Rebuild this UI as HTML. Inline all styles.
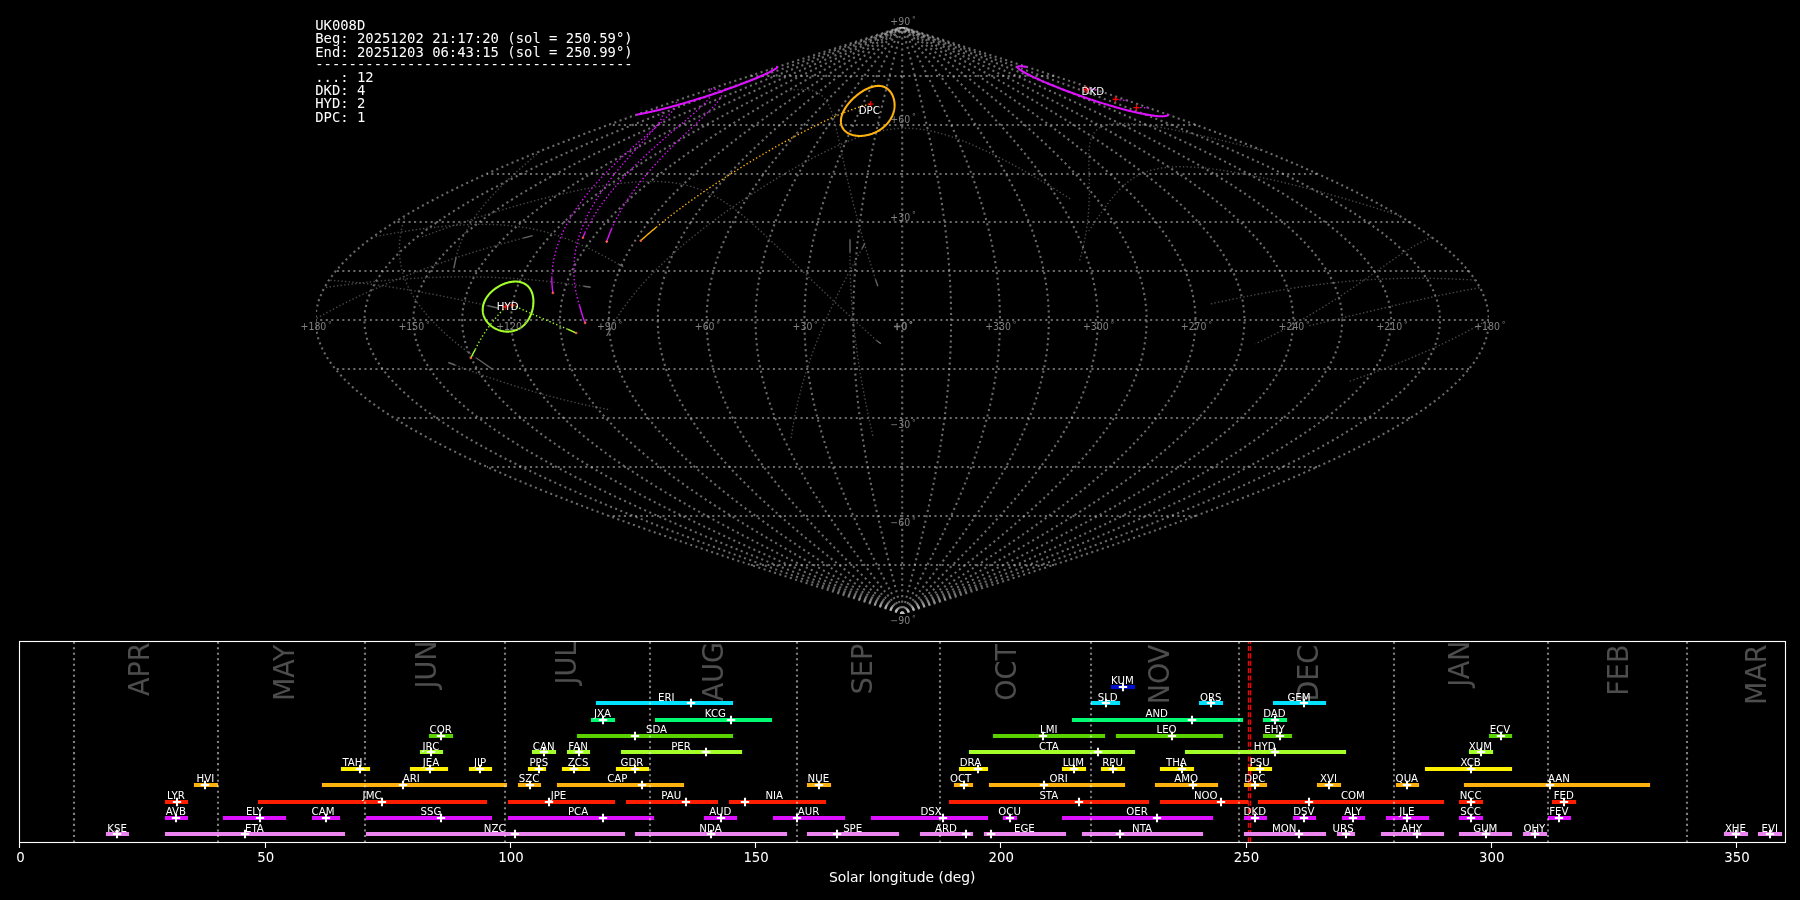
<!DOCTYPE html>
<html><head><meta charset="utf-8"><title>UK008D shower association</title>
<style>html,body{margin:0;padding:0;background:#000;}body{width:1800px;height:900px;overflow:hidden}svg{display:block}</style>
</head><body>
<svg width="1800" height="900" viewBox="0 0 1800 900" style="will-change:transform">
<rect width="1800" height="900" fill="#000"/>
<svg x="316" y="27" width="1173" height="587" viewBox="316 27 1173 587" overflow="hidden">
<g fill="none" stroke="#c0c0c0" stroke-opacity="0.55" stroke-width="2.083" stroke-dasharray="2.083 3.438">
<path d="M902.2 613.7 L902.2 603.92 L902.2 594.14 L902.2 584.36 L902.2 574.58 L902.2 564.8 L902.2 555.02 L902.2 545.24 L902.2 535.46 L902.2 525.68 L902.2 515.9 L902.2 506.12 L902.2 496.34 L902.2 486.56 L902.2 476.78 L902.2 467 L902.2 457.22 L902.2 447.44 L902.2 437.66 L902.2 427.88 L902.2 418.1 L902.2 408.32 L902.2 398.54 L902.2 388.76 L902.2 378.98 L902.2 369.2 L902.2 359.42 L902.2 349.64 L902.2 339.86 L902.2 330.08 L902.2 320.3 L902.2 310.52 L902.2 300.74 L902.2 290.96 L902.2 281.18 L902.2 271.4 L902.2 261.62 L902.2 251.84 L902.2 242.06 L902.2 232.28 L902.2 222.5 L902.2 212.72 L902.2 202.94 L902.2 193.16 L902.2 183.38 L902.2 173.6 L902.2 163.82 L902.2 154.04 L902.2 144.26 L902.2 134.48 L902.2 124.7 L902.2 114.92 L902.2 105.14 L902.2 95.36 L902.2 85.58 L902.2 75.8 L902.2 66.02 L902.2 56.24 L902.2 46.46 L902.2 36.68 L902.2 26.9"/>
<path d="M902.2 613.7 L899.64 603.92 L897.09 594.14 L894.55 584.36 L892.03 574.58 L889.54 564.8 L887.09 555.02 L884.68 545.24 L882.31 535.46 L880 525.68 L877.75 515.9 L875.57 506.12 L873.46 496.34 L871.43 486.56 L869.48 476.78 L867.62 467 L865.86 457.22 L864.2 447.44 L862.64 437.66 L861.19 427.88 L859.85 418.1 L858.63 408.32 L857.53 398.54 L856.55 388.76 L855.69 378.98 L854.97 369.2 L854.37 359.42 L853.9 349.64 L853.57 339.86 L853.37 330.08 L853.3 320.3 L853.37 310.52 L853.57 300.74 L853.9 290.96 L854.37 281.18 L854.97 271.4 L855.69 261.62 L856.55 251.84 L857.53 242.06 L858.63 232.28 L859.85 222.5 L861.19 212.72 L862.64 202.94 L864.2 193.16 L865.86 183.38 L867.62 173.6 L869.48 163.82 L871.43 154.04 L873.46 144.26 L875.57 134.48 L877.75 124.7 L880 114.92 L882.31 105.14 L884.68 95.36 L887.09 85.58 L889.54 75.8 L892.03 66.02 L894.55 56.24 L897.09 46.46 L899.64 36.68 L902.2 26.9"/>
<path d="M902.2 613.7 L897.08 603.92 L891.98 594.14 L886.9 584.36 L881.87 574.58 L876.89 564.8 L871.98 555.02 L867.15 545.24 L862.42 535.46 L857.8 525.68 L853.3 515.9 L848.93 506.12 L844.71 496.34 L840.65 486.56 L836.76 476.78 L833.04 467 L829.52 457.22 L826.2 447.44 L823.08 437.66 L820.18 427.88 L817.5 418.1 L815.06 408.32 L812.86 398.54 L810.9 388.76 L809.19 378.98 L807.73 369.2 L806.54 359.42 L805.6 349.64 L804.94 339.86 L804.53 330.08 L804.4 320.3 L804.53 310.52 L804.94 300.74 L805.6 290.96 L806.54 281.18 L807.73 271.4 L809.19 261.62 L810.9 251.84 L812.86 242.06 L815.06 232.28 L817.5 222.5 L820.18 212.72 L823.08 202.94 L826.2 193.16 L829.52 183.38 L833.04 173.6 L836.76 163.82 L840.65 154.04 L844.71 144.26 L848.93 134.48 L853.3 124.7 L857.8 114.92 L862.42 105.14 L867.15 95.36 L871.98 85.58 L876.89 75.8 L881.87 66.02 L886.9 56.24 L891.98 46.46 L897.08 36.68 L902.2 26.9"/>
<path d="M902.2 613.7 L894.52 603.92 L886.87 594.14 L879.25 584.36 L871.7 574.58 L864.23 564.8 L856.87 555.02 L849.63 545.24 L842.53 535.46 L835.6 525.68 L828.85 515.9 L822.3 506.12 L815.97 496.34 L809.88 486.56 L804.04 476.78 L798.47 467 L793.18 457.22 L788.19 447.44 L783.52 437.66 L779.17 427.88 L775.15 418.1 L771.49 408.32 L768.18 398.54 L765.24 388.76 L762.68 378.98 L760.5 369.2 L758.71 359.42 L757.31 349.64 L756.3 339.86 L755.7 330.08 L755.5 320.3 L755.7 310.52 L756.3 300.74 L757.31 290.96 L758.71 281.18 L760.5 271.4 L762.68 261.62 L765.24 251.84 L768.18 242.06 L771.49 232.28 L775.15 222.5 L779.17 212.72 L783.52 202.94 L788.19 193.16 L793.18 183.38 L798.47 173.6 L804.04 163.82 L809.88 154.04 L815.97 144.26 L822.3 134.48 L828.85 124.7 L835.6 114.92 L842.53 105.14 L849.63 95.36 L856.87 85.58 L864.23 75.8 L871.7 66.02 L879.25 56.24 L886.87 46.46 L894.52 36.68 L902.2 26.9"/>
<path d="M902.2 613.7 L891.96 603.92 L881.75 594.14 L871.6 584.36 L861.53 574.58 L851.57 564.8 L841.76 555.02 L832.1 545.24 L822.64 535.46 L813.4 525.68 L804.4 515.9 L795.67 506.12 L787.23 496.34 L779.1 486.56 L771.32 476.78 L763.89 467 L756.84 457.22 L750.19 447.44 L743.96 437.66 L738.16 427.88 L732.81 418.1 L727.92 408.32 L723.51 398.54 L719.59 388.76 L716.17 378.98 L713.26 369.2 L710.87 359.42 L709.01 349.64 L707.67 339.86 L706.87 330.08 L706.6 320.3 L706.87 310.52 L707.67 300.74 L709.01 290.96 L710.87 281.18 L713.26 271.4 L716.17 261.62 L719.59 251.84 L723.51 242.06 L727.92 232.28 L732.81 222.5 L738.16 212.72 L743.96 202.94 L750.19 193.16 L756.84 183.38 L763.89 173.6 L771.32 163.82 L779.1 154.04 L787.23 144.26 L795.67 134.48 L804.4 124.7 L813.4 114.92 L822.64 105.14 L832.1 95.36 L841.76 85.58 L851.57 75.8 L861.53 66.02 L871.6 56.24 L881.75 46.46 L891.96 36.68 L902.2 26.9"/>
<path d="M902.2 613.7 L889.4 603.92 L876.64 594.14 L863.95 584.36 L851.37 574.58 L838.92 564.8 L826.65 555.02 L814.58 545.24 L802.75 535.46 L791.2 525.68 L779.95 515.9 L769.04 506.12 L758.49 496.34 L748.33 486.56 L738.6 476.78 L729.31 467 L720.5 457.22 L712.19 447.44 L704.4 437.66 L697.15 427.88 L690.46 418.1 L684.35 408.32 L678.84 398.54 L673.94 388.76 L669.67 378.98 L666.03 369.2 L663.04 359.42 L660.71 349.64 L659.04 339.86 L658.04 330.08 L657.7 320.3 L658.04 310.52 L659.04 300.74 L660.71 290.96 L663.04 281.18 L666.03 271.4 L669.67 261.62 L673.94 251.84 L678.84 242.06 L684.35 232.28 L690.46 222.5 L697.15 212.72 L704.4 202.94 L712.19 193.16 L720.5 183.38 L729.31 173.6 L738.6 163.82 L748.33 154.04 L758.49 144.26 L769.04 134.48 L779.95 124.7 L791.2 114.92 L802.75 105.14 L814.58 95.36 L826.65 85.58 L838.92 75.8 L851.37 66.02 L863.95 56.24 L876.64 46.46 L889.4 36.68 L902.2 26.9"/>
<path d="M902.2 613.7 L886.84 603.92 L871.53 594.14 L856.3 584.36 L841.2 574.58 L826.26 564.8 L811.53 555.02 L797.05 545.24 L782.86 535.46 L769 525.68 L755.5 515.9 L742.4 506.12 L729.74 496.34 L717.56 486.56 L705.88 476.78 L694.73 467 L684.16 457.22 L674.19 447.44 L664.83 437.66 L656.13 427.88 L648.11 418.1 L640.78 408.32 L634.17 398.54 L628.29 388.76 L623.16 378.98 L618.8 369.2 L615.21 359.42 L612.41 349.64 L610.41 339.86 L609.2 330.08 L608.8 320.3 L609.2 310.52 L610.41 300.74 L612.41 290.96 L615.21 281.18 L618.8 271.4 L623.16 261.62 L628.29 251.84 L634.17 242.06 L640.78 232.28 L648.11 222.5 L656.13 212.72 L664.83 202.94 L674.19 193.16 L684.16 183.38 L694.73 173.6 L705.88 163.82 L717.56 154.04 L729.74 144.26 L742.4 134.48 L755.5 124.7 L769 114.92 L782.86 105.14 L797.05 95.36 L811.53 85.58 L826.26 75.8 L841.2 66.02 L856.3 56.24 L871.53 46.46 L886.84 36.68 L902.2 26.9"/>
<path d="M902.2 613.7 L884.29 603.92 L866.42 594.14 L848.65 584.36 L831.03 574.58 L813.61 564.8 L796.42 555.02 L779.53 545.24 L762.97 535.46 L746.8 525.68 L731.05 515.9 L715.77 506.12 L701 496.34 L686.78 486.56 L673.16 476.78 L660.16 467 L647.82 457.22 L636.18 447.44 L625.27 437.66 L615.12 427.88 L605.76 418.1 L597.21 408.32 L589.49 398.54 L582.64 388.76 L576.65 378.98 L571.56 369.2 L567.38 359.42 L564.11 349.64 L561.78 339.86 L560.37 330.08 L559.9 320.3 L560.37 310.52 L561.78 300.74 L564.11 290.96 L567.38 281.18 L571.56 271.4 L576.65 261.62 L582.64 251.84 L589.49 242.06 L597.21 232.28 L605.76 222.5 L615.12 212.72 L625.27 202.94 L636.18 193.16 L647.82 183.38 L660.16 173.6 L673.16 163.82 L686.78 154.04 L701 144.26 L715.77 134.48 L731.05 124.7 L746.8 114.92 L762.97 105.14 L779.53 95.36 L796.42 85.58 L813.61 75.8 L831.03 66.02 L848.65 56.24 L866.42 46.46 L884.29 36.68 L902.2 26.9"/>
<path d="M902.2 613.7 L881.73 603.92 L861.31 594.14 L841 584.36 L820.86 574.58 L800.95 564.8 L781.31 555.02 L762.01 545.24 L743.08 535.46 L724.6 525.68 L706.6 515.9 L689.14 506.12 L672.26 496.34 L656.01 486.56 L640.44 476.78 L625.58 467 L611.48 457.22 L598.18 447.44 L585.71 437.66 L574.11 427.88 L563.41 418.1 L553.64 408.32 L544.82 398.54 L536.98 388.76 L530.15 378.98 L524.33 369.2 L519.55 359.42 L515.82 349.64 L513.14 339.86 L511.54 330.08 L511 320.3 L511.54 310.52 L513.14 300.74 L515.82 290.96 L519.55 281.18 L524.33 271.4 L530.15 261.62 L536.98 251.84 L544.82 242.06 L553.64 232.28 L563.41 222.5 L574.11 212.72 L585.71 202.94 L598.18 193.16 L611.48 183.38 L625.58 173.6 L640.44 163.82 L656.01 154.04 L672.26 144.26 L689.14 134.48 L706.6 124.7 L724.6 114.92 L743.08 105.14 L762.01 95.36 L781.31 85.58 L800.95 75.8 L820.86 66.02 L841 56.24 L861.31 46.46 L881.73 36.68 L902.2 26.9"/>
<path d="M902.2 613.7 L879.17 603.92 L856.2 594.14 L833.35 584.36 L810.7 574.58 L788.29 564.8 L766.2 555.02 L744.48 545.24 L723.2 535.46 L702.4 525.68 L682.15 515.9 L662.5 506.12 L643.52 496.34 L625.24 486.56 L607.72 476.78 L591 467 L575.14 457.22 L560.18 447.44 L546.15 437.66 L533.1 427.88 L521.06 418.1 L510.07 408.32 L500.15 398.54 L491.33 388.76 L483.64 378.98 L477.1 369.2 L471.72 359.42 L467.52 349.64 L464.51 339.86 L462.7 330.08 L462.1 320.3 L462.7 310.52 L464.51 300.74 L467.52 290.96 L471.72 281.18 L477.1 271.4 L483.64 261.62 L491.33 251.84 L500.15 242.06 L510.07 232.28 L521.06 222.5 L533.1 212.72 L546.15 202.94 L560.18 193.16 L575.14 183.38 L591 173.6 L607.72 163.82 L625.24 154.04 L643.52 144.26 L662.5 134.48 L682.15 124.7 L702.4 114.92 L723.2 105.14 L744.48 95.36 L766.2 85.58 L788.29 75.8 L810.7 66.02 L833.35 56.24 L856.2 46.46 L879.17 36.68 L902.2 26.9"/>
<path d="M902.2 613.7 L876.61 603.92 L851.09 594.14 L825.7 584.36 L800.53 574.58 L775.64 564.8 L751.09 555.02 L726.96 545.24 L703.31 535.46 L680.2 525.68 L657.7 515.9 L635.87 506.12 L614.77 496.34 L594.46 486.56 L575 476.78 L556.42 467 L538.8 457.22 L522.18 447.44 L506.59 437.66 L492.09 427.88 L478.71 418.1 L466.5 408.32 L455.48 398.54 L445.68 388.76 L437.13 378.98 L429.86 369.2 L423.89 359.42 L419.22 349.64 L415.88 339.86 L413.87 330.08 L413.2 320.3 L413.87 310.52 L415.88 300.74 L419.22 290.96 L423.89 281.18 L429.86 271.4 L437.13 261.62 L445.68 251.84 L455.48 242.06 L466.5 232.28 L478.71 222.5 L492.09 212.72 L506.59 202.94 L522.18 193.16 L538.8 183.38 L556.42 173.6 L575 163.82 L594.46 154.04 L614.77 144.26 L635.87 134.48 L657.7 124.7 L680.2 114.92 L703.31 105.14 L726.96 95.36 L751.09 85.58 L775.64 75.8 L800.53 66.02 L825.7 56.24 L851.09 46.46 L876.61 36.68 L902.2 26.9"/>
<path d="M902.2 613.7 L874.05 603.92 L845.97 594.14 L818.05 584.36 L790.36 574.58 L762.98 564.8 L735.98 555.02 L709.43 545.24 L683.42 535.46 L658 525.68 L633.25 515.9 L609.24 506.12 L586.03 496.34 L563.69 486.56 L542.27 476.78 L521.85 467 L502.46 457.22 L484.17 447.44 L467.03 437.66 L451.08 427.88 L436.36 418.1 L422.93 408.32 L410.8 398.54 L400.03 388.76 L390.63 378.98 L382.63 369.2 L376.05 359.42 L370.92 349.64 L367.25 339.86 L365.04 330.08 L364.3 320.3 L365.04 310.52 L367.25 300.74 L370.92 290.96 L376.05 281.18 L382.63 271.4 L390.63 261.62 L400.03 251.84 L410.8 242.06 L422.93 232.28 L436.36 222.5 L451.08 212.72 L467.03 202.94 L484.17 193.16 L502.46 183.38 L521.85 173.6 L542.27 163.82 L563.69 154.04 L586.03 144.26 L609.24 134.48 L633.25 124.7 L658 114.92 L683.42 105.14 L709.43 95.36 L735.98 85.58 L762.98 75.8 L790.36 66.02 L818.05 56.24 L845.97 46.46 L874.05 36.68 L902.2 26.9"/>
<path d="M902.2 613.7 L871.49 603.92 L840.86 594.14 L810.4 584.36 L780.2 574.58 L750.32 564.8 L720.87 555.02 L691.91 545.24 L663.53 535.46 L635.8 525.68 L608.8 515.9 L582.61 506.12 L557.29 496.34 L532.91 486.56 L509.55 476.78 L487.27 467 L466.12 457.22 L446.17 447.44 L427.47 437.66 L410.07 427.88 L394.02 418.1 L379.36 408.32 L366.13 398.54 L354.38 388.76 L344.12 378.98 L335.39 369.2 L328.22 359.42 L322.62 349.64 L318.61 339.86 L316.2 330.08 L315.4 320.3 L316.2 310.52 L318.61 300.74 L322.62 290.96 L328.22 281.18 L335.39 271.4 L344.12 261.62 L354.38 251.84 L366.13 242.06 L379.36 232.28 L394.02 222.5 L410.07 212.72 L427.47 202.94 L446.17 193.16 L466.12 183.38 L487.27 173.6 L509.55 163.82 L532.91 154.04 L557.29 144.26 L582.61 134.48 L608.8 124.7 L635.8 114.92 L663.53 105.14 L691.91 95.36 L720.87 85.58 L750.32 75.8 L780.2 66.02 L810.4 56.24 L840.86 46.46 L871.49 36.68 L902.2 26.9"/>
<path d="M902.2 613.7 L932.91 603.92 L963.54 594.14 L994 584.36 L1024.2 574.58 L1054.07 564.8 L1083.53 555.02 L1112.49 545.24 L1140.87 535.46 L1168.6 525.68 L1195.6 515.9 L1221.79 506.12 L1247.11 496.34 L1271.49 486.56 L1294.85 476.78 L1317.13 467 L1338.28 457.22 L1358.23 447.44 L1376.93 437.66 L1394.33 427.88 L1410.38 418.1 L1425.04 408.32 L1438.27 398.54 L1450.02 388.76 L1460.28 378.98 L1469 369.2 L1476.18 359.42 L1481.78 349.64 L1485.79 339.86 L1488.2 330.08 L1489 320.3 L1488.2 310.52 L1485.79 300.74 L1481.78 290.96 L1476.18 281.18 L1469 271.4 L1460.28 261.62 L1450.02 251.84 L1438.27 242.06 L1425.04 232.28 L1410.38 222.5 L1394.33 212.72 L1376.93 202.94 L1358.23 193.16 L1338.28 183.38 L1317.13 173.6 L1294.85 163.82 L1271.49 154.04 L1247.11 144.26 L1221.79 134.48 L1195.6 124.7 L1168.6 114.92 L1140.87 105.14 L1112.49 95.36 L1083.53 85.58 L1054.07 75.8 L1024.2 66.02 L994 56.24 L963.54 46.46 L932.91 36.68 L902.2 26.9"/>
<path d="M902.2 613.7 L930.35 603.92 L958.43 594.14 L986.35 584.36 L1014.04 574.58 L1041.42 564.8 L1068.42 555.02 L1094.97 545.24 L1120.98 535.46 L1146.4 525.68 L1171.15 515.9 L1195.16 506.12 L1218.37 496.34 L1240.71 486.56 L1262.13 476.78 L1282.55 467 L1301.94 457.22 L1320.23 447.44 L1337.37 437.66 L1353.32 427.88 L1368.04 418.1 L1381.47 408.32 L1393.6 398.54 L1404.37 388.76 L1413.77 378.98 L1421.77 369.2 L1428.35 359.42 L1433.48 349.64 L1437.15 339.86 L1439.36 330.08 L1440.1 320.3 L1439.36 310.52 L1437.15 300.74 L1433.48 290.96 L1428.35 281.18 L1421.77 271.4 L1413.77 261.62 L1404.37 251.84 L1393.6 242.06 L1381.47 232.28 L1368.04 222.5 L1353.32 212.72 L1337.37 202.94 L1320.23 193.16 L1301.94 183.38 L1282.55 173.6 L1262.13 163.82 L1240.71 154.04 L1218.37 144.26 L1195.16 134.48 L1171.15 124.7 L1146.4 114.92 L1120.98 105.14 L1094.97 95.36 L1068.42 85.58 L1041.42 75.8 L1014.04 66.02 L986.35 56.24 L958.43 46.46 L930.35 36.68 L902.2 26.9"/>
<path d="M902.2 613.7 L927.79 603.92 L953.31 594.14 L978.7 584.36 L1003.87 574.58 L1028.76 564.8 L1053.31 555.02 L1077.44 545.24 L1101.09 535.46 L1124.2 525.68 L1146.7 515.9 L1168.53 506.12 L1189.63 496.34 L1209.94 486.56 L1229.4 476.78 L1247.98 467 L1265.6 457.22 L1282.22 447.44 L1297.81 437.66 L1312.31 427.88 L1325.69 418.1 L1337.9 408.32 L1348.92 398.54 L1358.72 388.76 L1367.27 378.98 L1374.54 369.2 L1380.51 359.42 L1385.18 349.64 L1388.52 339.86 L1390.53 330.08 L1391.2 320.3 L1390.53 310.52 L1388.52 300.74 L1385.18 290.96 L1380.51 281.18 L1374.54 271.4 L1367.27 261.62 L1358.72 251.84 L1348.92 242.06 L1337.9 232.28 L1325.69 222.5 L1312.31 212.72 L1297.81 202.94 L1282.22 193.16 L1265.6 183.38 L1247.98 173.6 L1229.4 163.82 L1209.94 154.04 L1189.63 144.26 L1168.53 134.48 L1146.7 124.7 L1124.2 114.92 L1101.09 105.14 L1077.44 95.36 L1053.31 85.58 L1028.76 75.8 L1003.87 66.02 L978.7 56.24 L953.31 46.46 L927.79 36.68 L902.2 26.9"/>
<path d="M902.2 613.7 L925.23 603.92 L948.2 594.14 L971.05 584.36 L993.7 574.58 L1016.11 564.8 L1038.2 555.02 L1059.92 545.24 L1081.2 535.46 L1102 525.68 L1122.25 515.9 L1141.9 506.12 L1160.88 496.34 L1179.16 486.56 L1196.68 476.78 L1213.4 467 L1229.26 457.22 L1244.22 447.44 L1258.25 437.66 L1271.3 427.88 L1283.34 418.1 L1294.33 408.32 L1304.25 398.54 L1313.07 388.76 L1320.76 378.98 L1327.3 369.2 L1332.68 359.42 L1336.88 349.64 L1339.89 339.86 L1341.7 330.08 L1342.3 320.3 L1341.7 310.52 L1339.89 300.74 L1336.88 290.96 L1332.68 281.18 L1327.3 271.4 L1320.76 261.62 L1313.07 251.84 L1304.25 242.06 L1294.33 232.28 L1283.34 222.5 L1271.3 212.72 L1258.25 202.94 L1244.22 193.16 L1229.26 183.38 L1213.4 173.6 L1196.68 163.82 L1179.16 154.04 L1160.88 144.26 L1141.9 134.48 L1122.25 124.7 L1102 114.92 L1081.2 105.14 L1059.92 95.36 L1038.2 85.58 L1016.11 75.8 L993.7 66.02 L971.05 56.24 L948.2 46.46 L925.23 36.68 L902.2 26.9"/>
<path d="M902.2 613.7 L922.67 603.92 L943.09 594.14 L963.4 584.36 L983.54 574.58 L1003.45 564.8 L1023.09 555.02 L1042.39 545.24 L1061.32 535.46 L1079.8 525.68 L1097.8 515.9 L1115.26 506.12 L1132.14 496.34 L1148.39 486.56 L1163.96 476.78 L1178.82 467 L1192.92 457.22 L1206.22 447.44 L1218.69 437.66 L1230.29 427.88 L1240.99 418.1 L1250.76 408.32 L1259.58 398.54 L1267.42 388.76 L1274.25 378.98 L1280.07 369.2 L1284.85 359.42 L1288.58 349.64 L1291.26 339.86 L1292.86 330.08 L1293.4 320.3 L1292.86 310.52 L1291.26 300.74 L1288.58 290.96 L1284.85 281.18 L1280.07 271.4 L1274.25 261.62 L1267.42 251.84 L1259.58 242.06 L1250.76 232.28 L1240.99 222.5 L1230.29 212.72 L1218.69 202.94 L1206.22 193.16 L1192.92 183.38 L1178.82 173.6 L1163.96 163.82 L1148.39 154.04 L1132.14 144.26 L1115.26 134.48 L1097.8 124.7 L1079.8 114.92 L1061.32 105.14 L1042.39 95.36 L1023.09 85.58 L1003.45 75.8 L983.54 66.02 L963.4 56.24 L943.09 46.46 L922.67 36.68 L902.2 26.9"/>
<path d="M902.2 613.7 L920.11 603.92 L937.98 594.14 L955.75 584.36 L973.37 574.58 L990.79 564.8 L1007.98 555.02 L1024.87 545.24 L1041.43 535.46 L1057.6 525.68 L1073.35 515.9 L1088.63 506.12 L1103.4 496.34 L1117.62 486.56 L1131.24 476.78 L1144.24 467 L1156.58 457.22 L1168.22 447.44 L1179.13 437.66 L1189.28 427.88 L1198.64 418.1 L1207.19 408.32 L1214.91 398.54 L1221.76 388.76 L1227.75 378.98 L1232.84 369.2 L1237.02 359.42 L1240.29 349.64 L1242.62 339.86 L1244.03 330.08 L1244.5 320.3 L1244.03 310.52 L1242.62 300.74 L1240.29 290.96 L1237.02 281.18 L1232.84 271.4 L1227.75 261.62 L1221.76 251.84 L1214.91 242.06 L1207.19 232.28 L1198.64 222.5 L1189.28 212.72 L1179.13 202.94 L1168.22 193.16 L1156.58 183.38 L1144.24 173.6 L1131.24 163.82 L1117.62 154.04 L1103.4 144.26 L1088.63 134.48 L1073.35 124.7 L1057.6 114.92 L1041.43 105.14 L1024.87 95.36 L1007.98 85.58 L990.79 75.8 L973.37 66.02 L955.75 56.24 L937.98 46.46 L920.11 36.68 L902.2 26.9"/>
<path d="M902.2 613.7 L917.56 603.92 L932.87 594.14 L948.1 584.36 L963.2 574.58 L978.14 564.8 L992.87 555.02 L1007.35 545.24 L1021.54 535.46 L1035.4 525.68 L1048.9 515.9 L1062 506.12 L1074.66 496.34 L1086.84 486.56 L1098.52 476.78 L1109.67 467 L1120.24 457.22 L1130.21 447.44 L1139.57 437.66 L1148.27 427.88 L1156.29 418.1 L1163.62 408.32 L1170.23 398.54 L1176.11 388.76 L1181.24 378.98 L1185.6 369.2 L1189.19 359.42 L1191.99 349.64 L1193.99 339.86 L1195.2 330.08 L1195.6 320.3 L1195.2 310.52 L1193.99 300.74 L1191.99 290.96 L1189.19 281.18 L1185.6 271.4 L1181.24 261.62 L1176.11 251.84 L1170.23 242.06 L1163.62 232.28 L1156.29 222.5 L1148.27 212.72 L1139.57 202.94 L1130.21 193.16 L1120.24 183.38 L1109.67 173.6 L1098.52 163.82 L1086.84 154.04 L1074.66 144.26 L1062 134.48 L1048.9 124.7 L1035.4 114.92 L1021.54 105.14 L1007.35 95.36 L992.87 85.58 L978.14 75.8 L963.2 66.02 L948.1 56.24 L932.87 46.46 L917.56 36.68 L902.2 26.9"/>
<path d="M902.2 613.7 L915 603.92 L927.76 594.14 L940.45 584.36 L953.03 574.58 L965.48 564.8 L977.75 555.02 L989.82 545.24 L1001.65 535.46 L1013.2 525.68 L1024.45 515.9 L1035.36 506.12 L1045.91 496.34 L1056.07 486.56 L1065.8 476.78 L1075.09 467 L1083.9 457.22 L1092.21 447.44 L1100 437.66 L1107.25 427.88 L1113.94 418.1 L1120.05 408.32 L1125.56 398.54 L1130.46 388.76 L1134.73 378.98 L1138.37 369.2 L1141.36 359.42 L1143.69 349.64 L1145.36 339.86 L1146.36 330.08 L1146.7 320.3 L1146.36 310.52 L1145.36 300.74 L1143.69 290.96 L1141.36 281.18 L1138.37 271.4 L1134.73 261.62 L1130.46 251.84 L1125.56 242.06 L1120.05 232.28 L1113.94 222.5 L1107.25 212.72 L1100 202.94 L1092.21 193.16 L1083.9 183.38 L1075.09 173.6 L1065.8 163.82 L1056.07 154.04 L1045.91 144.26 L1035.36 134.48 L1024.45 124.7 L1013.2 114.92 L1001.65 105.14 L989.82 95.36 L977.75 85.58 L965.48 75.8 L953.03 66.02 L940.45 56.24 L927.76 46.46 L915 36.68 L902.2 26.9"/>
<path d="M902.2 613.7 L912.44 603.92 L922.65 594.14 L932.8 584.36 L942.87 574.58 L952.83 564.8 L962.64 555.02 L972.3 545.24 L981.76 535.46 L991 525.68 L1000 515.9 L1008.73 506.12 L1017.17 496.34 L1025.3 486.56 L1033.08 476.78 L1040.51 467 L1047.56 457.22 L1054.21 447.44 L1060.44 437.66 L1066.24 427.88 L1071.59 418.1 L1076.48 408.32 L1080.89 398.54 L1084.81 388.76 L1088.23 378.98 L1091.14 369.2 L1093.53 359.42 L1095.39 349.64 L1096.73 339.86 L1097.53 330.08 L1097.8 320.3 L1097.53 310.52 L1096.73 300.74 L1095.39 290.96 L1093.53 281.18 L1091.14 271.4 L1088.23 261.62 L1084.81 251.84 L1080.89 242.06 L1076.48 232.28 L1071.59 222.5 L1066.24 212.72 L1060.44 202.94 L1054.21 193.16 L1047.56 183.38 L1040.51 173.6 L1033.08 163.82 L1025.3 154.04 L1017.17 144.26 L1008.73 134.48 L1000 124.7 L991 114.92 L981.76 105.14 L972.3 95.36 L962.64 85.58 L952.83 75.8 L942.87 66.02 L932.8 56.24 L922.65 46.46 L912.44 36.68 L902.2 26.9"/>
<path d="M902.2 613.7 L909.88 603.92 L917.53 594.14 L925.15 584.36 L932.7 574.58 L940.17 564.8 L947.53 555.02 L954.77 545.24 L961.87 535.46 L968.8 525.68 L975.55 515.9 L982.1 506.12 L988.43 496.34 L994.52 486.56 L1000.36 476.78 L1005.93 467 L1011.22 457.22 L1016.21 447.44 L1020.88 437.66 L1025.23 427.88 L1029.25 418.1 L1032.91 408.32 L1036.22 398.54 L1039.16 388.76 L1041.72 378.98 L1043.9 369.2 L1045.69 359.42 L1047.09 349.64 L1048.1 339.86 L1048.7 330.08 L1048.9 320.3 L1048.7 310.52 L1048.1 300.74 L1047.09 290.96 L1045.69 281.18 L1043.9 271.4 L1041.72 261.62 L1039.16 251.84 L1036.22 242.06 L1032.91 232.28 L1029.25 222.5 L1025.23 212.72 L1020.88 202.94 L1016.21 193.16 L1011.22 183.38 L1005.93 173.6 L1000.36 163.82 L994.52 154.04 L988.43 144.26 L982.1 134.48 L975.55 124.7 L968.8 114.92 L961.87 105.14 L954.77 95.36 L947.53 85.58 L940.17 75.8 L932.7 66.02 L925.15 56.24 L917.53 46.46 L909.88 36.68 L902.2 26.9"/>
<path d="M902.2 613.7 L907.32 603.92 L912.42 594.14 L917.5 584.36 L922.53 574.58 L927.51 564.8 L932.42 555.02 L937.25 545.24 L941.98 535.46 L946.6 525.68 L951.1 515.9 L955.47 506.12 L959.69 496.34 L963.75 486.56 L967.64 476.78 L971.36 467 L974.88 457.22 L978.2 447.44 L981.32 437.66 L984.22 427.88 L986.9 418.1 L989.34 408.32 L991.54 398.54 L993.5 388.76 L995.21 378.98 L996.67 369.2 L997.86 359.42 L998.8 349.64 L999.46 339.86 L999.87 330.08 L1000 320.3 L999.87 310.52 L999.46 300.74 L998.8 290.96 L997.86 281.18 L996.67 271.4 L995.21 261.62 L993.5 251.84 L991.54 242.06 L989.34 232.28 L986.9 222.5 L984.22 212.72 L981.32 202.94 L978.2 193.16 L974.88 183.38 L971.36 173.6 L967.64 163.82 L963.75 154.04 L959.69 144.26 L955.47 134.48 L951.1 124.7 L946.6 114.92 L941.98 105.14 L937.25 95.36 L932.42 85.58 L927.51 75.8 L922.53 66.02 L917.5 56.24 L912.42 46.46 L907.32 36.68 L902.2 26.9"/>
<path d="M902.2 613.7 L904.76 603.92 L907.31 594.14 L909.85 584.36 L912.37 574.58 L914.86 564.8 L917.31 555.02 L919.72 545.24 L922.09 535.46 L924.4 525.68 L926.65 515.9 L928.83 506.12 L930.94 496.34 L932.97 486.56 L934.92 476.78 L936.78 467 L938.54 457.22 L940.2 447.44 L941.76 437.66 L943.21 427.88 L944.55 418.1 L945.77 408.32 L946.87 398.54 L947.85 388.76 L948.71 378.98 L949.43 369.2 L950.03 359.42 L950.5 349.64 L950.83 339.86 L951.03 330.08 L951.1 320.3 L951.03 310.52 L950.83 300.74 L950.5 290.96 L950.03 281.18 L949.43 271.4 L948.71 261.62 L947.85 251.84 L946.87 242.06 L945.77 232.28 L944.55 222.5 L943.21 212.72 L941.76 202.94 L940.2 193.16 L938.54 183.38 L936.78 173.6 L934.92 163.82 L932.97 154.04 L930.94 144.26 L928.83 134.48 L926.65 124.7 L924.4 114.92 L922.09 105.14 L919.72 95.36 L917.31 85.58 L914.86 75.8 L912.37 66.02 L909.85 56.24 L907.31 46.46 L904.76 36.68 L902.2 26.9"/>
<path d="M902 614 L902 614 L902 614 L902 614 L902 614 L902 614 L902 614 L902 614 L902 614 L902 614 L902 614 L902 614 L902 614"/>
<path d="M902 614 L902 614 L902 614 L902 614 L902 614 L902 614 L902 614 L902 614 L902 614 L902 614 L902 614 L902 614 L902 614"/>
<path d="M902 565 L890 565 L877 565 L864 565 L852 565 L839 565 L826 565 L814 565 L801 565 L788 565 L776 565 L763 565 L750 565"/>
<path d="M1054 565 L1041 565 L1029 565 L1016 565 L1003 565 L991 565 L978 565 L965 565 L953 565 L940 565 L928 565 L915 565 L902 565"/>
<path d="M902 516 L878 516 L853 516 L829 516 L804 516 L780 516 L756 516 L731 516 L707 516 L682 516 L658 516 L633 516 L609 516"/>
<path d="M1196 516 L1171 516 L1147 516 L1122 516 L1098 516 L1073 516 L1049 516 L1024 516 L1000 516 L976 516 L951 516 L927 516 L902 516"/>
<path d="M902 467 L868 467 L833 467 L798 467 L764 467 L729 467 L695 467 L660 467 L626 467 L591 467 L556 467 L522 467 L487 467"/>
<path d="M1317 467 L1283 467 L1248 467 L1213 467 L1179 467 L1144 467 L1110 467 L1075 467 L1041 467 L1006 467 L971 467 L937 467 L902 467"/>
<path d="M902 418 L860 418 L818 418 L775 418 L733 418 L690 418 L648 418 L606 418 L563 418 L521 418 L479 418 L436 418 L394 418"/>
<path d="M1410 418 L1368 418 L1326 418 L1283 418 L1241 418 L1199 418 L1156 418 L1114 418 L1072 418 L1029 418 L987 418 L945 418 L902 418"/>
<path d="M902 369 L855 369 L808 369 L760 369 L713 369 L666 369 L619 369 L572 369 L524 369 L477 369 L430 369 L383 369 L335 369"/>
<path d="M1469 369 L1422 369 L1375 369 L1327 369 L1280 369 L1233 369 L1186 369 L1138 369 L1091 369 L1044 369 L997 369 L949 369 L902 369"/>
<path d="M902 320 L853 320 L804 320 L756 320 L707 320 L658 320 L609 320 L560 320 L511 320 L462 320 L413 320 L364 320 L315 320"/>
<path d="M1489 320 L1440 320 L1391 320 L1342 320 L1293 320 L1244 320 L1196 320 L1147 320 L1098 320 L1049 320 L1000 320 L951 320 L902 320"/>
<path d="M902 271 L855 271 L808 271 L760 271 L713 271 L666 271 L619 271 L572 271 L524 271 L477 271 L430 271 L383 271 L335 271"/>
<path d="M1469 271 L1422 271 L1375 271 L1327 271 L1280 271 L1233 271 L1186 271 L1138 271 L1091 271 L1044 271 L997 271 L949 271 L902 271"/>
<path d="M902 222 L860 222 L818 222 L775 222 L733 222 L690 222 L648 222 L606 222 L563 222 L521 222 L479 222 L436 222 L394 222"/>
<path d="M1410 222 L1368 222 L1326 222 L1283 222 L1241 222 L1199 222 L1156 222 L1114 222 L1072 222 L1029 222 L987 222 L945 222 L902 222"/>
<path d="M902 174 L868 174 L833 174 L798 174 L764 174 L729 174 L695 174 L660 174 L626 174 L591 174 L556 174 L522 174 L487 174"/>
<path d="M1317 174 L1283 174 L1248 174 L1213 174 L1179 174 L1144 174 L1110 174 L1075 174 L1041 174 L1006 174 L971 174 L937 174 L902 174"/>
<path d="M902 125 L878 125 L853 125 L829 125 L804 125 L780 125 L756 125 L731 125 L707 125 L682 125 L658 125 L633 125 L609 125"/>
<path d="M1196 125 L1171 125 L1147 125 L1122 125 L1098 125 L1073 125 L1049 125 L1024 125 L1000 125 L976 125 L951 125 L927 125 L902 125"/>
<path d="M902 76 L890 76 L877 76 L864 76 L852 76 L839 76 L826 76 L814 76 L801 76 L788 76 L776 76 L763 76 L750 76"/>
<path d="M1054 76 L1041 76 L1029 76 L1016 76 L1003 76 L991 76 L978 76 L965 76 L953 76 L940 76 L928 76 L915 76 L902 76"/>
<path d="M902 27 L902 27 L902 27 L902 27 L902 27 L902 27 L902 27 L902 27 L902 27 L902 27 L902 27 L902 27 L902 27"/>
<path d="M902 27 L902 27 L902 27 L902 27 L902 27 L902 27 L902 27 L902 27 L902 27 L902 27 L902 27 L902 27 L902 27"/>
</g>
<g fill="none" stroke="#666" stroke-opacity="0.7" stroke-width="1.389" stroke-dasharray="1.389 2.292">
<path d="M523.3 238.2 L522.33 238.44 L521.36 238.69 L520.39 238.94 L519.42 239.18 L518.45 239.43 L517.47 239.69 L516.5 239.94 L515.53 240.19 L514.55 240.45 L513.58 240.7 L512.6 240.96 L511.63 241.22 L510.65 241.48 L509.67 241.74 L508.7 242 L507.72 242.27 L506.74 242.53 L505.76 242.8 L504.78 243.07 L503.8 243.33 L502.83 243.6 L501.85 243.88 L500.87 244.15 L499.89 244.42 L498.91 244.7 L497.92 244.97 L496.94 245.25 L495.96 245.53 L494.98 245.81 L494 246.09 L493.02 246.37 L492.04 246.66 L491.05 246.94 L490.07 247.23 L489.09 247.51 L488.11 247.8 L487.13 248.09 L486.14 248.38 L485.16 248.67 L484.18 248.96 L483.2 249.26 L482.22 249.55 L481.23 249.85 L480.25 250.15 L479.27 250.44 L478.29 250.74 L477.31 251.04 L476.32 251.34 L475.34 251.65 L474.36 251.95 L473.38 252.25 L472.4 252.56 L471.42 252.87 L470.44 253.17 L469.46 253.48 L468.48 253.79 L467.5 254.1 L466.52 254.41 L465.55 254.73 L464.57 255.04 L463.59 255.35 L462.61 255.67 L461.64 255.99 L460.66 256.3 L459.68 256.62 L458.71 256.94 L457.73 257.26 L456.76 257.58 L455.78 257.9 L454.81 258.23 L453.84 258.55 L452.87 258.88 L451.89 259.2 L450.92 259.53 L449.95 259.86 L448.98 260.18 L448.02 260.51 L447.05 260.84 L446.08 261.18 L445.11 261.51 L444.15 261.84 L443.18 262.17 L442.22 262.51 L441.25 262.84 L440.29 263.18 L439.33 263.52 L438.37 263.85 L437.41 264.19 L436.45 264.53 L435.49 264.87 L434.53 265.21 L433.58 265.56 L432.62 265.9 L431.67 266.24 L430.72 266.59 L429.76 266.93 L428.81 267.28 L427.86 267.62 L426.91 267.97 L425.97 268.32 L425.02 268.67 L424.07 269.02 L423.13 269.37 L422.18 269.72 L421.24 270.07 L420.3 270.42 L419.36 270.77 L418.42 271.13 L417.49 271.48 L416.55 271.84 L415.62 272.19 L414.68 272.55 L413.75 272.91 L412.82 273.26 L411.89 273.62 L410.96 273.98 L410.04 274.34 L409.11 274.7 L408.19 275.06 L407.26 275.42 L406.34 275.79 L405.42 276.15 L404.51 276.51 L403.59 276.88 L402.67 277.24 L401.76 277.61 L400.85 277.97 L399.94 278.34 L399.03 278.7 L398.12 279.07 L397.22 279.44 L396.31 279.81 L395.41 280.18 L394.51 280.55 L393.61 280.92 L392.72 281.29 L391.82 281.66 L390.93 282.03 L390.04 282.4 L389.14 282.78 L388.26 283.15 L387.37 283.52 L386.48 283.9 L385.6 284.27 L384.72 284.65 L383.84 285.02 L382.96 285.4 L382.09 285.78 L381.21 286.15 L380.34 286.53 L379.47 286.91 L378.6 287.29 L377.74 287.67 L376.87 288.05 L376.01 288.43 L375.15 288.81 L374.29 289.19 L373.44 289.57 L372.58 289.95 L371.73 290.33 L370.88 290.71 L370.03 291.1 L369.19 291.48 L368.34 291.86 L367.5 292.25 L366.66 292.63 L365.82 293.02 L364.99 293.4 L364.15 293.79 L363.32 294.17 L362.49 294.56 L361.67 294.94 L360.84 295.33 L360.02 295.72 L359.2 296.1 L358.38 296.49 L357.56 296.88 L356.75 297.27 L355.94 297.66 L355.13 298.05 L354.32 298.43 L353.52 298.82 L352.71 299.21 L351.91 299.6 L351.12 299.99 L350.32 300.38 L349.53 300.77 L348.74 301.17 L347.95 301.56 L347.16 301.95 L346.38 302.34 L345.6 302.73 L344.82 303.12 L344.04 303.52 L343.27 303.91 L342.5 304.3 L341.73 304.69 L340.96 305.09 L340.2 305.48 L339.43 305.87 L338.67 306.27 L337.92 306.66 L337.16 307.06 L336.41 307.45 L335.66 307.85 L334.91 308.24 L334.17 308.63 L333.43 309.03 L332.69 309.42 L331.95 309.82 L331.22 310.22 L330.48 310.61 L329.76 311.01 L329.03 311.4 L328.3 311.8 L327.58 312.19 L326.86 312.59 L326.15 312.99 L325.43 313.38 L324.72 313.78 L324.01 314.17 L323.31 314.57 L322.6 314.97 L321.9 315.36 L321.2 315.76 L320.51 316.16 L319.81 316.55 L319.12 316.95 L318.43 317.35 L317.75 317.75 L317.07 318.14 L316.39 318.54 L315.71 318.94"/>
<path d="M1488.62 319.33 L1487.96 319.73 L1487.29 320.13 L1486.63 320.52 L1485.96 320.92 L1485.28 321.32 L1484.61 321.72 L1483.93 322.11 L1483.25 322.51 L1482.57 322.91 L1481.88 323.3 L1481.19 323.7 L1480.5 324.1 L1479.81 324.49 L1479.11 324.89 L1478.41 325.29 L1477.71 325.68 L1477.01 326.08 L1476.3 326.48 L1475.59 326.87 L1474.88 327.27 L1474.17 327.67 L1473.45 328.06 L1472.73 328.46 L1472.01 328.85 L1471.29 329.25 L1470.56 329.64 L1469.83 330.04 L1469.1 330.44 L1468.37 330.83 L1467.63 331.23 L1466.89 331.62 L1466.15 332.02 L1465.4 332.41 L1464.66 332.81 L1463.91 333.2 L1463.15 333.59 L1462.4 333.99 L1461.64 334.38 L1460.88 334.78 L1460.12 335.17 L1459.36 335.56 L1458.59 335.96 L1457.82 336.35 L1457.05 336.74 L1456.28 337.13 L1455.5 337.53 L1454.72 337.92 L1453.94 338.31 L1453.16 338.7 L1452.37 339.09 L1451.59 339.48 L1450.8 339.88 L1450 340.27 L1449.21 340.66 L1448.41 341.05 L1447.61 341.44 L1446.81 341.83 L1446.01 342.22 L1445.2 342.6 L1444.39 342.99 L1443.58 343.38 L1442.77 343.77 L1441.95 344.16 L1441.14 344.55 L1440.32 344.93 L1439.49 345.32 L1438.67 345.71 L1437.84 346.09 L1437.02 346.48 L1436.18 346.86 L1435.35 347.25 L1434.52 347.63 L1433.68 348.02 L1432.84 348.4 L1432 348.79 L1431.16 349.17 L1430.31 349.55 L1429.47 349.94 L1428.62 350.32 L1427.77 350.7 L1426.91 351.08 L1426.06 351.46 L1425.2 351.84 L1424.34 352.22 L1423.48 352.6 L1422.62 352.98 L1421.75 353.36 L1420.88 353.74 L1420.02 354.12 L1419.14 354.49 L1418.27 354.87 L1417.4 355.25 L1416.52 355.62 L1415.64 356 L1414.76 356.38 L1413.88 356.75 L1413 357.12 L1412.11 357.5 L1411.23 357.87 L1410.34 358.24 L1409.45 358.62 L1408.55 358.99 L1407.66 359.36 L1406.76 359.73 L1405.87 360.1 L1404.97 360.47 L1404.07 360.84 L1403.16 361.21 L1402.26 361.58 L1401.36 361.94 L1400.45 362.31 L1399.54 362.68 L1398.63 363.04 L1397.72 363.41 L1396.8 363.77 L1395.89 364.14 L1394.97 364.5 L1394.06 364.86 L1393.14 365.22 L1392.22 365.58 L1391.29 365.95 L1390.37 366.31 L1389.45 366.67 L1388.52 367.02 L1387.59 367.38 L1386.66 367.74 L1385.73 368.1 L1384.8 368.45 L1383.87 368.81 L1382.93 369.16 L1382 369.52 L1381.06 369.87 L1380.12 370.22 L1379.18 370.58 L1378.24 370.93 L1377.3 371.28 L1376.36 371.63 L1375.42 371.98 L1374.47 372.33 L1373.53 372.67 L1372.58 373.02 L1371.63 373.37 L1370.68 373.71 L1369.73 374.06 L1368.78 374.4 L1367.83 374.75 L1366.87 375.09 L1365.92 375.43 L1364.96 375.77 L1364.01 376.11 L1363.05 376.45 L1362.09 376.79 L1361.13 377.13 L1360.17 377.46 L1359.21 377.8 L1358.25 378.14 L1357.29 378.47 L1356.33 378.8 L1355.36 379.14 L1354.4 379.47 L1353.43 379.8 L1352.47 380.13 L1351.5 380.46 L1350.53 380.79 L1349.57 381.11"/>
<path d="M456 257.8 L456.21 256.85 L456.44 255.89 L456.67 254.94 L456.92 253.99 L457.17 253.04 L457.44 252.09 L457.72 251.14 L458.01 250.19 L458.31 249.24 L458.62 248.29 L458.94 247.35 L459.28 246.4 L459.62 245.45 L459.97 244.51 L460.34 243.57 L460.71 242.62 L461.09 241.68 L461.49 240.74 L461.89 239.8 L462.31 238.86 L462.73 237.92 L463.17 236.99 L463.62 236.05 L464.07 235.11 L464.54 234.18 L465.01 233.25 L465.49 232.31 L465.99 231.38 L466.49 230.45 L467 229.52 L467.53 228.6 L468.06 227.67 L468.6 226.74 L469.15 225.82 L469.71 224.9 L470.28 223.97 L470.85 223.05 L471.44 222.13 L472.04 221.21 L472.64 220.3 L473.25 219.38 L473.87 218.47 L474.5 217.55 L475.14 216.64 L475.78 215.73 L476.43 214.82 L477.1 213.92 L477.76 213.01 L478.44 212.1 L479.13 211.2 L479.82 210.3 L480.52 209.4 L481.22 208.5 L481.94 207.61 L482.66 206.71 L483.39 205.82 L484.12 204.93 L484.86 204.04 L485.61 203.15 L486.37 202.26 L487.13 201.38 L487.89 200.5 L488.67 199.61 L489.45 198.74 L490.23 197.86 L491.02 196.98 L491.82 196.11 L492.62 195.24 L493.43 194.37 L494.24 193.51 L495.06 192.64 L495.88 191.78 L496.7 190.92 L497.53 190.06 L498.37 189.21 L499.21 188.36 L500.05 187.51 L500.9 186.66 L501.75 185.81 L502.6 184.97 L503.46 184.13 L504.32 183.29 L505.18 182.46 L506.05 181.63 L506.91 180.8 L507.78 179.97 L508.66 179.15 L509.53 178.32 L510.41 177.51 L511.28 176.69 L512.16 175.88 L513.04 175.07 L513.92 174.27 L514.8 173.46 L515.68 172.66 L516.56 171.87 L517.44 171.08 L518.32 170.29 L519.2 169.5 L520.08 168.72 L520.96 167.94 L521.84 167.17 L522.71 166.4 L523.58 165.63 L524.45 164.87 L525.32 164.11 L526.19 163.35 L527.05 162.6 L527.91 161.86 L528.76 161.11 L529.61 160.38 L530.46 159.64 L531.3 158.91 L532.14 158.19 L532.97 157.47 L533.79 156.75 L534.61 156.04 L535.43 155.34 L536.23 154.64 L537.03 153.94 L537.83 153.25 L538.61 152.56 L539.39 151.88 L540.16 151.21"/>
<path d="M1262.27 150.54 L1259.73 149.88 L1257.19 149.22 L1254.67 148.57 L1252.15 147.92 L1249.65 147.28 L1247.16 146.64 L1244.68 146.02 L1242.21 145.39 L1239.75 144.78 L1237.3 144.17 L1234.87 143.57 L1232.45 142.97 L1230.04 142.38 L1227.65 141.8 L1225.27 141.22 L1222.91 140.65 L1220.56 140.09 L1218.22 139.54 L1215.9 138.99 L1213.6 138.45 L1211.31 137.92 L1209.04 137.39 L1206.78 136.88 L1204.55 136.37 L1202.33 135.87 L1200.12 135.38 L1197.94 134.89 L1195.77 134.42 L1193.63 133.95 L1191.5 133.49 L1189.39 133.04 L1187.3 132.6 L1185.23 132.17 L1183.18 131.75 L1181.16 131.34 L1179.15 130.93 L1177.16 130.54 L1175.2 130.15 L1173.25 129.78 L1171.33 129.41 L1169.43 129.05 L1167.56 128.71 L1165.7 128.37 L1163.87 128.05 L1162.06 127.73 L1160.28 127.42 L1158.52 127.13 L1156.78 126.84 L1155.06 126.57 L1153.37 126.31 L1151.71 126.05 L1150.07 125.81 L1148.45 125.58 L1146.86 125.36 L1145.29 125.15 L1143.75 124.96 L1142.23 124.77 L1140.73 124.6 L1139.27 124.43 L1137.82 124.28 L1136.4 124.14 L1135.01 124.01 L1133.64 123.89 L1132.3 123.79 L1130.98 123.69 L1129.69 123.61 L1128.42 123.54 L1127.18 123.48 L1125.96 123.44 L1124.77 123.4 L1123.6 123.38 L1122.46 123.37 L1121.34 123.37 L1120.24 123.38 L1119.17 123.4 L1118.12 123.44 L1117.1 123.48 L1116.1 123.54 L1115.13 123.61 L1114.18 123.7 L1113.25 123.79 L1112.34 123.9 L1111.46 124.01 L1110.6 124.14 L1109.76 124.28 L1108.95 124.44 L1108.15 124.6 L1107.38 124.77 L1106.63 124.96 L1105.9 125.16 L1105.19 125.37 L1104.5 125.59 L1103.83 125.82 L1103.18 126.06 L1102.55 126.31 L1101.95 126.57 L1101.35 126.85 L1100.78 127.13 L1100.23 127.43 L1099.69 127.73 L1099.17 128.05 L1098.67 128.37 L1098.19 128.71 L1097.72 129.06 L1097.27 129.41 L1096.84 129.78 L1096.42 130.16 L1096.01 130.54 L1095.63 130.94 L1095.25 131.34 L1094.89 131.75 L1094.55 132.18 L1094.22 132.61 L1093.9 133.05 L1093.59 133.5 L1093.3 133.96 L1093.02 134.42 L1092.75 134.9 L1092.5 135.38 L1092.25 135.88 L1092.02 136.38 L1091.8 136.88 L1091.59 137.4 L1091.39 137.92 L1091.2 138.46 L1091.01 139 L1090.84 139.54 L1090.68 140.1 L1090.53 140.66 L1090.38 141.23 L1090.25 141.8 L1090.12 142.39 L1090 142.98 L1089.88 143.57 L1089.78 144.17 L1089.68 144.78 L1089.59 145.4 L1089.5 146.02 L1089.42 146.65 L1089.35 147.29 L1089.28 147.93 L1089.22 148.57 L1089.17 149.23 L1089.12 149.88 L1089.07 150.55 L1089.03 151.22 L1088.99 151.89 L1088.96 152.57 L1088.93 153.26 L1088.91 153.95 L1088.89 154.64 L1088.87 155.34 L1088.86 156.05 L1088.85 156.76 L1088.84 157.48 L1088.84 158.2 L1088.83 158.92 L1088.83 159.65 L1088.84 160.38 L1088.84 161.12 L1088.85 161.86 L1088.86 162.61 L1088.87 163.36 L1088.88 164.12 L1088.9 164.88 L1088.91 165.64 L1088.93 166.41 L1088.94 167.18 L1088.96 167.95 L1088.98 168.73 L1089 169.51 L1089.02 170.3 L1089.04 171.08 L1089.06 171.88 L1089.08 172.67 L1089.1 173.47 L1089.12 174.27 L1089.14 175.08 L1089.16 175.89 L1089.18 176.7 L1089.19 177.52 L1089.21 178.33 L1089.23 179.15 L1089.24 179.98 L1089.26 180.8 L1089.27 181.63 L1089.29 182.47 L1089.3 183.3 L1089.31 184.14 L1089.32 184.98 L1089.32 185.82 L1089.33 186.67 L1089.33 187.51 L1089.34 188.36 L1089.34 189.22 L1089.33 190.07 L1089.33 190.93 L1089.33 191.79 L1089.32 192.65 L1089.31 193.52 L1089.3 194.38 L1089.28 195.25 L1089.26 196.12 L1089.25 196.99 L1089.22 197.87 L1089.2 198.75 L1089.17 199.62 L1089.14 200.5 L1089.11 201.39 L1089.08 202.27 L1089.04 203.16 L1089 204.05 L1088.95 204.94 L1088.91 205.83 L1088.86 206.72 L1088.8 207.62 L1088.75 208.51 L1088.69 209.41 L1088.62 210.31 L1088.56 211.21 L1088.49 212.11 L1088.42 213.02 L1088.34 213.92 L1088.26 214.83 L1088.18 215.74 L1088.09 216.65 L1088 217.56 L1087.91 218.48 L1087.81 219.39 L1087.71 220.31 L1087.6 221.22 L1087.5 222.14 L1087.38 223.06 L1087.27 223.98 L1087.15 224.91 L1087.03 225.83 L1086.9 226.75 L1086.77 227.68 L1086.63 228.61 L1086.49 229.53 L1086.35 230.46 L1086.2 231.39 L1086.05 232.32 L1085.9 233.26 L1085.74 234.19 L1085.57 235.12 L1085.4 236.06 L1085.23 237 L1085.06 237.93 L1084.88 238.87 L1084.69 239.81 L1084.5 240.75 L1084.31 241.69 L1084.12 242.63 L1083.91 243.58 L1083.71 244.52 L1083.5 245.46 L1083.29 246.41 L1083.07 247.36 L1082.84 248.3 L1082.62 249.25 L1082.39 250.2 L1082.15 251.15 L1081.91 252.1 L1081.67 253.05 L1081.42 254 L1081.16 254.95 L1080.91 255.9 L1080.64 256.86 L1080.38 257.81 L1080.11 258.76 L1079.83 259.72 L1079.55 260.68 L1079.27 261.63"/>
<path d="M618.9 264.4 L617.97 263.87 L617.05 263.34 L616.12 262.82 L615.2 262.29 L614.27 261.77 L613.35 261.26 L612.43 260.74 L611.51 260.23 L610.59 259.72 L609.67 259.21 L608.75 258.7 L607.84 258.2 L606.92 257.7 L606.01 257.2 L605.09 256.71 L604.18 256.22 L603.26 255.73 L602.35 255.24 L601.44 254.76 L600.52 254.27 L599.61 253.8 L598.7 253.32 L597.79 252.85 L596.87 252.38 L595.96 251.91 L595.05 251.45 L594.14 250.99 L593.23 250.53 L592.32 250.07 L591.4 249.62 L590.49 249.17 L589.58 248.73 L588.67 248.29 L587.75 247.85 L586.84 247.41 L585.92 246.98 L585.01 246.55 L584.09 246.13 L583.18 245.7 L582.26 245.28 L581.34 244.87 L580.42 244.46 L579.5 244.05 L578.58 243.64 L577.66 243.24 L576.73 242.84 L575.81 242.45 L574.88 242.06 L573.95 241.67 L573.02 241.28 L572.09 240.9 L571.16 240.53 L570.23 240.15 L569.29 239.78 L568.35 239.42 L567.42 239.06 L566.47 238.7 L565.53 238.35 L564.59 238 L563.64 237.65 L562.69 237.31 L561.74 236.97 L560.78 236.63 L559.83 236.3 L558.87 235.98 L557.9 235.66 L556.94 235.34 L555.97 235.02 L555 234.71 L554.03 234.41 L553.05 234.11 L552.07 233.81 L551.09 233.52 L550.11 233.23 L549.12 232.94 L548.13 232.66 L547.13 232.39 L546.13 232.11 L545.13 231.85 L544.13 231.58 L543.12 231.33 L542.1 231.07 L541.09 230.82 L540.07 230.58 L539.04 230.34 L538.02 230.1 L536.98 229.87 L535.95 229.64 L534.91 229.42 L533.86 229.2 L532.81 228.99 L531.76 228.78 L530.7 228.57 L529.64 228.37 L528.57 228.18 L527.5 227.99 L526.42 227.8 L525.34 227.62 L524.25 227.45 L523.16 227.28 L522.07 227.11 L520.97 226.95 L519.86 226.79 L518.75 226.64 L517.63 226.49 L516.51 226.35 L515.38 226.21 L514.25 226.08 L513.11 225.95 L511.97 225.83 L510.82 225.71 L509.67 225.6 L508.51 225.49 L507.34 225.39 L506.17 225.29 L504.99 225.19 L503.81 225.11 L502.62 225.02 L501.43 224.94 L500.23 224.87 L499.02 224.8 L497.81 224.74 L496.59 224.68 L495.37 224.63 L494.14 224.58 L492.9 224.53 L491.66 224.49 L490.41 224.46 L489.15 224.43 L487.89 224.41 L486.62 224.39 L485.35 224.38 L484.07 224.37 L482.78 224.37 L481.49 224.37 L480.19 224.37 L478.88 224.39 L477.57 224.4 L476.25 224.43 L474.93 224.45 L473.6 224.48 L472.26 224.52 L470.91 224.56 L469.56 224.61 L468.2 224.66 L466.84 224.72 L465.47 224.78 L464.09 224.85 L462.71 224.92 L461.32 225 L459.92 225.08 L458.52 225.17 L457.11 225.26 L455.69 225.35 L454.27 225.46 L452.84 225.56 L451.41 225.67 L449.96 225.79 L448.52 225.91 L447.06 226.04 L445.6 226.17 L444.13 226.31 L442.66 226.45 L441.18 226.59 L439.69 226.74 L438.2 226.9 L436.7 227.06 L435.2 227.22 L433.69 227.39 L432.17 227.57 L430.65 227.75 L429.12 227.93 L427.58 228.12 L426.04 228.31 L424.5 228.51 L422.94 228.71 L421.39 228.92 L419.82 229.13 L418.25 229.35 L416.68 229.57 L415.1 229.8 L413.51 230.03 L411.92 230.26 L410.32 230.5 L408.72 230.74 L407.11 230.99 L405.5 231.25 L403.88 231.5 L402.26 231.76 L400.63 232.03 L398.99 232.3 L397.36 232.57 L395.71 232.85 L394.07 233.14 L392.41 233.42 L390.76 233.72 L389.09 234.01 L387.43 234.31 L385.76 234.62 L384.08 234.93 L382.4 235.24 L380.72 235.56 L379.03 235.88 L377.34 236.2 L375.65 236.53 L373.95 236.86"/>
<path d="M1431.6 237.2 L1430.82 237.54 L1430.04 237.89 L1429.26 238.24 L1428.48 238.59 L1427.71 238.94 L1426.94 239.3 L1426.17 239.67 L1425.41 240.04 L1424.65 240.41 L1423.89 240.78 L1423.14 241.16 L1422.38 241.55 L1421.63 241.93 L1420.88 242.32 L1420.14 242.72 L1419.39 243.11 L1418.65 243.51 L1417.91 243.92 L1417.17 244.33 L1416.43 244.74 L1415.7 245.15 L1414.96 245.57 L1414.23 245.99 L1413.5 246.42 L1412.77 246.84 L1412.04 247.28 L1411.31 247.71 L1410.58 248.15 L1409.86 248.59 L1409.13 249.03 L1408.41 249.48 L1407.68 249.93 L1406.96 250.39 L1406.23 250.84 L1405.51 251.3 L1404.78 251.77 L1404.06 252.23 L1403.33 252.7 L1402.61 253.17 L1401.88 253.65 L1401.16 254.12 L1400.43 254.6 L1399.7 255.09 L1398.98 255.57 L1398.25 256.06 L1397.52 256.55 L1396.79 257.05 L1396.06 257.54 L1395.33 258.04 L1394.6 258.54 L1393.86 259.05 L1393.13 259.56 L1392.39 260.07 L1391.65 260.58 L1390.91 261.09 L1390.17 261.61 L1389.43 262.13 L1388.68 262.65 L1387.94 263.18 L1387.19 263.7 L1386.44 264.23 L1385.69 264.76 L1384.93 265.3 L1384.17 265.83 L1383.42 266.37 L1382.65 266.91 L1381.89 267.45 L1381.12 268 L1380.36 268.55 L1379.58 269.09 L1378.81 269.65 L1378.03 270.2 L1377.25 270.75 L1376.47 271.31 L1375.69 271.87 L1374.9 272.43 L1374.11 272.99 L1373.31 273.56 L1372.51 274.12 L1371.71 274.69 L1370.91 275.26 L1370.1 275.83 L1369.29 276.41 L1368.48 276.98 L1367.66 277.56 L1366.84 278.14 L1366.01 278.72 L1365.19 279.3 L1364.35 279.88 L1363.52 280.47 L1362.68 281.05 L1361.84 281.64 L1360.99 282.23 L1360.14 282.82 L1359.29 283.41 L1358.43 284.01 L1357.57 284.6 L1356.7 285.2 L1355.83 285.8 L1354.95 286.4 L1354.08 287 L1353.19 287.6 L1352.31 288.2 L1351.42 288.81 L1350.52 289.41 L1349.62 290.02 L1348.72 290.62 L1347.81 291.23 L1346.9 291.84 L1345.98 292.45 L1345.06 293.07 L1344.13 293.68 L1343.2 294.29 L1342.27 294.91 L1341.33 295.52 L1340.39 296.14 L1339.44 296.76 L1338.49 297.38 L1337.53 298 L1336.57 298.62 L1335.6 299.24 L1334.63 299.86 L1333.66 300.48 L1332.68 301.1 L1331.69 301.73 L1330.7 302.35 L1329.71 302.98 L1328.71 303.6 L1327.71 304.23 L1326.7 304.86 L1325.69 305.48 L1324.67 306.11 L1323.65 306.74 L1322.62 307.37 L1321.59 308 L1320.56 308.63 L1319.52 309.26 L1318.47 309.89 L1317.42 310.52 L1316.37 311.16 L1315.31 311.79 L1314.24 312.42 L1313.17 313.05 L1312.1 313.69 L1311.02 314.32 L1309.94 314.95 L1308.85 315.59 L1307.76 316.22 L1306.66 316.85 L1305.56 317.49 L1304.46 318.12 L1303.34 318.75 L1302.23 319.39 L1301.11 320.02 L1299.98 320.66 L1298.85 321.29 L1297.72 321.93 L1296.58 322.56 L1295.44 323.19 L1294.29 323.83 L1293.14 324.46 L1291.98 325.1 L1290.82 325.73 L1289.66 326.36 L1288.49 327 L1287.31 327.63 L1286.13 328.26 L1284.95 328.89 L1283.76 329.53 L1282.57 330.16 L1281.38 330.79 L1280.18 331.42 L1278.97 332.05 L1277.76 332.68 L1276.55 333.31 L1275.33 333.94 L1274.11 334.57 L1272.89 335.2 L1271.66 335.82 L1270.42 336.45 L1269.19 337.08 L1267.94 337.7 L1266.7 338.33 L1265.45 338.95 L1264.19 339.58 L1262.94 340.2 L1261.68 340.82 L1260.41 341.44 L1259.14 342.06 L1257.87 342.68 L1256.59 343.3 L1255.31 343.92"/>
<path d="M584 286.2 L582.95 286.04 L581.9 285.88 L580.85 285.72 L579.8 285.57 L578.75 285.41 L577.7 285.26 L576.65 285.1 L575.6 284.95 L574.55 284.8 L573.5 284.65 L572.45 284.51 L571.4 284.36 L570.35 284.21 L569.3 284.07 L568.25 283.93 L567.19 283.79 L566.14 283.65 L565.09 283.51 L564.04 283.37 L562.98 283.23 L561.93 283.1 L560.88 282.96 L559.82 282.83 L558.77 282.7 L557.71 282.57 L556.66 282.44 L555.6 282.32 L554.55 282.19 L553.49 282.07 L552.43 281.94 L551.38 281.82 L550.32 281.7 L549.26 281.58 L548.2 281.46 L547.14 281.35 L546.09 281.23 L545.03 281.12 L543.97 281.01 L542.91 280.9 L541.85 280.79 L540.78 280.68 L539.72 280.57 L538.66 280.47 L537.6 280.37 L536.53 280.26 L535.47 280.16 L534.41 280.06 L533.34 279.97 L532.28 279.87 L531.21 279.77 L530.15 279.68 L529.08 279.59 L528.01 279.5 L526.94 279.41 L525.88 279.32 L524.81 279.24 L523.74 279.15 L522.67 279.07 L521.6 278.99 L520.52 278.91 L519.45 278.83 L518.38 278.75 L517.31 278.67 L516.23 278.6 L515.16 278.53 L514.08 278.45 L513.01 278.39 L511.93 278.32 L510.85 278.25 L509.78 278.18 L508.7 278.12 L507.62 278.06 L506.54 278 L505.46 277.94 L504.38 277.88 L503.29 277.82 L502.21 277.77 L501.13 277.72 L500.04 277.66 L498.96 277.61 L497.87 277.57 L496.79 277.52 L495.7 277.47 L494.61 277.43 L493.52 277.39 L492.43 277.35 L491.34 277.31 L490.25 277.27 L489.16 277.23 L488.07 277.2 L486.97 277.17 L485.88 277.13 L484.78 277.1 L483.69 277.08 L482.59 277.05 L481.49 277.02 L480.4 277 L479.3 276.98 L478.2 276.96 L477.1 276.94 L476 276.92 L474.89 276.9 L473.79 276.89 L472.69 276.88 L471.58 276.86 L470.47 276.86 L469.37 276.85 L468.26 276.84 L467.15 276.84 L466.04 276.83 L464.93 276.83 L463.82 276.83 L462.71 276.83 L461.6 276.83 L460.48 276.84 L459.37 276.84 L458.25 276.85 L457.14 276.86 L456.02 276.87 L454.9 276.88 L453.78 276.9 L452.66 276.91 L451.54 276.93 L450.42 276.95 L449.3 276.97 L448.18 276.99 L447.05 277.01 L445.93 277.04 L444.8 277.06 L443.67 277.09 L442.55 277.12 L441.42 277.15 L440.29 277.18 L439.16 277.22 L438.03 277.25 L436.89 277.29 L435.76 277.33 L434.63 277.37 L433.49 277.41 L432.36 277.45 L431.22 277.5 L430.08 277.55 L428.94 277.59 L427.8 277.64 L426.66 277.69 L425.52 277.75 L424.38 277.8 L423.24 277.86 L422.09 277.91 L420.95 277.97 L419.8 278.03 L418.66 278.09 L417.51 278.16 L416.36 278.22 L415.22 278.29 L414.07 278.36 L412.92 278.43 L411.76 278.5 L410.61 278.57 L409.46 278.64 L408.31 278.72 L407.15 278.79 L406 278.87 L404.84 278.95 L403.68 279.03 L402.53 279.12 L401.37 279.2 L400.21 279.28 L399.05 279.37 L397.89 279.46 L396.73 279.55 L395.56 279.64 L394.4 279.73 L393.24 279.83 L392.07 279.92 L390.91 280.02 L389.74 280.12 L388.57 280.22 L387.41 280.32 L386.24 280.42 L385.07 280.53 L383.9 280.63 L382.73 280.74 L381.56 280.85 L380.39 280.96 L379.22 281.07 L378.04 281.18 L376.87 281.3 L375.7 281.41 L374.52 281.53 L373.35 281.65 L372.17 281.77 L370.99 281.89 L369.82 282.01 L368.64 282.14 L367.46 282.26 L366.28 282.39 L365.1 282.52 L363.92 282.65 L362.74 282.78 L361.56 282.91 L360.38 283.04 L359.2 283.17 L358.02 283.31 L356.83 283.45 L355.65 283.59 L354.47 283.73 L353.28 283.87 L352.1 284.01 L350.91 284.15 L349.73 284.3 L348.54 284.44 L347.36 284.59 L346.17 284.74 L344.98 284.89 L343.8 285.04 L342.61 285.19 L341.42 285.35 L340.23 285.5 L339.04 285.66 L337.86 285.81 L336.67 285.97 L335.48 286.13 L334.29 286.29 L333.1 286.45 L331.91 286.62 L330.72 286.78 L329.53 286.95 L328.34 287.11 L327.14 287.28 L325.95 287.45 L324.76 287.62"/>
<path d="M1479.44 287.79 L1478.44 287.97 L1477.43 288.14 L1476.43 288.31 L1475.43 288.49 L1474.42 288.67 L1473.42 288.84 L1472.41 289.02 L1471.41 289.2 L1470.41 289.38 L1469.4 289.57 L1468.4 289.75 L1467.4 289.94 L1466.39 290.12 L1465.39 290.31 L1464.38 290.49 L1463.38 290.68 L1462.38 290.87 L1461.37 291.06 L1460.37 291.26 L1459.36 291.45 L1458.36 291.64 L1457.35 291.84 L1456.35 292.03 L1455.34 292.23 L1454.34 292.43 L1453.33 292.63 L1452.33 292.82 L1451.32 293.03 L1450.31 293.23 L1449.31 293.43 L1448.3 293.63 L1447.3 293.84 L1446.29 294.04 L1445.28 294.25 L1444.27 294.45 L1443.26 294.66 L1442.26 294.87 L1441.25 295.08 L1440.24 295.29 L1439.23 295.5 L1438.22 295.71 L1437.21 295.93 L1436.2 296.14 L1435.19 296.36 L1434.18 296.57 L1433.17 296.79 L1432.15 297.01 L1431.14 297.22 L1430.13 297.44 L1429.11 297.66 L1428.1 297.88 L1427.09 298.1 L1426.07 298.32 L1425.06 298.55 L1424.04 298.77 L1423.02 298.99 L1422.01 299.22 L1420.99 299.44 L1419.97 299.67 L1418.95 299.9 L1417.93 300.12 L1416.91 300.35 L1415.89 300.58 L1414.87 300.81 L1413.85 301.04 L1412.83 301.27 L1411.81 301.5 L1410.78 301.74 L1409.76 301.97 L1408.74 302.2 L1407.71 302.44 L1406.69 302.67 L1405.66 302.91 L1404.63 303.14 L1403.6 303.38 L1402.58 303.62 L1401.55 303.85 L1400.52 304.09 L1399.49 304.33 L1398.46 304.57 L1397.42 304.81 L1396.39 305.05 L1395.36 305.29 L1394.33 305.53 L1393.29 305.77 L1392.26 306.02 L1391.22 306.26 L1390.18 306.5 L1389.15 306.75 L1388.11 306.99 L1387.07 307.23 L1386.03 307.48 L1384.99 307.72 L1383.95 307.97 L1382.9 308.22 L1381.86 308.46 L1380.82 308.71 L1379.77 308.96 L1378.73 309.21 L1377.68 309.45 L1376.64 309.7 L1375.59 309.95 L1374.54 310.2 L1373.49 310.45 L1372.44 310.7 L1371.39 310.95 L1370.34 311.2 L1369.29 311.45 L1368.23 311.7 L1367.18 311.96 L1366.13 312.21 L1365.07 312.46 L1364.01 312.71 L1362.96 312.96 L1361.9 313.22 L1360.84 313.47 L1359.78 313.72 L1358.72 313.98 L1357.66 314.23 L1356.6 314.48 L1355.53 314.74 L1354.47 314.99 L1353.41 315.25 L1352.34 315.5 L1351.27 315.76 L1350.21 316.01 L1349.14 316.27 L1348.07 316.52 L1347 316.78 L1345.93 317.03 L1344.86 317.29 L1343.79 317.55 L1342.71 317.8 L1341.64 318.06 L1340.57 318.31 L1339.49 318.57 L1338.41 318.82 L1337.34 319.08 L1336.26 319.34 L1335.18 319.59 L1334.1 319.85 L1333.02 320.11 L1331.94 320.36 L1330.86 320.62 L1329.78 320.87 L1328.69 321.13 L1327.61 321.39 L1326.52 321.64 L1325.44 321.9 L1324.35 322.16 L1323.26 322.41 L1322.18 322.67 L1321.09 322.92 L1320 323.18 L1318.91 323.44 L1317.82 323.69 L1316.72 323.95 L1315.63 324.2 L1314.54 324.46 L1313.44 324.71 L1312.35 324.97 L1311.25 325.22 L1310.15 325.48 L1309.06 325.73 L1307.96 325.98 L1306.86 326.24"/>
<path d="M487.8 305.8 L486.75 305.57 L485.69 305.33 L484.64 305.1 L483.59 304.86 L482.54 304.63 L481.49 304.4 L480.44 304.17 L479.39 303.93 L478.34 303.7 L477.29 303.47 L476.24 303.24 L475.19 303.02 L474.15 302.79 L473.1 302.56 L472.06 302.33 L471.01 302.11 L469.96 301.88 L468.92 301.65 L467.88 301.43 L466.83 301.21 L465.79 300.98 L464.75 300.76 L463.7 300.54 L462.66 300.32 L461.62 300.1 L460.58 299.88 L459.54 299.66 L458.5 299.44 L457.46 299.22 L456.42 299 L455.38 298.79 L454.34 298.57 L453.31 298.36 L452.27 298.14 L451.23 297.93 L450.19 297.72 L449.16 297.51 L448.12 297.3 L447.09 297.09 L446.05 296.88 L445.02 296.67 L443.98 296.46 L442.95 296.25 L441.91 296.05 L440.88 295.84 L439.84 295.64 L438.81 295.43 L437.78 295.23 L436.74 295.03 L435.71 294.83 L434.68 294.63 L433.65 294.43 L432.61 294.23 L431.58 294.04 L430.55 293.84 L429.52 293.64 L428.49 293.45 L427.46 293.26 L426.43 293.06 L425.39 292.87 L424.36 292.68 L423.33 292.49 L422.3 292.3 L421.27 292.12 L420.24 291.93 L419.21 291.74 L418.18 291.56 L417.15 291.38 L416.12 291.19 L415.09 291.01 L414.06 290.83 L413.03 290.65 L412 290.47 L410.97 290.3 L409.94 290.12 L408.91 289.94 L407.88 289.77 L406.85 289.6 L405.82 289.42 L404.79 289.25 L403.76 289.08 L402.73 288.92 L401.7 288.75 L400.67 288.58 L399.64 288.42 L398.61 288.25 L397.58 288.09 L396.55 287.93 L395.52 287.77 L394.48 287.61 L393.45 287.45 L392.42 287.29 L391.39 287.13 L390.36 286.98 L389.32 286.83 L388.29 286.67 L387.26 286.52 L386.23 286.37 L385.19 286.22 L384.16 286.07 L383.12 285.93 L382.09 285.78 L381.05 285.64 L380.02 285.5 L378.98 285.35 L377.95 285.21 L376.91 285.07 L375.87 284.94 L374.84 284.8 L373.8 284.66 L372.76 284.53 L371.72 284.4 L370.69 284.27 L369.65 284.14 L368.61 284.01 L367.57 283.88 L366.53 283.75 L365.48 283.63 L364.44 283.51 L363.4 283.38 L362.36 283.26 L361.31 283.14 L360.27 283.02 L359.23 282.91 L358.18 282.79 L357.14 282.68 L356.09 282.56 L355.04 282.45 L354 282.34 L352.95 282.23 L351.9 282.13 L350.85 282.02 L349.8 281.92 L348.75 281.81 L347.7 281.71 L346.65 281.61 L345.59 281.51 L344.54 281.41 L343.48 281.32 L342.43 281.22 L341.37 281.13 L340.32 281.04 L339.26 280.95 L338.2 280.86 L337.14 280.77 L336.08 280.68 L335.02 280.6 L333.96 280.51 L332.9 280.43 L331.84 280.35 L330.77 280.27 L329.71 280.19"/>
<path d="M1475.19 280.12 L1474.02 280.04 L1472.86 279.97 L1471.69 279.9 L1470.53 279.83 L1469.36 279.76 L1468.2 279.69 L1467.04 279.63 L1465.88 279.56 L1464.72 279.5 L1463.56 279.44 L1462.4 279.38 L1461.25 279.32 L1460.09 279.26 L1458.93 279.21 L1457.78 279.15 L1456.63 279.1 L1455.48 279.05 L1454.32 279 L1453.17 278.95 L1452.02 278.9 L1450.88 278.86 L1449.73 278.82 L1448.58 278.77 L1447.44 278.73 L1446.29 278.69 L1445.15 278.66 L1444.01 278.62 L1442.87 278.59 L1441.73 278.55 L1440.59 278.52 L1439.45 278.49 L1438.31 278.46 L1437.17 278.44 L1436.04 278.41 L1434.9 278.39 L1433.77 278.37 L1432.64 278.35 L1431.51 278.33 L1430.37 278.31 L1429.25 278.29 L1428.12 278.28 L1426.99 278.26 L1425.86 278.25 L1424.74 278.24 L1423.61 278.23 L1422.49 278.23 L1421.37 278.22 L1420.24 278.22 L1419.12 278.22 L1418 278.22 L1416.88 278.22 L1415.77 278.22 L1414.65 278.22 L1413.53 278.23 L1412.42 278.24 L1411.3 278.24 L1410.19 278.25 L1409.08 278.27 L1407.97 278.28 L1406.86 278.29 L1405.75 278.31 L1404.64 278.33 L1403.53 278.35 L1402.43 278.37 L1401.32 278.39 L1400.22 278.41 L1399.11 278.44 L1398.01 278.47 L1396.91 278.49 L1395.81 278.52 L1394.71 278.56 L1393.61 278.59 L1392.51 278.62 L1391.41 278.66 L1390.32 278.7 L1389.22 278.74 L1388.13 278.78 L1387.03 278.82 L1385.94 278.86 L1384.85 278.91 L1383.76 278.95 L1382.67 279 L1381.58 279.05 L1380.49 279.1 L1379.4 279.16 L1378.31 279.21 L1377.23 279.27 L1376.14 279.32 L1375.06 279.38 L1373.97 279.44 L1372.89 279.5 L1371.81 279.57 L1370.72 279.63 L1369.64 279.7 L1368.56 279.76 L1367.48 279.83 L1366.41 279.9 L1365.33 279.98 L1364.25 280.05 L1363.17 280.12 L1362.1 280.2 L1361.02 280.28 L1359.95 280.36 L1358.88 280.44 L1357.8 280.52 L1356.73 280.6 L1355.66 280.69 L1354.59 280.78 L1353.52 280.86 L1352.45 280.95 L1351.38 281.04 L1350.31 281.14 L1349.24 281.23 L1348.18 281.32 L1347.11 281.42 L1346.04 281.52 L1344.98 281.62 L1343.91 281.72 L1342.85 281.82 L1341.79 281.92 L1340.72 282.03 L1339.66 282.13 L1338.6 282.24 L1337.54 282.35 L1336.48 282.46 L1335.41 282.57 L1334.35 282.69 L1333.29 282.8 L1332.24 282.92 L1331.18 283.03 L1330.12 283.15 L1329.06 283.27 L1328 283.39 L1326.95 283.52 L1325.89 283.64 L1324.83 283.76 L1323.78 283.89 L1322.72 284.02 L1321.67 284.15 L1320.61 284.28 L1319.56 284.41 L1318.51 284.54 L1317.45 284.68 L1316.4 284.81 L1315.35 284.95 L1314.29 285.09 L1313.24 285.22 L1312.19 285.37 L1311.14 285.51 L1310.09 285.65 L1309.03 285.79 L1307.98 285.94 L1306.93 286.09 L1305.88 286.23 L1304.83 286.38 L1303.78 286.53 L1302.73 286.68 L1301.68 286.84 L1300.63 286.99 L1299.59 287.15 L1298.54 287.3 L1297.49 287.46 L1296.44 287.62 L1295.39 287.78 L1294.34 287.94 L1293.29 288.1 L1292.25 288.26 L1291.2 288.43 L1290.15 288.59 L1289.1 288.76 L1288.05 288.93 L1287.01 289.1 L1285.96 289.27 L1284.91 289.44 L1283.86 289.61 L1282.82 289.78 L1281.77 289.96 L1280.72 290.13 L1279.67 290.31 L1278.63 290.49 L1277.58 290.67 L1276.53 290.85 L1275.48 291.03 L1274.44 291.21 L1273.39 291.39 L1272.34 291.57 L1271.29 291.76 L1270.25 291.94 L1269.2 292.13 L1268.15 292.32 L1267.1 292.51 L1266.06 292.7 L1265.01 292.89 L1263.96 293.08 L1262.91 293.27 L1261.86 293.47 L1260.82 293.66 L1259.77 293.86 L1258.72 294.05 L1257.67 294.25 L1256.62 294.45 L1255.57 294.65 L1254.52 294.85 L1253.47 295.05 L1252.42 295.25 L1251.37 295.45 L1250.32 295.65 L1249.27 295.86 L1248.22 296.06 L1247.17 296.27 L1246.12 296.48 L1245.07 296.68 L1244.02 296.89 L1242.97 297.1 L1241.91 297.31 L1240.86 297.52 L1239.81 297.74 L1238.76 297.95 L1237.7 298.16 L1236.65 298.37 L1235.6 298.59 L1234.54 298.81 L1233.49 299.02 L1232.43 299.24 L1231.38 299.46 L1230.32 299.67 L1229.27 299.89 L1228.21 300.11 L1227.16 300.33 L1226.1 300.56 L1225.05 300.78 L1223.99 301 L1222.93 301.22 L1221.87 301.45 L1220.82 301.67 L1219.76 301.9 L1218.7 302.12 L1217.64 302.35 L1216.58 302.58 L1215.52 302.81 L1214.46 303.03 L1213.4 303.26 L1212.34 303.49 L1211.28 303.72 L1210.22 303.95 L1209.15 304.18"/>
<path d="M611.1 327.8 L611.63 326.83 L612.16 325.87 L612.7 324.9 L613.25 323.94 L613.81 322.97 L614.37 322.01 L614.95 321.04 L615.53 320.08 L616.11 319.11 L616.71 318.15 L617.31 317.18 L617.92 316.21 L618.54 315.25 L619.17 314.28 L619.8 313.32 L620.44 312.35 L621.09 311.39 L621.75 310.42 L622.41 309.46 L623.08 308.49 L623.76 307.53 L624.45 306.56 L625.14 305.6 L625.84 304.63 L626.55 303.67 L627.26 302.71 L627.98 301.74 L628.71 300.78 L629.45 299.82 L630.2 298.85 L630.95 297.89 L631.71 296.93 L632.47 295.96 L633.25 295 L634.03 294.04 L634.81 293.08 L635.61 292.12 L636.41 291.15 L637.22 290.19 L638.03 289.23 L638.85 288.27 L639.68 287.31 L640.52 286.35 L641.36 285.39 L642.21 284.43 L643.06 283.47 L643.93 282.52 L644.8 281.56 L645.67 280.6 L646.56 279.64 L647.44 278.69 L648.34 277.73 L649.24 276.78 L650.15 275.82 L651.07 274.86 L651.99 273.91 L652.92 272.96 L653.85 272 L654.79 271.05 L655.74 270.1 L656.69 269.15 L657.65 268.19 L658.62 267.24 L659.59 266.29 L660.57 265.34 L661.55 264.4 L662.54 263.45 L663.53 262.5 L664.54 261.55 L665.54 260.61 L666.56 259.66 L667.57 258.71 L668.6 257.77 L669.63 256.83 L670.66 255.88 L671.71 254.94 L672.75 254 L673.8 253.06 L674.86 252.12 L675.92 251.18 L676.99 250.24 L678.07 249.3 L679.15 248.37 L680.23 247.43 L681.32 246.5 L682.41 245.56 L683.51 244.63 L684.62 243.7 L685.73 242.77 L686.84 241.84 L687.96 240.91 L689.08 239.98 L690.21 239.05 L691.34 238.12 L692.48 237.2 L693.63 236.27 L694.77 235.35 L695.92 234.43 L697.08 233.51 L698.24 232.59 L699.4 231.67 L700.57 230.75 L701.75 229.84 L702.92 228.92 L704.1 228.01 L705.29 227.1 L706.48 226.18 L707.67 225.27 L708.87 224.37 L710.07 223.46 L711.27 222.55 L712.48 221.65 L713.69 220.74 L714.91 219.84 L716.12 218.94 L717.35 218.04 L718.57 217.15 L719.8 216.25 L721.03 215.36 L722.27 214.46 L723.51 213.57 L724.75 212.68 L725.99 211.8 L727.24 210.91 L728.49 210.03 L729.74 209.15 L731 208.26 L732.25 207.39 L733.52 206.51 L734.78 205.63 L736.04 204.76 L737.31 203.89 L738.58 203.02 L739.85 202.15 L741.13 201.29 L742.41 200.43 L743.69 199.56 L744.97 198.71 L746.25 197.85 L747.53 197 L748.82 196.14 L750.11 195.29 L751.4 194.45 L752.69 193.6 L753.98 192.76 L755.28 191.92 L756.57 191.08 L757.87 190.25 L759.17 189.41 L760.47 188.58 L761.77 187.76 L763.07 186.93 L764.37 186.11 L765.67 185.29 L766.98 184.47 L768.28 183.66 L769.59 182.85 L770.89 182.04 L772.2 181.24 L773.51 180.44 L774.81 179.64 L776.12 178.84 L777.43 178.05 L778.74 177.26 L780.04 176.48 L781.35 175.7 L782.66 174.92 L783.97 174.15 L785.27 173.37 L786.58 172.61 L787.89 171.84 L789.19 171.08 L790.5 170.33 L791.8 169.58 L793.11 168.83 L794.41 168.08 L795.72 167.34 L797.02 166.61 L798.32 165.88 L799.62 165.15 L800.92 164.43 L802.21 163.71 L803.51 162.99 L804.81 162.28 L806.1 161.58 L807.39 160.88 L808.68 160.18 L809.97 159.49 L811.26 158.81 L812.55 158.13 L813.83 157.45 L815.11 156.78 L816.39 156.12 L817.67 155.46 L818.95 154.81 L820.23 154.16 L821.5 153.51 L822.77 152.88 L824.04 152.25 L825.3 151.62 L826.57 151 L827.83 150.39 L829.09 149.78 L830.35 149.18 L831.6 148.59 L832.85 148 L834.1 147.42 L835.35 146.84 L836.59 146.28 L837.83 145.72 L839.07 145.16 L840.31 144.62 L841.54 144.08 L842.77 143.54 L844 143.02 L845.23 142.5 L846.45 141.99 L847.67 141.49 L848.88 140.99 L850.1 140.51 L851.31 140.03 L852.52 139.56 L853.72 139.1 L854.92 138.64 L856.12 138.2 L857.32 137.76 L858.51 137.33 L859.71 136.91 L860.89 136.5 L862.08 136.1 L863.26 135.7 L864.44 135.32 L865.62 134.95 L866.79 134.58 L867.97 134.22 L869.14 133.88 L870.3 133.54 L871.47 133.21 L872.63 132.89 L873.79 132.59 L874.95 132.29 L876.1 132 L877.26 131.72 L878.41 131.46 L879.56 131.2 L880.7 130.95 L881.85 130.72 L882.99 130.49 L884.13 130.27 L885.27 130.07 L886.41 129.88 L887.55 129.69 L888.68 129.52 L889.82 129.36 L890.95 129.21 L892.08 129.07 L893.21 128.94 L894.34 128.82 L895.47 128.72 L896.6 128.62 L897.73 128.54 L898.86 128.46 L899.98 128.4 L901.11 128.35 L902.24 128.31 L903.37 128.28 L904.49 128.27 L905.62 128.26 L906.75 128.27 L907.88 128.28 L909 128.31 L910.13 128.35 L911.26 128.4 L912.39 128.46 L913.53 128.54 L914.66 128.62 L915.79 128.72 L916.93 128.82 L918.07 128.94 L919.21 129.07 L920.35 129.21 L921.49 129.36 L922.63 129.52 L923.78 129.7 L924.93 129.88 L926.08 130.08 L927.23 130.28 L928.38 130.5 L929.54 130.72 L930.7 130.96 L931.86 131.21 L933.03 131.46 L934.19 131.73 L935.36 132.01 L936.54 132.3 L937.71 132.6 L938.89 132.9 L940.07 133.22 L941.25 133.55 L942.44 133.89 L943.63 134.23 L944.82 134.59 L946.02 134.96 L947.22 135.33 L948.42 135.72 L949.63 136.11 L950.84 136.51 L952.05 136.92 L953.27 137.34 L954.49 137.77 L955.71 138.21 L956.93 138.65 L958.16 139.11 L959.4 139.57 L960.63 140.04 L961.87 140.52 L963.11 141.01 L964.36 141.5 L965.61 142.01 L966.86 142.52 L968.11 143.03 L969.37 143.56 L970.63 144.09 L971.9 144.63 L973.16 145.18 L974.43 145.73 L975.71 146.29 L976.98 146.86 L978.26 147.44 L979.54 148.02 L980.83 148.6 L982.12 149.2 L983.41 149.8 L984.7 150.41 L986 151.02 L987.3 151.64 L988.6 152.26 L989.9 152.9 L991.21 153.53 L992.51 154.18 L993.82 154.82 L995.14 155.48 L996.45 156.14 L997.77 156.8 L999.09 157.47 L1000.41 158.15 L1001.73 158.83 L1003.06 159.51 L1004.38 160.2 L1005.71 160.9 L1007.04 161.6 L1008.37 162.3 L1009.7 163.01 L1011.04 163.73 L1012.37 164.45 L1013.71 165.17 L1015.05 165.9 L1016.39 166.63 L1017.73 167.36 L1019.07 168.1 L1020.41 168.85 L1021.75 169.6 L1023.09 170.35 L1024.44 171.11 L1025.78 171.87 L1027.13 172.63 L1028.47 173.4 L1029.82 174.17 L1031.17 174.94 L1032.51 175.72 L1033.86 176.5 L1035.2 177.29 L1036.55 178.08 L1037.9 178.87 L1039.24 179.66 L1040.59 180.46 L1041.93 181.26 L1043.28 182.07 L1044.62 182.87 L1045.96 183.68 L1047.31 184.5 L1048.65 185.31 L1049.99 186.13 L1051.33 186.95 L1052.67 187.78 L1054.01 188.61 L1055.35 189.44 L1056.68 190.27 L1058.02 191.1 L1059.35 191.94 L1060.68 192.78 L1062.01 193.62 L1063.34 194.47 L1064.67 195.32 L1065.99 196.17 L1067.32 197.02 L1068.64 197.87 L1069.96 198.73 L1071.27 199.59"/>
<path d="M455 365 L455.38 365.15 L455.76 365.29 L456.13 365.44 L456.51 365.59 L456.89 365.73 L457.27 365.88 L457.65 366.02 L458.03 366.17 L458.41 366.31 L458.79 366.46 L459.17 366.6 L459.55 366.75 L459.93 366.89 L460.31 367.04 L460.69 367.18 L461.07 367.33 L461.45 367.47 L461.83 367.62 L462.21 367.76 L462.6 367.91 L462.98 368.05 L463.36 368.2 L463.74 368.34 L464.12 368.48 L464.51 368.63 L464.89 368.77 L465.27 368.91 L465.65 369.06 L466.04 369.2 L466.42 369.34 L466.8 369.49 L467.19 369.63 L467.57 369.77 L467.96 369.91 L468.34 370.06 L468.73 370.2 L469.11 370.34 L469.5 370.48 L469.88 370.62 L470.27 370.77 L470.65 370.91 L471.04 371.05 L471.42 371.19 L471.81 371.33 L472.19 371.47 L472.58 371.61 L472.97 371.75 L473.35 371.9 L473.74 372.04 L474.13 372.18 L474.51 372.32 L474.9 372.46 L475.29 372.6 L475.67 372.74 L476.06 372.88 L476.45 373.02 L476.84 373.16 L477.23 373.3 L477.61 373.43 L478 373.57 L478.39 373.71 L478.78 373.85 L479.17 373.99 L479.56 374.13 L479.95 374.27 L480.33 374.41 L480.72 374.54 L481.11 374.68 L481.5 374.82 L481.89 374.96 L482.28 375.09 L482.67 375.23 L483.06 375.37 L483.45 375.51 L483.84 375.64 L484.23 375.78 L484.62 375.92 L485.01 376.05 L485.41 376.19 L485.8 376.33 L486.19 376.46 L486.58 376.6 L486.97 376.73 L487.36 376.87 L487.75 377.01 L488.14 377.14 L488.54 377.28 L488.93 377.41 L489.32 377.55 L489.71 377.68 L490.1 377.82 L490.5 377.95 L490.89 378.08 L491.28 378.22 L491.67 378.35 L492.07 378.49 L492.46 378.62 L492.85 378.75 L493.25 378.89 L493.64 379.02 L494.03 379.15 L494.43 379.29 L494.82 379.42 L495.21 379.55 L495.61 379.68 L496 379.82 L496.39 379.95 L496.79 380.08 L497.18 380.21 L497.58 380.35 L497.97 380.48 L498.36 380.61 L498.76 380.74 L499.15 380.87 L499.55 381 L499.94 381.13 L500.34 381.26 L500.73 381.39 L501.13 381.52 L501.52 381.65 L501.92 381.78 L502.31 381.91 L502.71 382.04 L503.1 382.17 L503.5 382.3 L503.89 382.43 L504.29 382.56 L504.68 382.69 L505.08 382.82 L505.47 382.94 L505.87 383.07 L506.26 383.2 L506.66 383.33 L507.06 383.46 L507.45 383.58 L507.85 383.71 L508.24 383.84 L508.64 383.97 L509.04 384.09 L509.43 384.22 L509.83 384.35 L510.22 384.47 L510.62 384.6 L511.02 384.73 L511.41 384.85 L511.81 384.98 L512.21 385.1 L512.6 385.23 L513 385.35 L513.4 385.48 L513.79 385.6 L514.19 385.73 L514.59 385.85 L514.98 385.98 L515.38 386.1 L515.78 386.22 L516.17 386.35 L516.57 386.47 L516.97 386.59 L517.36 386.72 L517.76 386.84 L518.16 386.96 L518.55 387.09 L518.95 387.21 L519.35 387.33 L519.74 387.45 L520.14 387.57 L520.54 387.7 L520.94 387.82 L521.33 387.94 L521.73 388.06 L522.13 388.18 L522.52 388.3 L522.92 388.42 L523.32 388.54 L523.72 388.66 L524.11 388.78 L524.51 388.9 L524.91 389.02 L525.31 389.14 L525.7 389.26 L526.1 389.38 L526.5 389.5 L526.89 389.62 L527.29 389.74 L527.69 389.85 L528.09 389.97 L528.48 390.09 L528.88 390.21 L529.28 390.33 L529.68 390.44 L530.07 390.56 L530.47 390.68 L530.87 390.79 L531.26 390.91 L531.66 391.03 L532.06 391.14 L532.46 391.26 L532.85 391.37 L533.25 391.49 L533.65 391.61 L534.04 391.72 L534.44 391.84 L534.84 391.95 L535.24 392.06 L535.63 392.18 L536.03 392.29 L536.43 392.41 L536.82 392.52 L537.22 392.63 L537.62 392.75 L538.01 392.86 L538.41 392.97 L538.81 393.09 L539.2 393.2 L539.6 393.31 L540 393.42 L540.39 393.53 L540.79 393.65 L541.19 393.76 L541.58 393.87 L541.98 393.98 L542.38 394.09 L542.77 394.2 L543.17 394.31 L543.57 394.42 L543.96 394.53 L544.36 394.64 L544.75 394.75 L545.15 394.86 L545.55 394.97 L545.94 395.08 L546.34 395.19 L546.73 395.3 L547.13 395.4 L547.53 395.51 L547.92 395.62 L548.32 395.73 L548.71 395.83 L549.11 395.94 L549.5 396.05 L549.9 396.15 L550.29 396.26 L550.69 396.37 L551.09 396.47 L551.48 396.58 L551.88 396.69 L552.27 396.79 L552.67 396.9 L553.06 397 L553.46 397.11 L553.85 397.21 L554.24 397.31 L554.64 397.42 L555.03 397.52 L555.43 397.63 L555.82 397.73 L556.22 397.83 L556.61 397.93 L557.01 398.04 L557.4 398.14 L557.79 398.24 L558.19 398.34 L558.58 398.45 L558.97 398.55 L559.37 398.65 L559.76 398.75 L560.16 398.85 L560.55 398.95 L560.94 399.05 L561.34 399.15 L561.73 399.25 L562.12 399.35 L562.51 399.45 L562.91 399.55 L563.3 399.65 L563.69 399.75 L564.08 399.85 L564.48 399.94 L564.87 400.04 L565.26 400.14 L565.65 400.24 L566.05 400.34 L566.44 400.43 L566.83 400.53 L567.22 400.63 L567.61 400.72 L568 400.82 L568.4 400.91 L568.79 401.01 L569.18 401.11 L569.57 401.2 L569.96 401.3 L570.35 401.39 L570.74 401.48 L571.13 401.58 L571.52 401.67 L571.91 401.77 L572.3 401.86 L572.69 401.95 L573.08 402.05 L573.47 402.14 L573.86 402.23 L574.25 402.32 L574.64 402.42 L575.03 402.51 L575.42 402.6 L575.81 402.69 L576.2 402.78 L576.59 402.87 L576.98 402.96 L577.36 403.05 L577.75 403.14 L578.14 403.23 L578.53 403.32 L578.92 403.41 L579.31 403.5 L579.69 403.59 L580.08 403.68 L580.47 403.77 L580.86 403.85 L581.24 403.94 L581.63 404.03 L582.02 404.12 L582.4 404.2 L582.79 404.29 L583.18 404.38 L583.56 404.46 L583.95 404.55 L584.34 404.63 L584.72 404.72 L585.11 404.8 L585.49 404.89 L585.88 404.97 L586.26 405.06 L586.65 405.14 L587.03 405.23 L587.42 405.31 L587.8 405.39 L588.19 405.48 L588.57 405.56 L588.96 405.64 L589.34 405.72 L589.72 405.81 L590.11 405.89 L590.49 405.97 L590.88 406.05 L591.26 406.13 L591.64 406.21 L592.03 406.29 L592.41 406.37 L592.79 406.45 L593.17 406.53 L593.56 406.61 L593.94 406.69 L594.32 406.77 L594.7 406.85 L595.08 406.93 L595.46 407 L595.85 407.08 L596.23 407.16 L596.61 407.24 L596.99 407.31 L597.37 407.39 L597.75 407.47 L598.13 407.54 L598.51 407.62 L598.89 407.69 L599.27 407.77 L599.65 407.84 L600.03 407.92 L600.41 407.99 L600.79 408.07 L601.17 408.14 L601.55 408.22 L601.92 408.29 L602.3 408.36 L602.68 408.43 L603.06 408.51 L603.44 408.58 L603.81 408.65 L604.19 408.72 L604.57 408.79 L604.95 408.87 L605.32 408.94 L605.7 409.01 L606.08 409.08 L606.45 409.15 L606.83 409.22 L607.2 409.29 L607.58 409.36 L607.96 409.42 L608.33 409.49 L608.71 409.56 L609.08 409.63 L609.46 409.7 L609.83 409.76 L610.21 409.83 L610.58 409.9"/>
<path d="M476.7 358.3 L475.38 357.38 L474.07 356.45 L472.77 355.53 L471.48 354.6 L470.2 353.68 L468.93 352.75 L467.67 351.82 L466.43 350.89 L465.19 349.97 L463.96 349.04 L462.74 348.11 L461.54 347.17 L460.34 346.24 L459.16 345.31 L457.99 344.38 L456.82 343.44 L455.67 342.51 L454.53 341.58 L453.4 340.64 L452.28 339.71 L451.18 338.77 L450.08 337.84 L449 336.9 L447.92 335.96 L446.86 335.03 L445.81 334.09 L444.77 333.15 L443.74 332.21 L442.73 331.27 L441.72 330.34 L440.73 329.4 L439.75 328.46 L438.78 327.52 L437.82 326.58 L436.87 325.64 L435.94 324.7 L435.02 323.76 L434.11 322.82 L433.21 321.88 L432.32 320.94 L431.45 320 L430.58 319.06 L429.73 318.12 L428.89 317.18 L428.06 316.24 L427.25 315.3 L426.44 314.36 L425.65 313.42 L424.87 312.48 L424.11 311.55 L423.35 310.61 L422.61 309.67 L421.88 308.73 L421.16 307.79 L420.45 306.85 L419.76 305.92 L419.07 304.98 L418.4 304.04 L417.74 303.11 L417.1 302.17 L416.46 301.23 L415.84 300.3 L415.23 299.36 L414.63 298.43 L414.05 297.49 L413.47 296.56 L412.91 295.63 L412.36 294.7 L411.82 293.76 L411.3 292.83 L410.78 291.9 L410.28 290.97 L409.79 290.04 L409.31 289.11 L408.84 288.19 L408.39 287.26 L407.95 286.33 L407.51 285.41 L407.1 284.48 L406.69 283.56 L406.29 282.64 L405.91 281.71 L405.53 280.79 L405.17 279.87 L404.82 278.95 L404.48 278.03 L404.16 277.12 L403.84 276.2 L403.54 275.28 L403.24 274.37 L402.96 273.46 L402.69 272.54 L402.43 271.63 L402.18 270.72 L401.95 269.81 L401.72 268.91 L401.5 268 L401.3 267.1 L401.11 266.19 L400.92 265.29 L400.75 264.39 L400.59 263.49 L400.43 262.59 L400.29 261.69 L400.16 260.8 L400.04 259.9 L399.93 259.01 L399.83 258.12 L399.74 257.23 L399.66 256.34 L399.58 255.46 L399.52 254.57 L399.47 253.69 L399.43 252.81 L399.39 251.93 L399.37 251.05 L399.35 250.18 L399.35 249.3 L399.35 248.43 L399.36 247.56 L399.38 246.7 L399.41 245.83 L399.45 244.97 L399.5 244.1 L399.55 243.24 L399.61 242.39 L399.68 241.53 L399.76 240.68 L399.85 239.83 L399.94 238.98 L400.04 238.13 L400.15 237.29 L400.27 236.45 L400.39 235.61 L400.52 234.77 L400.65 233.94 L400.8 233.1 L400.94 232.27 L401.1 231.45 L401.26 230.62 L401.43 229.8 L401.6 228.98 L401.78 228.17 L401.97 227.36 L402.15 226.55 L402.35 225.74 L402.55 224.94 L402.75 224.13 L402.96 223.34 L403.17 222.54 L403.39 221.75 L403.61 220.96 L403.84 220.18 L404.07 219.39 L404.3 218.61 L404.53 217.84 L404.77 217.07 L405.01 216.3"/>
<path d="M1399.04 215.53 L1396.73 214.77 L1394.42 214.01 L1392.11 213.26 L1389.79 212.51 L1387.48 211.76 L1385.16 211.02 L1382.85 210.28 L1380.53 209.55 L1378.21 208.82 L1375.89 208.09 L1373.58 207.37 L1371.26 206.65 L1368.94 205.93 L1366.63 205.22 L1364.31 204.52 L1362 203.82 L1359.68 203.12 L1357.37 202.43 L1355.06 201.74 L1352.76 201.06 L1350.45 200.38 L1348.15 199.7 L1345.85 199.03 L1343.55 198.37 L1341.26 197.71 L1338.97 197.06 L1336.69 196.41 L1334.41 195.76 L1332.13 195.13 L1329.86 194.49 L1327.59 193.86 L1325.33 193.24 L1323.07 192.62 L1320.82 192.01 L1318.58 191.41 L1316.34 190.81 L1314.11 190.21 L1311.88 189.62 L1309.66 189.04 L1307.45 188.46 L1305.24 187.89 L1303.04 187.33 L1300.85 186.77 L1298.67 186.21 L1296.5 185.67 L1294.33 185.13 L1292.18 184.59 L1290.03 184.07 L1287.89 183.55 L1285.76 183.03 L1283.64 182.53 L1281.53 182.03 L1279.43 181.53 L1277.34 181.05 L1275.27 180.57 L1273.2 180.09 L1271.14 179.63 L1269.09 179.17 L1267.06 178.72 L1265.03 178.27 L1263.02 177.84 L1261.02 177.41 L1259.03 176.99 L1257.06 176.57 L1255.09 176.17 L1253.14 175.77 L1251.2 175.38 L1249.28 175 L1247.36 174.62 L1245.47 174.25 L1243.58 173.89 L1241.71 173.54 L1239.85 173.2 L1238 172.87 L1236.17 172.54 L1234.36 172.22 L1232.55 171.91 L1230.77 171.61 L1228.99 171.32 L1227.23 171.04 L1225.49 170.76 L1223.76 170.5 L1222.05 170.24 L1220.35 169.99 L1218.66 169.75 L1216.99 169.52 L1215.34 169.3 L1213.7 169.08 L1212.08 168.88 L1210.47 168.68 L1208.87 168.5 L1207.3 168.32 L1205.74 168.15 L1204.19 167.99 L1202.66 167.84 L1201.14 167.7 L1199.65 167.57 L1198.16 167.45 L1196.69 167.34 L1195.24 167.24 L1193.81 167.14 L1192.39 167.06 L1190.98 166.98 L1189.59 166.92 L1188.22 166.86 L1186.86 166.81 L1185.52 166.78 L1184.19 166.75 L1182.88 166.73 L1181.58 166.72 L1180.3 166.72 L1179.03 166.73 L1177.78 166.75 L1176.55 166.78 L1175.33 166.82 L1174.12 166.87 L1172.93 166.93 L1171.75 167 L1170.59 167.07 L1169.44 167.16 L1168.31 167.25 L1167.19 167.36 L1166.08 167.47 L1164.99 167.6 L1163.91 167.73 L1162.85 167.87 L1161.8 168.02 L1160.76 168.18 L1159.74 168.35 L1158.73 168.53 L1157.73 168.72 L1156.75 168.92 L1155.78 169.12 L1154.82 169.34 L1153.87 169.56 L1152.94 169.79 L1152.01 170.03 L1151.1 170.29 L1150.2 170.54 L1149.31 170.81 L1148.44 171.09 L1147.57 171.37 L1146.72 171.67 L1145.87 171.97 L1145.04 172.28 L1144.22 172.6 L1143.4 172.93 L1142.6 173.26 L1141.81 173.61 L1141.03 173.96 L1140.25 174.32 L1139.49 174.69 L1138.73 175.07 L1137.99 175.45 L1137.25 175.84 L1136.52 176.24 L1135.8 176.65 L1135.08 177.06 L1134.38 177.49 L1133.68 177.92 L1132.99 178.36 L1132.31 178.8 L1131.63 179.25 L1130.97 179.71 L1130.3 180.18 L1129.65 180.65 L1129 181.13 L1128.36 181.62 L1127.72 182.12 L1127.09 182.62 L1126.47 183.13 L1125.85 183.64 L1125.24 184.16 L1124.63 184.69 L1124.03 185.23 L1123.43 185.77 L1122.84 186.32 L1122.25 186.87 L1121.66 187.43 L1121.08 188 L1120.51 188.57 L1119.93 189.15 L1119.36 189.73 L1118.8 190.32 L1118.24 190.92 L1117.68 191.52 L1117.12 192.12 L1116.57 192.74 L1116.02 193.36 L1115.48 193.98 L1114.93 194.61 L1114.39 195.24 L1113.85 195.88 L1113.31 196.53 L1112.78 197.18 L1112.24 197.83 L1111.71 198.49 L1111.18 199.16 L1110.65 199.83 L1110.13 200.5 L1109.6 201.18 L1109.07 201.86 L1108.55 202.55 L1108.03 203.25 L1107.5 203.94 L1106.98 204.65 L1106.46 205.35 L1105.94 206.06 L1105.42 206.78 L1104.9 207.5 L1104.38 208.22 L1103.86 208.95 L1103.34 209.68 L1102.82 210.42 L1102.29 211.16 L1101.77 211.9 L1101.25 212.65 L1100.73 213.4 L1100.21 214.15 L1099.68 214.91 L1099.16 215.67 L1098.63 216.44 L1098.1 217.21 L1097.58 217.98 L1097.05 218.76 L1096.52 219.54 L1095.98 220.32 L1095.45 221.11 L1094.92 221.89 L1094.38 222.69 L1093.84 223.48 L1093.3 224.28 L1092.76 225.08 L1092.22 225.89 L1091.67 226.69 L1091.13 227.51 L1090.58 228.32 L1090.03 229.13 L1089.47 229.95 L1088.92 230.78"/>
<path d="M850 252.2 L850 252.66 L850 253.13 L850 253.59 L850 254.05 L850 254.52 L850 254.98 L850 255.44 L850 255.91 L850 256.37 L850 256.83 L850.01 257.3 L850.01 257.76 L850.01 258.22 L850.01 258.69 L850.02 259.15 L850.02 259.61 L850.03 260.08 L850.03 260.54 L850.04 261 L850.04 261.47 L850.05 261.93 L850.05 262.39 L850.06 262.86 L850.06 263.32 L850.07 263.78 L850.08 264.24 L850.09 264.71 L850.09 265.17 L850.1 265.63 L850.11 266.1 L850.12 266.56 L850.13 267.02 L850.14 267.49 L850.15 267.95 L850.16 268.41 L850.17 268.88 L850.18 269.34 L850.19 269.81 L850.2 270.27 L850.21 270.73 L850.22 271.2 L850.23 271.66 L850.25 272.12 L850.26 272.59 L850.27 273.05 L850.28 273.51 L850.3 273.98 L850.31 274.44 L850.33 274.9 L850.34 275.37 L850.36 275.83 L850.37 276.29 L850.39 276.76 L850.4 277.22 L850.42 277.68 L850.44 278.15 L850.45 278.61 L850.47 279.07 L850.49 279.54 L850.51 280 L850.52 280.46 L850.54 280.93 L850.56 281.39 L850.58 281.85 L850.6 282.32 L850.62 282.78 L850.64 283.24 L850.66 283.71 L850.68 284.17 L850.7 284.63 L850.72 285.1 L850.75 285.56 L850.77 286.02 L850.79 286.49 L850.81 286.95 L850.83 287.41 L850.86 287.88 L850.88 288.34 L850.91 288.81 L850.93 289.27 L850.95 289.73 L850.98 290.2 L851 290.66 L851.03 291.12 L851.06 291.59 L851.08 292.05 L851.11 292.51 L851.13 292.98 L851.16 293.44 L851.19 293.9 L851.22 294.37 L851.24 294.83 L851.27 295.29 L851.3 295.76 L851.33 296.22 L851.36 296.68 L851.39 297.15 L851.42 297.61 L851.45 298.07 L851.48 298.54 L851.51 299 L851.54 299.47 L851.57 299.93 L851.6 300.39 L851.64 300.86 L851.67 301.32 L851.7 301.78 L851.73 302.25 L851.77 302.71 L851.8 303.17 L851.84 303.64 L851.87 304.1 L851.9 304.56 L851.94 305.03 L851.97 305.49 L852.01 305.95 L852.05 306.42 L852.08 306.88 L852.12 307.35 L852.15 307.81 L852.19 308.27 L852.23 308.74 L852.27 309.2 L852.3 309.66 L852.34 310.13 L852.38 310.59 L852.42 311.05 L852.46 311.52 L852.5 311.98 L852.54 312.44 L852.58 312.91 L852.62 313.37 L852.66 313.83 L852.7 314.3 L852.74 314.76 L852.78 315.22 L852.83 315.69 L852.87 316.15 L852.91 316.62 L852.95 317.08 L853 317.54 L853.04 318.01 L853.08 318.47 L853.13 318.93 L853.17 319.4 L853.22 319.86 L853.26 320.32 L853.31 320.79 L853.35 321.25 L853.4 321.71 L853.44 322.18 L853.49 322.64 L853.54 323.1 L853.58 323.57 L853.63 324.03 L853.68 324.5 L853.73 324.96 L853.78 325.42 L853.82 325.89 L853.87 326.35 L853.92 326.81 L853.97 327.28 L854.02 327.74 L854.07 328.2 L854.12 328.67 L854.17 329.13 L854.22 329.59 L854.27 330.06 L854.33 330.52 L854.38 330.98 L854.43 331.45 L854.48 331.91 L854.53 332.38 L854.59 332.84 L854.64 333.3 L854.69 333.77 L854.75 334.23 L854.8 334.69 L854.86 335.16 L854.91 335.62 L854.97 336.08 L855.02 336.55 L855.08 337.01 L855.13 337.47 L855.19 337.94 L855.25 338.4 L855.3 338.86 L855.36 339.33 L855.42 339.79 L855.47 340.26 L855.53 340.72 L855.59 341.18 L855.65 341.65 L855.71 342.11 L855.77 342.57 L855.83 343.04 L855.89 343.5 L855.95 343.96 L856.01 344.43 L856.07 344.89 L856.13 345.35 L856.19 345.82 L856.25 346.28 L856.31 346.74 L856.37 347.21 L856.43 347.67 L856.5 348.13 L856.56 348.6 L856.62 349.06 L856.69 349.52 L856.75 349.99 L856.81 350.45 L856.88 350.92 L856.94 351.38 L857.01 351.84 L857.07 352.31 L857.14 352.77 L857.2 353.23 L857.27 353.7 L857.33 354.16 L857.4 354.62 L857.47 355.09 L857.53 355.55 L857.6 356.01 L857.67 356.48 L857.74 356.94 L857.8 357.4 L857.87 357.87 L857.94 358.33 L858.01 358.79 L858.08 359.26 L858.15 359.72 L858.22 360.18 L858.29 360.65 L858.36 361.11 L858.43 361.57 L858.5 362.04 L858.57 362.5 L858.64 362.96 L858.71 363.43 L858.79 363.89 L858.86 364.36 L858.93 364.82 L859 365.28 L859.07 365.75 L859.15 366.21 L859.22 366.67 L859.3 367.14 L859.37 367.6 L859.44 368.06 L859.52 368.53 L859.59 368.99 L859.67 369.45 L859.74 369.92 L859.82 370.38 L859.89 370.84 L859.97 371.31 L860.05 371.77 L860.12 372.23 L860.2 372.7 L860.28 373.16 L860.35 373.62 L860.43 374.09 L860.51 374.55 L860.59 375.01 L860.67 375.48 L860.74 375.94 L860.82 376.4 L860.9 376.87 L860.98 377.33 L861.06 377.79 L861.14 378.26 L861.22 378.72 L861.3 379.18 L861.38 379.65 L861.46 380.11 L861.54 380.57 L861.62 381.04 L861.71 381.5 L861.79 381.96 L861.87 382.43 L861.95 382.89 L862.04 383.35 L862.12 383.82 L862.2 384.28 L862.28 384.74 L862.37 385.2 L862.45 385.67 L862.54 386.13 L862.62 386.59 L862.71 387.06 L862.79 387.52 L862.87 387.98 L862.96 388.45 L863.05 388.91 L863.13 389.37 L863.22 389.84 L863.3 390.3 L863.39 390.76 L863.48 391.23 L863.56 391.69 L863.65 392.15 L863.74 392.62 L863.83 393.08 L863.91 393.54 L864 394.01 L864.09 394.47 L864.18 394.93 L864.27 395.4 L864.36 395.86 L864.45 396.32 L864.54 396.78 L864.63 397.25 L864.72 397.71 L864.81 398.17 L864.9 398.64 L864.99 399.1 L865.08 399.56 L865.17 400.03 L865.26 400.49 L865.35 400.95 L865.44 401.42 L865.54 401.88 L865.63 402.34 L865.72 402.8 L865.81 403.27 L865.91 403.73 L866 404.19 L866.09 404.66 L866.19 405.12 L866.28 405.58 L866.37 406.05 L866.47 406.51 L866.56 406.97 L866.66 407.43 L866.75 407.9 L866.85 408.36 L866.94 408.82 L867.04 409.29 L867.13 409.75 L867.23 410.21 L867.33 410.68 L867.42 411.14 L867.52 411.6 L867.62 412.06 L867.71 412.53 L867.81 412.99 L867.91 413.45 L868.01 413.92 L868.1 414.38 L868.2 414.84 L868.3 415.3 L868.4 415.77 L868.5 416.23 L868.6 416.69 L868.7 417.16 L868.8 417.62 L868.89 418.08 L868.99 418.54 L869.09 419.01 L869.19 419.47 L869.3 419.93 L869.4 420.39 L869.5 420.86 L869.6 421.32 L869.7 421.78 L869.8 422.25 L869.9 422.71 L870 423.17 L870.11 423.63 L870.21 424.1 L870.31 424.56 L870.41 425.02 L870.52 425.48 L870.62 425.95 L870.72 426.41 L870.82 426.87 L870.93 427.34 L871.03 427.8 L871.14 428.26 L871.24 428.72 L871.34 429.19 L871.45 429.65 L871.55 430.11 L871.66 430.57 L871.76 431.04 L871.87 431.5 L871.97 431.96 L872.08 432.42 L872.18 432.89 L872.29 433.35 L872.4 433.81 L872.5 434.27 L872.61 434.74 L872.72 435.2 L872.82 435.66 L872.93 436.12 L873.04 436.59 L873.14 437.05"/>
<path d="M862.2 248.4 L861.93 248.88 L861.66 249.36 L861.39 249.84 L861.11 250.31 L860.84 250.79 L860.57 251.27 L860.3 251.75 L860.03 252.23 L859.76 252.71 L859.49 253.19 L859.22 253.67 L858.96 254.15 L858.69 254.63 L858.42 255.11 L858.15 255.59 L857.88 256.07 L857.62 256.55 L857.35 257.03 L857.08 257.51 L856.81 257.99 L856.55 258.47 L856.28 258.95 L856.02 259.43 L855.75 259.91 L855.49 260.4 L855.22 260.88 L854.96 261.36 L854.69 261.84 L854.43 262.32 L854.17 262.8 L853.9 263.28 L853.64 263.77 L853.38 264.25 L853.11 264.73 L852.85 265.21 L852.59 265.69 L852.33 266.17 L852.07 266.66 L851.81 267.14 L851.55 267.62 L851.29 268.1 L851.03 268.59 L850.77 269.07 L850.51 269.55 L850.25 270.03 L849.99 270.52 L849.73 271 L849.48 271.48 L849.22 271.96 L848.96 272.45 L848.7 272.93 L848.45 273.41 L848.19 273.9 L847.94 274.38 L847.68 274.86 L847.43 275.35 L847.17 275.83 L846.92 276.31 L846.66 276.8 L846.41 277.28 L846.16 277.77 L845.91 278.25 L845.65 278.73 L845.4 279.22 L845.15 279.7 L844.9 280.18 L844.65 280.67 L844.4 281.15 L844.15 281.64 L843.9 282.12 L843.65 282.61 L843.4 283.09 L843.15 283.57 L842.9 284.06 L842.66 284.54 L842.41 285.03 L842.16 285.51 L841.92 286 L841.67 286.48 L841.42 286.97 L841.18 287.45 L840.93 287.94 L840.69 288.42 L840.45 288.91 L840.2 289.39 L839.96 289.88 L839.72 290.36 L839.47 290.85 L839.23 291.33 L838.99 291.82 L838.75 292.3 L838.51 292.79 L838.27 293.27 L838.03 293.76 L837.79 294.24 L837.55 294.73 L837.31 295.21 L837.07 295.7 L836.84 296.18 L836.6 296.67 L836.36 297.15 L836.13 297.64 L835.89 298.13 L835.65 298.61 L835.42 299.1 L835.19 299.58 L834.95 300.07 L834.72 300.55 L834.48 301.04 L834.25 301.53 L834.02 302.01 L833.79 302.5 L833.56 302.98 L833.33 303.47 L833.1 303.95 L832.87 304.44 L832.64 304.93 L832.41 305.41 L832.18 305.9 L831.95 306.38 L831.72 306.87 L831.5 307.36 L831.27 307.84 L831.04 308.33 L830.82 308.81 L830.59 309.3 L830.37 309.79 L830.14 310.27 L829.92 310.76 L829.7 311.24 L829.47 311.73 L829.25 312.22 L829.03 312.7 L828.81 313.19 L828.59 313.68 L828.37 314.16 L828.15 314.65 L827.93 315.13 L827.71 315.62 L827.49 316.11 L827.27 316.59 L827.06 317.08 L826.84 317.57 L826.62 318.05 L826.41 318.54 L826.19 319.02 L825.98 319.51 L825.77 320 L825.55 320.48 L825.34 320.97 L825.13 321.46 L824.91 321.94 L824.7 322.43 L824.49 322.91 L824.28 323.4 L824.07 323.89 L823.86 324.37 L823.65 324.86 L823.44 325.35 L823.24 325.83 L823.03 326.32 L822.82 326.8 L822.62 327.29 L822.41 327.78 L822.21 328.26 L822 328.75 L821.8 329.24 L821.59 329.72 L821.39 330.21 L821.19 330.69 L820.99 331.18 L820.78 331.67 L820.58 332.15 L820.38 332.64 L820.18 333.12 L819.99 333.61 L819.79 334.1 L819.59 334.58 L819.39 335.07 L819.19 335.55 L819 336.04 L818.8 336.53 L818.61 337.01 L818.41 337.5 L818.22 337.98 L818.03 338.47 L817.83 338.95 L817.64 339.44 L817.45 339.93 L817.26 340.41 L817.07 340.9 L816.88 341.38 L816.69 341.87 L816.5 342.35 L816.31 342.84 L816.12 343.33 L815.93 343.81 L815.75 344.3 L815.56 344.78 L815.38 345.27 L815.19 345.75 L815.01 346.24 L814.82 346.72 L814.64 347.21 L814.46 347.69 L814.28 348.18 L814.1 348.66 L813.91 349.15 L813.73 349.64 L813.56 350.12 L813.38 350.61 L813.2 351.09 L813.02 351.58 L812.84 352.06 L812.67 352.54 L812.49 353.03 L812.32 353.51 L812.14 354 L811.97 354.48 L811.79 354.97 L811.62 355.45 L811.45 355.94 L811.28 356.42 L811.1 356.91 L810.93 357.39 L810.76 357.88 L810.59 358.36 L810.43 358.84 L810.26 359.33 L810.09 359.81 L809.92 360.3 L809.76 360.78 L809.59 361.26 L809.43 361.75 L809.26 362.23 L809.1 362.72 L808.94 363.2 L808.77 363.68 L808.61 364.17 L808.45 364.65 L808.29 365.13 L808.13 365.62 L807.97 366.1 L807.81 366.58 L807.65 367.07 L807.5 367.55 L807.34 368.03 L807.18 368.52 L807.03 369 L806.87 369.48 L806.72 369.96 L806.56 370.45 L806.41 370.93 L806.26 371.41 L806.11 371.89 L805.95 372.38 L805.8 372.86 L805.65 373.34 L805.5 373.82 L805.36 374.31 L805.21 374.79 L805.06 375.27 L804.91 375.75 L804.77 376.23 L804.62 376.72 L804.48 377.2 L804.33 377.68 L804.19 378.16 L804.05 378.64 L803.9 379.12 L803.76 379.6 L803.62 380.09 L803.48 380.57 L803.34 381.05 L803.2 381.53 L803.06 382.01 L802.92 382.49 L802.79 382.97 L802.65 383.45 L802.51 383.93 L802.38 384.41 L802.24 384.89 L802.11 385.37 L801.98 385.85 L801.84 386.33 L801.71 386.81 L801.58 387.29 L801.45 387.77 L801.32 388.25 L801.19 388.73 L801.06 389.21 L800.93 389.69 L800.8 390.17 L800.68 390.65 L800.55 391.12 L800.43 391.6 L800.3 392.08 L800.18 392.56 L800.05 393.04 L799.93 393.52 L799.81 394 L799.68 394.47 L799.56 394.95 L799.44 395.43 L799.32 395.91 L799.2 396.38 L799.09 396.86 L798.97 397.34 L798.85 397.82 L798.73 398.29 L798.62 398.77 L798.5 399.25 L798.39 399.72 L798.27 400.2 L798.16 400.68 L798.05 401.15 L797.93 401.63 L797.82 402.1 L797.71 402.58 L797.6 403.06 L797.49 403.53 L797.38 404.01 L797.27 404.48 L797.17 404.96 L797.06 405.43 L796.95 405.91 L796.85 406.38 L796.74 406.86 L796.64 407.33 L796.53 407.8 L796.43 408.28 L796.33 408.75 L796.23 409.23 L796.12 409.7 L796.02 410.17 L795.92 410.65 L795.82 411.12 L795.72 411.59 L795.63 412.06 L795.53 412.54 L795.43 413.01 L795.34 413.48 L795.24 413.95 L795.15 414.43 L795.05 414.9 L794.96 415.37 L794.86 415.84 L794.77 416.31 L794.68 416.78 L794.59 417.25 L794.5 417.72 L794.41 418.19 L794.32 418.66 L794.23 419.13 L794.14 419.6 L794.05 420.07 L793.97 420.54 L793.88 421.01 L793.79 421.48 L793.71 421.95 L793.62 422.42 L793.54 422.89 L793.46 423.36 L793.37 423.82 L793.29 424.29 L793.21 424.76 L793.13 425.23 L793.05 425.69 L792.97 426.16 L792.89 426.63 L792.81 427.09 L792.73 427.56 L792.66 428.03 L792.58 428.49 L792.5 428.96 L792.43 429.42 L792.35 429.89 L792.28 430.35 L792.21 430.82 L792.13 431.28 L792.06 431.75 L791.99 432.21 L791.92 432.68 L791.85 433.14 L791.78 433.6 L791.71 434.06 L791.64 434.53 L791.57 434.99 L791.5 435.45 L791.43 435.91 L791.37 436.38 L791.3 436.84 L791.24 437.3 L791.17 437.76 L791.11 438.22 L791.04 438.68 L790.98 439.14 L790.92 439.6 L790.85 440.06"/>
<path d="M875.6 279.6 L875.4 278.98 L875.2 278.37 L875 277.75 L874.8 277.14 L874.6 276.52 L874.4 275.91 L874.2 275.29 L874 274.68 L873.8 274.06 L873.61 273.45 L873.41 272.83 L873.21 272.22 L873.01 271.6 L872.82 270.99 L872.62 270.38 L872.43 269.76 L872.23 269.15 L872.03 268.53 L871.84 267.92 L871.64 267.3 L871.45 266.69 L871.26 266.08 L871.06 265.46 L870.87 264.85 L870.68 264.23 L870.48 263.62 L870.29 263.01 L870.1 262.39 L869.91 261.78 L869.71 261.17 L869.52 260.55 L869.33 259.94 L869.14 259.33 L868.95 258.72 L868.76 258.1 L868.57 257.49 L868.38 256.88 L868.2 256.26 L868.01 255.65 L867.82 255.04 L867.63 254.43 L867.44 253.82 L867.26 253.2 L867.07 252.59 L866.88 251.98 L866.7 251.37 L866.51 250.76 L866.33 250.15 L866.14 249.53 L865.96 248.92 L865.78 248.31 L865.59 247.7 L865.41 247.09 L865.23 246.48 L865.04 245.87 L864.86 245.26 L864.68 244.65 L864.5 244.04 L864.32 243.43 L864.14 242.82 L863.96 242.21 L863.78 241.6 L863.6 240.99 L863.42 240.38 L863.24 239.77 L863.06 239.16 L862.89 238.55 L862.71 237.94 L862.53 237.33 L862.36 236.72 L862.18 236.12 L862.01 235.51 L861.83 234.9 L861.66 234.29 L861.48 233.68 L861.31 233.08 L861.13 232.47 L860.96 231.86 L860.79 231.25 L860.62 230.65 L860.44 230.04 L860.27 229.43 L860.1 228.83 L859.93 228.22 L859.76 227.61 L859.59 227.01 L859.42 226.4 L859.25 225.79 L859.08 225.19 L858.92 224.58 L858.75 223.98 L858.58 223.37 L858.42 222.77 L858.25 222.16 L858.08 221.56 L857.92 220.96 L857.75 220.35 L857.59 219.75 L857.42 219.14 L857.26 218.54 L857.1 217.94 L856.93 217.33 L856.77 216.73 L856.61 216.13 L856.45 215.53 L856.29 214.92 L856.13 214.32 L855.97 213.72 L855.81 213.12 L855.65 212.52 L855.49 211.92 L855.33 211.32 L855.17 210.71 L855.02 210.11 L854.86 209.51 L854.7 208.91 L854.55 208.31 L854.39 207.72 L854.24 207.12 L854.08 206.52 L853.93 205.92 L853.77 205.32 L853.62 204.72 L853.47 204.12 L853.31 203.53 L853.16 202.93 L853.01 202.33 L852.86 201.74 L852.71 201.14 L852.56 200.54 L852.41 199.95 L852.26 199.35 L852.11 198.76 L851.96 198.16 L851.81 197.57 L851.67 196.97 L851.52 196.38 L851.37 195.78 L851.23 195.19 L851.08 194.6 L850.93 194 L850.79 193.41 L850.65 192.82 L850.5 192.23 L850.36 191.64 L850.21 191.05 L850.07 190.45 L849.93 189.86 L849.79 189.27 L849.65 188.68 L849.51 188.09 L849.37 187.51 L849.23 186.92 L849.09 186.33 L848.95 185.74 L848.81 185.15 L848.67 184.57 L848.53 183.98 L848.39 183.39 L848.26 182.81 L848.12 182.22 L847.98 181.64 L847.85 181.05 L847.71 180.47 L847.58 179.88 L847.44 179.3 L847.31 178.72 L847.18 178.14 L847.04 177.55 L846.91 176.97 L846.78 176.39 L846.64 175.81 L846.51 175.23 L846.38 174.65 L846.25 174.07 L846.12 173.49 L845.99 172.91 L845.86 172.34 L845.73 171.76 L845.6 171.18 L845.47 170.61 L845.35 170.03 L845.22 169.45 L845.09 168.88 L844.96 168.31 L844.84 167.73 L844.71 167.16 L844.58 166.59 L844.46 166.01 L844.33 165.44 L844.21 164.87 L844.08 164.3 L843.96 163.73 L843.83 163.16 L843.71 162.6 L843.59 162.03 L843.46 161.46 L843.34 160.9 L843.22 160.33 L843.1 159.77 L842.97 159.2 L842.85 158.64 L842.73 158.07 L842.61 157.51 L842.49 156.95 L842.37 156.39 L842.25 155.83 L842.13 155.27 L842.01 154.71 L841.89 154.15 L841.77 153.6 L841.65 153.04 L841.53 152.49 L841.41 151.93 L841.3 151.38 L841.18 150.82 L841.06 150.27 L840.94 149.72 L840.82 149.17 L840.71 148.62 L840.59 148.07 L840.47 147.52 L840.35 146.98 L840.24 146.43 L840.12 145.89 L840 145.34 L839.89 144.8 L839.77 144.26 L839.65 143.72 L839.54 143.18 L839.42 142.64 L839.31 142.1 L839.19 141.56 L839.07 141.02 L838.96 140.49 L838.84 139.96 L838.72 139.42 L838.61 138.89 L838.49 138.36 L838.37 137.83 L838.26 137.3 L838.14 136.78 L838.02 136.25 L837.91 135.73 L837.79 135.2 L837.67 134.68 L837.56 134.16 L837.44 133.64 L837.32 133.12 L837.2 132.6 L837.08 132.09 L836.96 131.57 L836.85 131.06 L836.73 130.55 L836.61 130.04 L836.49 129.53 L836.37 129.03 L836.25 128.52 L836.13 128.02 L836 127.51 L835.88 127.01 L835.76 126.51 L835.64 126.02 L835.51 125.52 L835.39 125.03 L835.27 124.53 L835.14 124.04 L835.01 123.55 L834.89 123.07 L834.76 122.58 L834.63 122.1 L834.5 121.62 L834.38 121.14 L834.24 120.66 L834.11 120.18 L833.98 119.71 L833.85 119.23 L833.72 118.76 L833.58 118.3 L833.44 117.83 L833.31 117.37 L833.17 116.91 L833.03 116.45 L832.89 115.99 L832.75 115.53 L832.61 115.08 L832.46 114.63 L832.32 114.18 L832.17 113.74 L832.02 113.3 L831.87 112.86 L831.72 112.42 L831.57 111.98 L831.41 111.55 L831.26 111.12 L831.1 110.69 L830.94 110.27 L830.78 109.84 L830.61 109.43 L830.45 109.01 L830.28 108.6 L830.11 108.19 L829.94 107.78 L829.77 107.37 L829.59 106.97 L829.41 106.57 L829.23 106.18 L829.05 105.79 L828.86 105.4 L828.67 105.01 L828.48 104.63 L828.29 104.25 L828.09 103.88 L827.89 103.51 L827.69 103.14 L827.48 102.78 L827.28 102.42 L827.06 102.06 L826.85 101.71 L826.63 101.36 L826.41 101.01 L826.18 100.67 L825.95 100.33 L825.72 100 L825.48 99.67 L825.24 99.35 L825 99.03 L824.75 98.71 L824.49 98.4 L824.24 98.09 L823.97 97.79 L823.71 97.49 L823.44 97.2 L823.16 96.91 L822.88 96.62 L822.59 96.34 L822.3 96.07 L822 95.8 L821.7 95.53 L821.4 95.27 L821.08 95.02 L820.77 94.77 L820.44 94.52 L820.11 94.28 L819.78 94.05 L819.43 93.82 L819.09 93.59 L818.73 93.38 L818.37 93.16 L818 92.95 L817.63 92.75 L817.25 92.56 L816.86 92.37 L816.46 92.18 L816.06 92 L815.65 91.83 L815.23 91.66 L814.81 91.5 L814.38 91.35 L813.94 91.2 L813.49 91.05 L813.03 90.92 L812.57 90.79 L812.09 90.66 L811.61 90.54 L811.12 90.43 L810.63 90.32 L810.12 90.22 L809.6 90.13 L809.08 90.04 L808.54 89.96 L808 89.89 L807.45 89.82 L806.89 89.76 L806.32 89.7 L805.73 89.66 L805.14 89.61 L804.54 89.58 L803.93 89.55 L803.31 89.53 L802.69 89.51 L802.05 89.5 L801.4 89.5 L800.74 89.51 L800.07 89.52 L799.38 89.53 L798.69 89.56 L797.99 89.59 L797.28 89.62 L796.56 89.67 L795.83 89.72 L795.08 89.77 L794.33 89.84 L793.56 89.91 L792.79 89.98 L792 90.06 L791.21 90.15 L790.4 90.25 L789.58 90.35"/>
<path d="M876.9 340.7 L875.98 339.88 L875.06 339.05 L874.14 338.23 L873.22 337.4 L872.31 336.58 L871.39 335.75 L870.47 334.92 L869.56 334.1 L868.64 333.27 L867.73 332.44 L866.82 331.62 L865.9 330.79 L864.99 329.96 L864.08 329.13 L863.17 328.3 L862.26 327.47 L861.35 326.64 L860.44 325.82 L859.53 324.99 L858.63 324.16 L857.72 323.33 L856.82 322.5 L855.91 321.67 L855.01 320.84 L854.11 320.01 L853.2 319.18 L852.3 318.35 L851.4 317.52 L850.51 316.69 L849.61 315.86 L848.71 315.03 L847.82 314.2 L846.92 313.38 L846.03 312.55 L845.14 311.72 L844.25 310.89 L843.36 310.06 L842.47 309.23 L841.58 308.41 L840.7 307.58 L839.81 306.75 L838.93 305.92 L838.04 305.1 L837.16 304.27 L836.28 303.45 L835.4 302.62 L834.53 301.8 L833.65 300.97 L832.78 300.15 L831.9 299.32 L831.03 298.5 L830.16 297.68 L829.29 296.86 L828.42 296.03 L827.55 295.21 L826.69 294.39 L825.82 293.57 L824.96 292.75 L824.1 291.94 L823.24 291.12 L822.38 290.3 L821.53 289.49 L820.67 288.67 L819.82 287.86 L818.97 287.04 L818.12 286.23 L817.27 285.42 L816.42 284.6 L815.57 283.79 L814.73 282.98 L813.89 282.18 L813.04 281.37 L812.2 280.56 L811.37 279.76 L810.53 278.95 L809.69 278.15 L808.86 277.34 L808.03 276.54 L807.2 275.74 L806.37 274.94 L805.54 274.14 L804.72 273.35 L803.89 272.55 L803.07 271.76 L802.25 270.96 L801.43 270.17 L800.61 269.38 L799.8 268.59 L798.98 267.8 L798.17 267.01 L797.36 266.23 L796.55 265.45 L795.74 264.66 L794.94 263.88 L794.13 263.1 L793.33 262.32 L792.53 261.55 L791.73 260.77 L790.93 260 L790.14 259.23 L789.34 258.46 L788.55 257.69 L787.76 256.92 L786.96 256.16 L786.18 255.39 L785.39 254.63 L784.6 253.87 L783.82 253.11 L783.04 252.36 L782.26 251.6 L781.48 250.85 L780.7 250.1 L779.92 249.35 L779.15 248.61 L778.37 247.86 L777.6 247.12 L776.83 246.38 L776.06 245.64 L775.29 244.91 L774.52 244.17 L773.76 243.44 L772.99 242.71 L772.23 241.98 L771.47 241.26 L770.71 240.54 L769.95 239.82 L769.19 239.1 L768.43 238.39 L767.67 237.67 L766.92 236.96 L766.17 236.26 L765.41 235.55 L764.66 234.85 L763.91 234.15 L763.16 233.45 L762.41 232.76 L761.66 232.07 L760.91 231.38 L760.17 230.7 L759.42 230.01 L758.68 229.33 L757.93 228.66 L757.19 227.98 L756.44 227.31 L755.7 226.64 L754.96 225.98 L754.22 225.32 L753.48 224.66 L752.74 224.01 L752 223.35 L751.26 222.71 L750.52 222.06 L749.78 221.42 L749.04 220.78 L748.3 220.15 L747.56 219.51 L746.82 218.89 L746.08 218.26 L745.34 217.64 L744.6 217.03 L743.86 216.41 L743.12 215.8 L742.38 215.2 L741.64 214.6 L740.9 214 L740.15 213.4 L739.41 212.81 L738.67 212.23 L737.92 211.65 L737.18 211.07 L736.43 210.49 L735.69 209.93 L734.94 209.36 L734.19 208.8 L733.44 208.24 L732.69 207.69 L731.94 207.14 L731.18 206.6 L730.43 206.06 L729.67 205.53 L728.91 205 L728.15 204.47 L727.39 203.95 L726.63 203.44 L725.86 202.92 L725.1 202.42 L724.33 201.92 L723.55 201.42 L722.78 200.93 L722 200.44 L721.23 199.96 L720.44 199.49 L719.66 199.02 L718.87 198.55 L718.08 198.09 L717.29 197.64 L716.5 197.19 L715.7 196.74 L714.9 196.3 L714.09 195.87 L713.28 195.44 L712.47 195.02 L711.66 194.6 L710.84 194.19 L710.01 193.79 L709.19 193.39 L708.36 193 L707.52 192.61 L706.68 192.23 L705.84 191.85 L704.99 191.48 L704.14 191.12 L703.28 190.76 L702.42 190.41 L701.55 190.06 L700.68 189.72 L699.81 189.39 L698.92 189.06 L698.04 188.74 L697.15 188.43 L696.25 188.12 L695.35 187.82 L694.44 187.53 L693.52 187.24 L692.6 186.96 L691.68 186.68 L690.74 186.41 L689.81 186.15 L688.86 185.9 L687.91 185.65 L686.95 185.41 L685.99 185.17 L685.02 184.95 L684.04 184.73 L683.06 184.51 L682.06 184.3 L681.07 184.1 L680.06 183.91 L679.05 183.73 L678.03 183.55 L677 183.38 L675.96 183.21 L674.92 183.05 L673.87 182.9 L672.81 182.76 L671.75 182.62 L670.67 182.49 L669.59 182.37 L668.5 182.26 L667.4 182.15 L666.29 182.05 L665.18 181.96 L664.06 181.87 L662.92 181.8 L661.78 181.73 L660.63 181.66 L659.48 181.61 L658.31 181.56 L657.13 181.52 L655.95 181.48 L654.76 181.46 L653.55 181.44 L652.34 181.43 L651.12 181.42 L649.89 181.43 L648.65 181.44 L647.4 181.46 L646.15 181.48 L644.88 181.51 L643.6 181.55 L642.32 181.6 L641.02 181.66 L639.72 181.72 L638.41 181.79 L637.08 181.87 L635.75 181.95 L634.41 182.04 L633.06 182.14 L631.7 182.25 L630.33 182.36 L628.95 182.48 L627.56 182.61 L626.16 182.75 L624.75 182.89 L623.33 183.04 L621.9 183.19 L620.47 183.36 L619.02 183.53 L617.57 183.71 L616.1 183.89 L614.63 184.08 L613.14 184.28 L611.65 184.49 L610.15 184.7 L608.64 184.92 L607.11 185.15 L605.58 185.38 L604.05 185.62 L602.5 185.87 L600.94 186.13 L599.38 186.39 L597.8 186.65 L596.22 186.93 L594.63 187.21 L593.03 187.5 L591.42 187.79 L589.8 188.09 L588.17 188.4 L586.54 188.71 L584.89 189.03 L583.24 189.36 L581.59 189.69 L579.92 190.03 L578.24 190.37 L576.56 190.72 L574.87 191.08 L573.17 191.44 L571.47 191.81 L569.75 192.19 L568.03 192.57 L566.31 192.96 L564.57 193.35 L562.83 193.75 L561.08 194.15 L559.33 194.56 L557.56 194.98 L555.8 195.4 L554.02 195.83 L552.24 196.26 L550.45 196.7 L548.66 197.14 L546.86 197.59 L545.06 198.05 L543.24 198.51 L541.43 198.97 L539.61 199.44 L537.78 199.92 L535.95 200.4 L534.11 200.88 L532.27 201.37 L530.42 201.87 L528.57 202.37 L526.72 202.87 L524.86 203.38 L522.99 203.9 L521.12 204.42 L519.25 204.94 L517.38 205.47 L515.5 206.01 L513.62 206.55 L511.73 207.09 L509.84 207.64 L507.95 208.19 L506.05 208.74 L504.16 209.3 L502.26 209.87 L500.35 210.44 L498.45 211.01 L496.54 211.59 L494.63 212.17 L492.72 212.76 L490.81 213.34 L488.89 213.94 L486.98 214.54 L485.06 215.14 L483.15 215.74 L481.23 216.35 L479.31 216.96 L477.39 217.58 L475.47 218.2 L473.55 218.82 L471.63 219.45 L469.7 220.08 L467.78 220.72 L465.86 221.36 L463.94 222 L462.02 222.64 L460.1 223.29 L458.19 223.94 L456.27 224.6 L454.35 225.25 L452.44 225.91 L450.53 226.58 L448.62 227.25 L446.71 227.92 L444.8 228.59 L442.89 229.27 L440.99 229.95 L439.09 230.63 L437.19 231.31 L435.29 232 L433.4 232.69 L431.51 233.39 L429.62 234.08 L427.74 234.78 L425.86 235.48 L423.98 236.19 L422.11 236.89 L420.24 237.6"/>
</g>
<g fill="none" stroke="#666" stroke-width="1.389">
<path d="M523.3 238.2 L532.7 235.6"/>
<path d="M456 257.8 L453.8 268.4"/>
<path d="M618.9 264.4 L623.3 266.7"/>
<path d="M584 286.2 L590.7 287.3"/>
<path d="M487.8 305.8 L497.8 308"/>
<path d="M611.1 327.8 L606.7 336"/>
<path d="M455 365 L448.3 362.5"/>
<path d="M476.7 358.3 L492.5 369.2"/>
<path d="M850 252.2 L850 239.3"/>
<path d="M862.2 248.4 L864.9 243.3"/>
<path d="M875.6 279.6 L877.8 286.2"/>
<path d="M876.9 340.7 L880.9 343.8"/>
</g>
<g fill="none" stroke="#dd11ff" stroke-width="2.083" stroke-linecap="square">
<path d="M1080 95.81 L1077.91 95.07 L1075.82 94.32 L1073.73 93.57 L1071.65 92.8 L1069.58 92.04 L1067.52 91.26 L1065.47 90.49 L1063.43 89.71 L1061.41 88.93 L1059.4 88.14 L1057.41 87.35 L1055.44 86.56 L1053.49 85.78 L1051.57 84.99 L1049.67 84.2 L1047.8 83.42 L1045.96 82.64 L1044.15 81.86 L1042.37 81.09 L1040.63 80.33 L1038.93 79.57 L1037.28 78.82 L1035.66 78.08 L1034.1 77.35 L1032.58 76.63 L1031.12 75.92 L1029.71 75.23 L1028.36 74.55 L1027.08 73.89 L1025.86 73.25 L1024.71 72.62 L1023.63 72.02 L1022.62 71.44 L1021.7 70.88 L1020.86 70.35 L1020.1 69.84 L1019.44 69.37 L1018.87 68.92 L1018.39 68.5 L1018.02 68.12 L1017.75 67.76 L1017.59 67.45 L1017.53 67.17 L1017.59 66.92 L1017.76 66.71 L1018.04 66.54 L1018.45 66.41 L1018.97 66.32 L1019.61 66.27 L1020.36 66.26 L1021.24 66.29 L1022.24 66.36 L1023.35 66.47 L1024.57 66.62 L1025.91 66.81"/>
<path d="M777.1 67.04 L777.03 67.3 L776.85 67.6 L776.55 67.94 L776.14 68.3 L775.62 68.71 L775 69.14 L774.27 69.6 L773.44 70.09 L772.52 70.61 L771.51 71.16 L770.41 71.73 L769.22 72.32 L767.96 72.93 L766.63 73.56 L765.22 74.22 L763.74 74.89 L762.2 75.57 L760.6 76.27 L758.94 76.98 L757.23 77.71 L755.47 78.45 L753.66 79.19 L751.8 79.95 L749.9 80.71 L747.96 81.48 L745.99 82.25 L743.98 83.03 L741.94 83.81 L739.87 84.6 L737.78 85.38 L735.66 86.17 L733.51 86.96 L731.35 87.75 L729.17 88.53 L726.97 89.32 L724.76 90.1 L722.53 90.88 L720.3 91.65 L718.06 92.42 L715.81 93.19 L713.55 93.95 L711.29 94.7 L709.03 95.44 L706.77 96.18 L704.51 96.91 L702.25 97.64 L699.99 98.35 L697.74 99.05 L695.5 99.75 L693.27 100.43 L691.04 101.11 L688.83 101.77 L686.63 102.43 L684.44 103.07 L682.27 103.7 L680.11 104.31 L677.97 104.92 L675.85 105.51 L673.75 106.09 L671.67 106.65 L669.61 107.2 L667.57 107.74 L665.56 108.26 L663.57 108.77 L661.61 109.26 L659.68 109.74 L657.78 110.2 L655.9 110.65 L654.06 111.08 L652.25 111.5 L650.47 111.9 L648.72 112.28 L647.01 112.65 L645.34 113 L643.7 113.33 L642.1 113.65 L640.53 113.95 L639.01 114.23 L637.53 114.5"/>
<path d="M1167.91 114.74 L1167.8 114.97 L1167.63 115.19 L1167.4 115.38 L1167.12 115.56 L1166.79 115.72 L1166.4 115.86 L1165.96 115.98 L1165.46 116.09 L1164.92 116.17 L1164.32 116.24 L1163.67 116.29 L1162.96 116.32 L1162.21 116.34 L1161.41 116.33 L1160.56 116.31 L1159.67 116.27 L1158.72 116.21 L1157.73 116.13 L1156.7 116.04 L1155.62 115.92 L1154.5 115.79 L1153.33 115.64 L1152.12 115.47 L1150.87 115.29 L1149.58 115.08 L1148.26 114.86 L1146.89 114.62 L1145.48 114.37 L1144.04 114.09 L1142.56 113.8 L1141.04 113.49 L1139.5 113.17 L1137.91 112.83 L1136.3 112.47 L1134.65 112.09 L1132.98 111.7 L1131.27 111.29 L1129.54 110.87 L1127.77 110.43 L1125.99 109.97 L1124.17 109.5 L1122.33 109.02 L1120.47 108.52 L1118.59 108 L1116.68 107.47 L1114.75 106.93 L1112.81 106.37 L1110.84 105.8 L1108.86 105.21 L1106.87 104.62 L1104.85 104.01 L1102.83 103.38 L1100.79 102.75 L1098.74 102.1 L1096.68 101.44 L1094.61 100.77 L1092.54 100.09 L1090.46 99.4 L1088.37 98.7 L1086.28 97.99 L1084.19 97.28 L1082.09 96.55 L1080 95.81"/>
</g>
<g fill="none" stroke="#a4ff28" stroke-width="2.083" stroke-linecap="square">
<path d="M482.94 306.72 L483.08 305.94 L483.25 305.15 L483.45 304.36 L483.68 303.58 L483.95 302.8 L484.24 302.02 L484.57 301.24 L484.92 300.48 L485.31 299.71 L485.72 298.96 L486.16 298.21 L486.63 297.47 L487.13 296.74 L487.65 296.02 L488.2 295.31 L488.78 294.61 L489.37 293.92 L489.99 293.24 L490.64 292.58 L491.3 291.93 L491.98 291.3 L492.69 290.68 L493.41 290.07 L494.14 289.49 L494.9 288.91 L495.66 288.36 L496.45 287.83 L497.24 287.31 L498.05 286.82 L498.86 286.34 L499.69 285.88 L500.52 285.45 L501.36 285.03 L502.2 284.64 L503.05 284.27 L503.91 283.92 L504.76 283.59 L505.62 283.29 L506.47 283.01 L507.33 282.76 L508.18 282.53 L509.03 282.32 L509.88 282.14 L510.72 281.98 L511.55 281.85 L512.38 281.74 L513.2 281.66 L514.01 281.6 L514.81 281.57 L515.6 281.56 L516.38 281.58 L517.15 281.63 L517.91 281.7 L518.65 281.79 L519.37 281.91 L520.09 282.06 L520.79 282.23 L521.47 282.42 L522.13 282.64 L522.78 282.88 L523.41 283.15 L524.03 283.44 L524.62 283.75 L525.2 284.09 L525.76 284.45 L526.3 284.83 L526.83 285.24 L527.33 285.66 L527.81 286.11 L528.27 286.57 L528.72 287.06 L529.14 287.57 L529.54 288.09 L529.93 288.64 L530.29 289.2 L530.63 289.78 L530.96 290.37 L531.26 290.98 L531.54 291.61 L531.8 292.25 L532.05 292.91 L532.27 293.58 L532.47 294.26 L532.65 294.95 L532.82 295.66 L532.96 296.38 L533.08 297.1 L533.19 297.84 L533.27 298.58 L533.34 299.34 L533.38 300.09 L533.41 300.86 L533.42 301.63 L533.41 302.41 L533.38 303.19 L533.33 303.97 L533.26 304.75 L533.18 305.54 L533.08 306.33 L532.96 307.12 L532.82 307.9 L532.66 308.69 L532.48 309.47 L532.29 310.26 L532.08 311.03 L531.85 311.81 L531.61 312.57 L531.35 313.33 L531.07 314.09 L530.77 314.84 L530.46 315.58 L530.13 316.31 L529.78 317.03 L529.42 317.74 L529.04 318.44 L528.64 319.13 L528.23 319.8 L527.8 320.46 L527.36 321.11 L526.9 321.75 L526.42 322.37 L525.93 322.97 L525.43 323.56 L524.91 324.13 L524.37 324.68 L523.82 325.22 L523.25 325.74 L522.67 326.23 L522.08 326.71 L521.47 327.17 L520.85 327.61 L520.22 328.03 L519.57 328.43 L518.91 328.8 L518.24 329.16 L517.56 329.49 L516.87 329.79 L516.16 330.08 L515.45 330.34 L514.72 330.58 L513.99 330.8 L513.25 330.99 L512.5 331.15 L511.74 331.29 L510.98 331.41 L510.21 331.51 L509.43 331.57 L508.65 331.62 L507.86 331.64 L507.07 331.63 L506.28 331.6 L505.49 331.54 L504.69 331.46 L503.9 331.36 L503.11 331.23 L502.31 331.07 L501.52 330.89 L500.74 330.69 L499.96 330.46 L499.18 330.21 L498.41 329.94 L497.65 329.64 L496.89 329.32 L496.15 328.98 L495.41 328.62 L494.69 328.23 L493.98 327.82 L493.28 327.39 L492.6 326.95 L491.93 326.48 L491.28 325.99 L490.64 325.48 L490.02 324.95 L489.43 324.41 L488.85 323.85 L488.29 323.27 L487.76 322.67 L487.25 322.06 L486.76 321.43 L486.29 320.79 L485.85 320.13 L485.44 319.46 L485.06 318.78 L484.7 318.09 L484.37 317.38 L484.07 316.67 L483.79 315.94 L483.55 315.21 L483.34 314.46 L483.16 313.71 L483 312.95 L482.89 312.19 L482.8 311.42 L482.74 310.64 L482.72 309.87 L482.73 309.08 L482.77 308.3 L482.84 307.51 L482.94 306.72"/>
</g>
<g fill="none" stroke="#ffb20d" stroke-width="2.083" stroke-linecap="square">
<path d="M842.2 114.31 L842.49 113.54 L842.8 112.78 L843.15 112 L843.52 111.23 L843.92 110.45 L844.34 109.66 L844.8 108.88 L845.28 108.09 L845.78 107.3 L846.32 106.51 L846.87 105.73 L847.45 104.94 L848.06 104.16 L848.69 103.38 L849.34 102.6 L850.01 101.83 L850.71 101.07 L851.42 100.31 L852.15 99.56 L852.91 98.82 L853.68 98.09 L854.46 97.37 L855.26 96.66 L856.08 95.96 L856.91 95.28 L857.75 94.61 L858.6 93.96 L859.46 93.33 L860.33 92.72 L861.21 92.12 L862.09 91.55 L862.98 90.99 L863.87 90.47 L864.77 89.96 L865.66 89.48 L866.56 89.02 L867.46 88.6 L868.35 88.2 L869.24 87.83 L870.13 87.48 L871.01 87.17 L871.89 86.9 L872.75 86.65 L873.61 86.43 L874.46 86.25 L875.3 86.11 L876.13 85.99 L876.95 85.92 L877.75 85.87 L878.54 85.86 L879.32 85.89 L880.08 85.95 L880.83 86.05 L881.57 86.18 L882.28 86.34 L882.98 86.54 L883.67 86.77 L884.33 87.03 L884.98 87.33 L885.61 87.65 L886.22 88.01 L886.81 88.39 L887.39 88.81 L887.94 89.25 L888.47 89.72 L888.99 90.21 L889.48 90.73 L889.95 91.27 L890.4 91.83 L890.83 92.42 L891.24 93.02 L891.62 93.65 L891.99 94.29 L892.32 94.95 L892.64 95.62 L892.94 96.31 L893.21 97.01 L893.45 97.72 L893.68 98.45 L893.88 99.19 L894.05 99.93 L894.2 100.69 L894.33 101.45 L894.43 102.22 L894.51 102.99 L894.56 103.77 L894.59 104.55 L894.59 105.33 L894.57 106.12 L894.53 106.91 L894.46 107.69 L894.36 108.48 L894.24 109.27 L894.1 110.05 L893.93 110.84 L893.74 111.62 L893.53 112.39 L893.29 113.16 L893.03 113.93 L892.74 114.69 L892.43 115.44 L892.1 116.19 L891.75 116.92 L891.37 117.65 L890.98 118.38 L890.56 119.09 L890.12 119.79 L889.66 120.48 L889.18 121.17 L888.68 121.84 L888.17 122.5 L887.63 123.15 L887.07 123.78 L886.5 124.4 L885.91 125.01 L885.31 125.61 L884.68 126.19 L884.04 126.76 L883.39 127.31 L882.72 127.85 L882.04 128.38 L881.35 128.89 L880.64 129.38 L879.92 129.85 L879.19 130.31 L878.45 130.76 L877.7 131.18 L876.94 131.59 L876.17 131.98 L875.39 132.36 L874.61 132.72 L873.82 133.05 L873.02 133.38 L872.22 133.68 L871.41 133.96 L870.6 134.23 L869.79 134.47 L868.97 134.7 L868.15 134.91 L867.33 135.1 L866.51 135.27 L865.7 135.42 L864.88 135.55 L864.07 135.67 L863.25 135.76 L862.45 135.83 L861.64 135.89 L860.84 135.92 L860.05 135.94 L859.26 135.93 L858.48 135.91 L857.71 135.86 L856.95 135.8 L856.2 135.72 L855.46 135.61 L854.72 135.49 L854 135.35 L853.3 135.19 L852.6 135.01 L851.92 134.81 L851.25 134.59 L850.6 134.35 L849.97 134.1 L849.35 133.82 L848.75 133.53 L848.16 133.22 L847.6 132.89 L847.05 132.54 L846.52 132.17 L846.02 131.79 L845.53 131.39 L845.07 130.97 L844.62 130.54 L844.2 130.09 L843.81 129.62 L843.43 129.13 L843.09 128.63 L842.76 128.12 L842.46 127.59 L842.19 127.04 L841.94 126.48 L841.72 125.9 L841.52 125.31 L841.35 124.71 L841.21 124.09 L841.09 123.47 L841.01 122.82 L840.95 122.17 L840.92 121.5 L840.92 120.83 L840.95 120.14 L841 119.44 L841.09 118.73 L841.2 118.02 L841.34 117.29 L841.51 116.56 L841.71 115.81 L841.94 115.06 L842.2 114.31"/>
</g>
<g fill="none" stroke="#dd11ff" stroke-width="1.389" stroke-dasharray="1.389 2.292">
<path d="M584.9 232.7 L585.12 232.24 L585.34 231.77 L585.56 231.31 L585.78 230.84 L586 230.38 L586.23 229.91 L586.46 229.45 L586.69 228.99 L586.92 228.52 L587.15 228.06 L587.39 227.59 L587.63 227.13 L587.87 226.67 L588.11 226.2 L588.35 225.74 L588.59 225.28 L588.84 224.81 L589.09 224.35 L589.34 223.89 L589.59 223.43 L589.85 222.96 L590.1 222.5 L590.36 222.04 L590.62 221.58 L590.88 221.11 L591.14 220.65 L591.41 220.19 L591.67 219.73 L591.94 219.27 L592.21 218.81 L592.48 218.34 L592.76 217.88 L593.03 217.42 L593.31 216.96 L593.59 216.5 L593.87 216.04 L594.15 215.58 L594.44 215.12 L594.72 214.66 L595.01 214.2 L595.3 213.74 L595.59 213.28 L595.88 212.82 L596.18 212.36 L596.47 211.9 L596.77 211.44 L597.07 210.98 L597.37 210.52 L597.68 210.06 L597.98 209.6 L598.29 209.14 L598.59 208.68 L598.9 208.22 L599.22 207.77 L599.53 207.31 L599.84 206.85 L600.16 206.39 L600.48 205.93 L600.8 205.48 L601.12 205.02 L601.44 204.56 L601.77 204.1 L602.09 203.65 L602.42 203.19 L602.75 202.73 L603.08 202.28 L603.41 201.82 L603.75 201.36 L604.08 200.91 L604.42 200.45 L604.76 200 L605.1 199.54 L605.44 199.08 L605.78 198.63 L606.13 198.17 L606.48 197.72 L606.82 197.26 L607.17 196.81 L607.53 196.36 L607.88 195.9 L608.23 195.45 L608.59 194.99 L608.95 194.54 L609.3 194.09 L609.66 193.63 L610.03 193.18 L610.39 192.73 L610.75 192.27 L611.12 191.82 L611.49 191.37 L611.86 190.92 L612.23 190.47 L612.6 190.01 L612.97 189.56 L613.35 189.11 L613.72 188.66 L614.1 188.21 L614.48 187.76 L614.86 187.31 L615.24 186.86 L615.63 186.41 L616.01 185.96 L616.4 185.51 L616.78 185.06 L617.17 184.61 L617.56 184.16 L617.95 183.71 L618.35 183.26 L618.74 182.82 L619.13 182.37 L619.53 181.92 L619.93 181.47 L620.33 181.03 L620.73 180.58 L621.13 180.13 L621.53 179.69 L621.94 179.24 L622.34 178.79 L622.75 178.35 L623.16 177.9 L623.56 177.46 L623.97 177.01 L624.39 176.57 L624.8 176.12 L625.21 175.68 L625.63 175.24 L626.04 174.79 L626.46 174.35 L626.88 173.91 L627.3 173.46 L627.72 173.02 L628.14 172.58 L628.56 172.14 L628.99 171.7 L629.41 171.25 L629.84 170.81 L630.26 170.37 L630.69 169.93 L631.12 169.49 L631.55 169.05 L631.98 168.61 L632.41 168.18 L632.85 167.74 L633.28 167.3 L633.72 166.86 L634.15 166.42 L634.59 165.99 L635.03 165.55 L635.47 165.11 L635.91 164.68 L636.35 164.24 L636.79 163.8 L637.23 163.37 L637.67 162.93 L638.12 162.5 L638.56 162.06 L639.01 161.63 L639.46 161.2 L639.9 160.76 L640.35 160.33 L640.8 159.9 L641.25 159.47 L641.7 159.04 L642.15 158.61 L642.6 158.17 L643.06 157.74 L643.51 157.31 L643.96 156.88 L644.42 156.46 L644.88 156.03 L645.33 155.6 L645.79 155.17 L646.25 154.74 L646.7 154.32 L647.16 153.89 L647.62 153.46 L648.08 153.04 L648.54 152.61 L649 152.19 L649.46 151.77 L649.92 151.34 L650.39 150.92 L650.85 150.5 L651.31 150.07 L651.77 149.65 L652.24 149.23 L652.7 148.81 L653.17 148.39 L653.63 147.97 L654.1 147.55 L654.56 147.13 L655.03 146.72 L655.49 146.3 L655.96 145.88 L656.43 145.46 L656.89 145.05 L657.36 144.63 L657.83 144.22 L658.3 143.8 L658.76 143.39 L659.23 142.98 L659.7 142.57 L660.17 142.15 L660.64 141.74 L661.1 141.33 L661.57 140.92 L662.04 140.51 L662.51 140.1 L662.98 139.7 L663.44 139.29 L663.91 138.88 L664.38 138.48 L664.85 138.07 L665.31 137.67 L665.78 137.26 L666.25 136.86 L666.72 136.46 L667.18 136.05 L667.65 135.65 L668.11 135.25 L668.58 134.85 L669.05 134.45 L669.51 134.05 L669.97 133.66 L670.44 133.26 L670.9 132.86 L671.37 132.47 L671.83 132.07 L672.29 131.68 L672.75 131.29 L673.21 130.9 L673.67 130.51 L674.13 130.11 L674.59 129.73 L675.05 129.34 L675.51 128.95 L675.96 128.56 L676.42 128.18 L676.88 127.79 L677.33 127.41 L677.78 127.02 L678.24 126.64 L678.69 126.26 L679.14 125.88 L679.59 125.5 L680.03 125.12 L680.48 124.74 L680.93 124.37 L681.37 123.99 L681.82 123.62 L682.26 123.24 L682.7 122.87 L683.14 122.5 L683.58 122.13 L684.01 121.76 L684.45 121.39 L684.88 121.03 L685.32 120.66 L685.75 120.3 L686.18 119.93 L686.6 119.57 L687.03 119.21 L687.45 118.85 L687.88 118.49 L688.3 118.13 L688.72 117.78 L689.13 117.42 L689.55 117.07 L689.96 116.71 L690.37 116.36 L690.78 116.01 L691.19 115.66 L691.59 115.32 L691.99 114.97 L692.39 114.63 L692.79 114.28 L693.18 113.94 L693.58 113.6 L693.97 113.26 L694.35 112.92 L694.74 112.59 L695.12 112.25 L695.5 111.92 L695.88 111.59 L696.25 111.26 L696.62 110.93 L696.99 110.6 L697.35 110.28 L697.72 109.95 L698.07 109.63 L698.43 109.31 L698.78 108.99 L699.13 108.68 L699.48 108.36 L699.82 108.05 L700.16 107.74 L700.49 107.43 L700.82 107.12 L701.15 106.81 L701.47 106.51 L701.79 106.2 L702.11 105.9 L702.42 105.6 L702.73 105.31 L703.03 105.01 L703.33 104.72 L703.63 104.43 L703.92 104.14 L704.2 103.85 L704.48 103.57 L704.76 103.28 L705.03 103 L705.3 102.73 L705.56 102.45 L705.82 102.17 L706.08 101.9 L706.32 101.63 L706.57 101.36 L706.8 101.1 L707.03 100.84 L707.26 100.58 L707.48 100.32 L707.7 100.06 L707.91 99.81 L708.11 99.56 L708.31 99.31 L708.5 99.06 L708.69 98.82 L708.87 98.58 L709.04 98.34 L709.21 98.1 L709.37 97.87 L709.53 97.64 L709.67 97.41 L709.82 97.18 L709.95 96.96 L710.08 96.74 L710.2 96.52 L710.31 96.31 L710.42 96.1 L710.52 95.89 L710.61 95.68 L710.7 95.48 L710.77 95.28 L710.84 95.08 L710.9 94.88 L710.96 94.69 L711 94.5 L711.04 94.32 L711.07 94.14 L711.09 93.96 L711.11 93.78 L711.11 93.61 L711.11 93.44 L711.1 93.27 L711.07 93.11 L711.04 92.95 L711.01 92.79 L710.96 92.64 L710.9 92.49 L710.84 92.34 L710.76 92.2 L710.68 92.06 L710.58 91.92 L710.48 91.79 L710.37 91.65 L710.24 91.53 L710.11 91.41 L709.97 91.29 L709.82 91.17 L709.65 91.06 L709.48 90.95 L709.3 90.84 L709.1 90.74 L708.9 90.64 L708.68 90.55 L708.46 90.46 L708.22 90.37 L707.98 90.29 L707.72 90.21 L707.45 90.13"/>
<path d="M1096.48 90.06 L1095.78 89.99 L1095.09 89.92 L1094.41 89.86 L1093.75 89.8 L1093.09 89.75 L1092.45 89.7 L1091.82 89.65 L1091.2 89.61 L1090.59 89.57 L1089.99 89.54 L1089.4 89.51 L1088.82 89.48 L1088.26 89.46 L1087.7 89.44 L1087.16 89.42 L1086.62 89.41 L1086.1 89.4"/>
</g>
<path d="M584.9 232.7 L584.79 232.97 L584.68 233.24 L584.57 233.5 L584.46 233.77 L584.35 234.04 L584.24 234.31 L584.14 234.58 L584.03 234.85 L583.92 235.11 L583.82 235.38 L583.71 235.65 L583.61 235.92 L583.51 236.19 L583.4 236.46 L583.3 236.73 L583.2 236.99 L583.1 237.26 L583 237.53 L582.9 237.8" fill="none" stroke="#dd11ff" stroke-width="1.389"/>
<path d="M581.6 237.8h2.6M582.9 236.5v2.6" stroke="#ff6347" stroke-width="1.1" fill="none"/>
<path d="M1083 89.4h6.2M1086.1 86.3v6.2" stroke="#f00" stroke-width="1.2" fill="none"/>
<g fill="none" stroke="#dd11ff" stroke-width="1.389" stroke-dasharray="1.389 2.292">
<path d="M611.6 228.9 L611.81 228.42 L612.01 227.95 L612.22 227.47 L612.43 226.99 L612.65 226.52 L612.86 226.04 L613.08 225.57 L613.3 225.09 L613.52 224.61 L613.74 224.14 L613.96 223.66 L614.19 223.19 L614.42 222.71 L614.65 222.24 L614.88 221.76 L615.11 221.29 L615.35 220.81 L615.58 220.34 L615.82 219.86 L616.06 219.39 L616.3 218.91 L616.54 218.44 L616.79 217.96 L617.04 217.49 L617.28 217.02 L617.53 216.54 L617.79 216.07 L618.04 215.6 L618.29 215.12 L618.55 214.65 L618.81 214.18 L619.07 213.7 L619.33 213.23 L619.6 212.76 L619.86 212.29 L620.13 211.81 L620.4 211.34 L620.67 210.87 L620.94 210.4 L621.21 209.92 L621.49 209.45 L621.76 208.98 L622.04 208.51 L622.32 208.04 L622.6 207.57 L622.89 207.1 L623.17 206.63 L623.46 206.15 L623.75 205.68 L624.04 205.21 L624.33 204.74 L624.62 204.27 L624.92 203.8 L625.21 203.33 L625.51 202.86 L625.81 202.4 L626.11 201.93 L626.41 201.46 L626.72 200.99 L627.02 200.52 L627.33 200.05 L627.64 199.58 L627.95 199.11 L628.26 198.65 L628.57 198.18 L628.89 197.71 L629.2 197.24 L629.52 196.78 L629.84 196.31 L630.16 195.84 L630.48 195.38 L630.81 194.91 L631.13 194.44 L631.46 193.98 L631.78 193.51 L632.11 193.05 L632.45 192.58 L632.78 192.12 L633.11 191.65 L633.45 191.19 L633.78 190.72 L634.12 190.26 L634.46 189.79 L634.8 189.33 L635.14 188.86 L635.49 188.4 L635.83 187.94 L636.18 187.47 L636.53 187.01 L636.87 186.55 L637.22 186.09 L637.58 185.62 L637.93 185.16 L638.28 184.7 L638.64 184.24 L639 183.78 L639.35 183.32 L639.71 182.86 L640.07 182.4 L640.44 181.93 L640.8 181.47 L641.16 181.01 L641.53 180.56 L641.9 180.1 L642.27 179.64 L642.63 179.18 L643.01 178.72 L643.38 178.26 L643.75 177.8 L644.12 177.35 L644.5 176.89 L644.88 176.43 L645.25 175.98 L645.63 175.52 L646.01 175.06 L646.39 174.61 L646.78 174.15 L647.16 173.7 L647.55 173.24 L647.93 172.79 L648.32 172.33 L648.71 171.88 L649.09 171.42 L649.48 170.97 L649.88 170.52 L650.27 170.06 L650.66 169.61 L651.05 169.16 L651.45 168.71 L651.85 168.26 L652.24 167.8 L652.64 167.35 L653.04 166.9 L653.44 166.45 L653.84 166 L654.24 165.55 L654.65 165.1 L655.05 164.66 L655.45 164.21 L655.86 163.76 L656.27 163.31 L656.67 162.86 L657.08 162.42 L657.49 161.97 L657.9 161.53 L658.31 161.08 L658.72 160.63 L659.13 160.19 L659.55 159.74 L659.96 159.3 L660.37 158.86 L660.79 158.41 L661.2 157.97 L661.62 157.53 L662.04 157.09 L662.46 156.64 L662.87 156.2 L663.29 155.76 L663.71 155.32 L664.13 154.88 L664.55 154.44 L664.98 154.01 L665.4 153.57 L665.82 153.13 L666.24 152.69 L666.67 152.25 L667.09 151.82 L667.52 151.38 L667.94 150.95 L668.37 150.51 L668.79 150.08 L669.22 149.64 L669.65 149.21 L670.07 148.78 L670.5 148.34 L670.93 147.91 L671.36 147.48 L671.79 147.05 L672.22 146.62 L672.65 146.19 L673.08 145.76 L673.5 145.33 L673.93 144.91 L674.37 144.48 L674.8 144.05 L675.23 143.63 L675.66 143.2 L676.09 142.78 L676.52 142.35 L676.95 141.93 L677.38 141.51 L677.81 141.08 L678.24 140.66 L678.68 140.24 L679.11 139.82 L679.54 139.4 L679.97 138.98 L680.4 138.56 L680.83 138.15 L681.26 137.73 L681.69 137.31 L682.12 136.9 L682.55 136.48 L682.98 136.07 L683.41 135.66 L683.84 135.24 L684.27 134.83 L684.7 134.42 L685.13 134.01 L685.56 133.6 L685.99 133.19 L686.41 132.78 L686.84 132.38 L687.27 131.97 L687.69 131.57 L688.12 131.16 L688.54 130.76 L688.97 130.36 L689.39 129.95 L689.82 129.55 L690.24 129.15 L690.66 128.75 L691.08 128.36 L691.5 127.96 L691.92 127.56 L692.34 127.17 L692.75 126.77 L693.17 126.38 L693.59 125.99 L694 125.59 L694.42 125.2 L694.83 124.81 L695.24 124.43 L695.65 124.04 L696.06 123.65 L696.47 123.27 L696.87 122.88 L697.28 122.5 L697.68 122.12 L698.09 121.74 L698.49 121.36 L698.89 120.98 L699.28 120.6 L699.68 120.23 L700.08 119.85 L700.47 119.48 L700.86 119.11 L701.25 118.73 L701.64 118.36 L702.03 118 L702.41 117.63 L702.8 117.26 L703.18 116.9 L703.56 116.53 L703.93 116.17 L704.31 115.81 L704.68 115.45 L705.05 115.09 L705.42 114.74 L705.79 114.38 L706.15 114.03 L706.51 113.68 L706.87 113.33 L707.23 112.98 L707.58 112.63 L707.94 112.28 L708.28 111.94 L708.63 111.6 L708.97 111.26 L709.31 110.92 L709.65 110.58 L709.99 110.24 L710.32 109.91 L710.65 109.57 L710.97 109.24 L711.3 108.91 L711.61 108.59 L711.93 108.26 L712.24 107.94 L712.55 107.61 L712.86 107.29 L713.16 106.98 L713.46 106.66 L713.75 106.34 L714.04 106.03 L714.33 105.72 L714.61 105.41 L714.89 105.11 L715.16 104.8 L715.44 104.5 L715.7 104.2 L715.96 103.9 L716.22 103.6 L716.47 103.31 L716.72 103.02 L716.97 102.73 L717.2 102.44 L717.44 102.16 L717.67 101.87 L717.89 101.59 L718.11 101.31 L718.33 101.04 L718.53 100.76 L718.74 100.49 L718.94 100.22 L719.13 99.96 L719.32 99.7 L719.5 99.43 L719.67 99.18 L719.84 98.92 L720.01 98.67 L720.16 98.42 L720.32 98.17 L720.46 97.92 L720.6 97.68 L720.73 97.44 L720.86 97.2 L720.98 96.97 L721.09 96.74 L721.2 96.51 L721.29 96.28 L721.39 96.06 L721.47 95.84 L721.55 95.63 L721.62 95.41 L721.68 95.2 L721.74 94.99 L721.78 94.79 L721.82 94.59 L721.86 94.39 L721.88 94.2 L721.9 94 L721.9 93.82 L721.9 93.63 L721.9 93.45 L721.88 93.27 L721.85 93.09 L721.82 92.92 L721.78 92.75 L721.72 92.59 L721.66 92.43 L721.59 92.27 L721.51 92.11 L721.43 91.96 L721.33 91.82 L721.22 91.67 L721.1 91.53 L720.98 91.39 L720.84 91.26 L720.7 91.13 L720.54 91.01 L720.38 90.88 L720.2 90.77 L720.01 90.65 L719.82 90.54 L719.61 90.43 L719.39 90.33 L719.16 90.23 L718.93 90.14 L718.68 90.04 L718.42 89.96 L718.15 89.87 L717.86 89.79 L717.57 89.72 L717.27 89.65 L716.95 89.58 L716.62 89.51 L716.29 89.45 L715.94 89.4 L715.58 89.34 L715.2 89.3 L714.82 89.25 L714.42 89.21 L714.02 89.18 L713.6 89.14 L713.17 89.12 L712.72 89.09 L712.27 89.07 L711.8 89.06 L711.32 89.05 L710.83 89.04"/>
<path d="M1093.58 89.04 L1093.07 89.04 L1092.57 89.04 L1092.08 89.05 L1091.61 89.06 L1091.14 89.08 L1090.69 89.1 L1090.25 89.13 L1089.82 89.16 L1089.41 89.19 L1089 89.23 L1088.61 89.27 L1088.23 89.31 L1087.86 89.36 L1087.5 89.42 L1087.16 89.47 L1086.82 89.53 L1086.5 89.6"/>
</g>
<path d="M611.6 228.9 L611.31 229.57 L611.02 230.23 L610.74 230.9 L610.46 231.57 L610.18 232.24 L609.91 232.9 L609.64 233.57 L609.38 234.24 L609.12 234.91 L608.86 235.58 L608.6 236.25 L608.35 236.91 L608.11 237.58 L607.86 238.25 L607.62 238.92 L607.39 239.59 L607.15 240.26 L606.93 240.93 L606.7 241.6" fill="none" stroke="#dd11ff" stroke-width="1.389"/>
<path d="M605.4 241.6h2.6M606.7 240.3v2.6" stroke="#ff6347" stroke-width="1.1" fill="none"/>
<path d="M1083.4 89.6h6.2M1086.5 86.5v6.2" stroke="#f00" stroke-width="1.2" fill="none"/>
<g fill="none" stroke="#dd11ff" stroke-width="1.389" stroke-dasharray="1.389 2.292">
<path d="M551.8 277.8 L551.81 277.25 L551.82 276.7 L551.84 276.15 L551.86 275.6 L551.88 275.05 L551.91 274.5 L551.94 273.95 L551.97 273.4 L552 272.85 L552.04 272.3 L552.08 271.76 L552.13 271.21 L552.17 270.66 L552.22 270.11 L552.28 269.56 L552.33 269.01 L552.39 268.46 L552.45 267.91 L552.52 267.37 L552.58 266.82 L552.65 266.27 L552.73 265.72 L552.8 265.17 L552.88 264.62 L552.97 264.08 L553.05 263.53 L553.14 262.98 L553.23 262.43 L553.32 261.89 L553.42 261.34 L553.52 260.79 L553.62 260.24 L553.73 259.7 L553.84 259.15 L553.95 258.6 L554.07 258.06 L554.18 257.51 L554.3 256.96 L554.43 256.42 L554.55 255.87 L554.68 255.32 L554.81 254.78 L554.95 254.23 L555.09 253.68 L555.23 253.14 L555.37 252.59 L555.52 252.05 L555.67 251.5 L555.82 250.96 L555.98 250.41 L556.13 249.86 L556.29 249.32 L556.46 248.77 L556.62 248.23 L556.79 247.69 L556.97 247.14 L557.14 246.6 L557.32 246.05 L557.5 245.51 L557.68 244.96 L557.87 244.42 L558.06 243.88 L558.25 243.33 L558.45 242.79 L558.64 242.25 L558.84 241.7 L559.05 241.16 L559.25 240.62 L559.46 240.07 L559.67 239.53 L559.89 238.99 L560.1 238.45 L560.32 237.9 L560.55 237.36 L560.77 236.82 L561 236.28 L561.23 235.74 L561.46 235.2 L561.7 234.65 L561.94 234.11 L562.18 233.57 L562.42 233.03 L562.67 232.49 L562.92 231.95 L563.17 231.41 L563.43 230.87 L563.69 230.33 L563.95 229.79 L564.21 229.25 L564.48 228.71 L564.74 228.17 L565.01 227.63 L565.29 227.1 L565.56 226.56 L565.84 226.02 L566.12 225.48 L566.41 224.94 L566.69 224.4 L566.98 223.87 L567.27 223.33 L567.57 222.79 L567.87 222.25 L568.17 221.72 L568.47 221.18 L568.77 220.65 L569.08 220.11 L569.39 219.57 L569.7 219.04 L570.01 218.5 L570.33 217.97 L570.65 217.43 L570.97 216.9 L571.3 216.36 L571.62 215.83 L571.95 215.29 L572.28 214.76 L572.62 214.23 L572.95 213.69 L573.29 213.16 L573.64 212.63 L573.98 212.09 L574.33 211.56 L574.67 211.03 L575.02 210.5 L575.38 209.97 L575.73 209.43 L576.09 208.9 L576.45 208.37 L576.81 207.84 L577.18 207.31 L577.55 206.78 L577.91 206.25 L578.29 205.72 L578.66 205.19 L579.04 204.66 L579.41 204.14 L579.8 203.61 L580.18 203.08 L580.56 202.55 L580.95 202.02 L581.34 201.5 L581.73 200.97 L582.12 200.44 L582.52 199.92 L582.92 199.39 L583.32 198.86 L583.72 198.34 L584.13 197.81 L584.53 197.29 L584.94 196.77 L585.35 196.24 L585.76 195.72 L586.18 195.19 L586.59 194.67 L587.01 194.15 L587.43 193.63 L587.86 193.11 L588.28 192.58 L588.71 192.06 L589.14 191.54 L589.57 191.02 L590 190.5 L590.43 189.98 L590.87 189.46 L591.31 188.94 L591.75 188.42 L592.19 187.91 L592.63 187.39 L593.08 186.87 L593.52 186.35 L593.97 185.84 L594.42 185.32 L594.87 184.81 L595.33 184.29 L595.78 183.78 L596.24 183.26 L596.7 182.75 L597.16 182.23 L597.62 181.72 L598.09 181.21 L598.55 180.7 L599.02 180.19 L599.49 179.67 L599.96 179.16 L600.43 178.65 L600.9 178.14 L601.38 177.63 L601.85 177.13 L602.33 176.62 L602.81 176.11 L603.29 175.6 L603.77 175.09 L604.26 174.59 L604.74 174.08 L605.23 173.58 L605.71 173.07 L606.2 172.57 L606.69 172.07 L607.18 171.56 L607.68 171.06 L608.17 170.56 L608.66 170.06 L609.16 169.56 L609.66 169.06 L610.16 168.56 L610.65 168.06 L611.15 167.56 L611.66 167.06 L612.16 166.56 L612.66 166.07 L613.17 165.57 L613.67 165.08 L614.18 164.58 L614.69 164.09 L615.19 163.59 L615.7 163.1 L616.21 162.61 L616.72 162.12 L617.23 161.63 L617.75 161.14 L618.26 160.65 L618.77 160.16 L619.29 159.67 L619.8 159.19 L620.32 158.7 L620.83 158.21 L621.35 157.73 L621.87 157.24 L622.39 156.76 L622.9 156.28 L623.42 155.8 L623.94 155.32 L624.46 154.84 L624.98 154.36 L625.5 153.88 L626.02 153.4 L626.54 152.92 L627.06 152.45 L627.58 151.97 L628.1 151.5 L628.62 151.03 L629.15 150.55 L629.67 150.08 L630.19 149.61 L630.71 149.14 L631.23 148.67 L631.75 148.21 L632.27 147.74 L632.79 147.27 L633.31 146.81 L633.83 146.35 L634.35 145.88 L634.87 145.42 L635.39 144.96 L635.91 144.5 L636.43 144.04 L636.95 143.59 L637.46 143.13 L637.98 142.67 L638.5 142.22 L639.01 141.77 L639.53 141.31 L640.04 140.86 L640.55 140.41 L641.07 139.97 L641.58 139.52 L642.09 139.07 L642.6 138.63 L643.1 138.18 L643.61 137.74 L644.12 137.3 L644.62 136.86 L645.13 136.42 L645.63 135.99 L646.13 135.55 L646.63 135.12 L647.13 134.68 L647.62 134.25 L648.12 133.82 L648.61 133.39 L649.1 132.96 L649.59 132.54 L650.08 132.11 L650.56 131.69 L651.05 131.27 L651.53 130.85 L652.01 130.43 L652.49 130.01 L652.96 129.6 L653.44 129.18 L653.91 128.77 L654.38 128.36 L654.84 127.95 L655.31 127.55 L655.77 127.14 L656.22 126.74 L656.68 126.33 L657.13 125.93 L657.58 125.54 L658.03 125.14 L658.47 124.75 L658.91 124.35 L659.35 123.96 L659.79 123.57 L660.22 123.18 L660.65 122.8 L661.07 122.42 L661.49 122.04 L661.91 121.66 L662.32 121.28 L662.73 120.9 L663.13 120.53 L663.54 120.16 L663.93 119.79 L664.33 119.42 L664.72 119.06 L665.1 118.7 L665.48 118.34 L665.86 117.98 L666.23 117.62 L666.59 117.27 L666.95 116.92 L667.31 116.57 L667.66 116.23 L668.01 115.88 L668.35 115.54 L668.69 115.2 L669.02 114.87 L669.34 114.53 L669.66 114.2 L669.97 113.87 L670.28 113.55 L670.58 113.23 L670.88 112.91 L671.17 112.59 L671.45 112.27 L671.73 111.96 L672 111.65 L672.26 111.35 L672.52 111.04 L672.77 110.74 L673.01 110.45 L673.25 110.15 L673.48 109.86 L673.7 109.57 L673.92 109.29 L674.12 109 L674.32 108.72 L674.51 108.45 L674.7 108.18 L674.87 107.91 L675.04 107.64 L675.2 107.38 L675.35 107.12 L675.49 106.86 L675.63 106.61 L675.75 106.36 L675.87 106.11 L675.97 105.87 L676.07 105.63 L676.16 105.4 L676.24 105.17 L676.31 104.94 L676.37 104.71 L676.42 104.49 L676.46 104.28 L676.49 104.06 L676.51 103.85 L676.52 103.65 L676.52 103.45 L676.51 103.25 L676.49 103.05 L676.45 102.86 L676.41 102.68 L676.36 102.5 L676.29 102.32 L676.21 102.15 L676.12 101.98 L676.02 101.81 L675.91 101.65 L675.79 101.49 L675.65 101.34 L675.51 101.19 L675.35 101.04"/>
<path d="M1128.08 100.9 L1127.11 100.77 L1126.15 100.64 L1125.2 100.51 L1124.27 100.39 L1123.34 100.27 L1122.43 100.15 L1121.53 100.04 L1120.65 99.94 L1119.78 99.84 L1118.91 99.74 L1118.07 99.65 L1117.23 99.56 L1116.41 99.48 L1115.6 99.4"/>
</g>
<path d="M551.8 277.8 L551.8 278.59 L551.81 279.39 L551.82 280.18 L551.84 280.98 L551.87 281.77 L551.9 282.56 L551.94 283.36 L551.99 284.15 L552.04 284.95 L552.1 285.74 L552.16 286.54 L552.23 287.33 L552.31 288.13 L552.39 288.92 L552.48 289.72 L552.58 290.51 L552.68 291.31 L552.79 292.1 L552.9 292.9" fill="none" stroke="#dd11ff" stroke-width="1.389"/>
<path d="M551.6 292.9h2.6M552.9 291.6v2.6" stroke="#ff6347" stroke-width="1.1" fill="none"/>
<path d="M1112.5 99.4h6.2M1115.6 96.3v6.2" stroke="#f00" stroke-width="1.2" fill="none"/>
<g fill="none" stroke="#dd11ff" stroke-width="1.389" stroke-dasharray="1.389 2.292">
<path d="M579.6 305.6 L579.39 304.97 L579.19 304.33 L579 303.7 L578.8 303.06 L578.61 302.43 L578.42 301.79 L578.24 301.16 L578.06 300.53 L577.89 299.89 L577.71 299.26 L577.55 298.62 L577.38 297.99 L577.22 297.36 L577.06 296.72 L576.91 296.09 L576.76 295.46 L576.62 294.82 L576.47 294.19 L576.34 293.55 L576.2 292.92 L576.07 292.29 L575.94 291.65 L575.82 291.02 L575.7 290.39 L575.59 289.76 L575.47 289.12 L575.36 288.49 L575.26 287.86 L575.16 287.22 L575.06 286.59 L574.97 285.96 L574.88 285.33 L574.79 284.69 L574.71 284.06 L574.63 283.43 L574.56 282.8 L574.49 282.17 L574.42 281.53 L574.35 280.9 L574.29 280.27 L574.24 279.64 L574.19 279.01 L574.14 278.38 L574.09 277.74 L574.05 277.11 L574.01 276.48 L573.98 275.85 L573.95 275.22 L573.92 274.59 L573.9 273.96 L573.88 273.33 L573.86 272.7 L573.85 272.07 L573.84 271.44 L573.84 270.81 L573.84 270.18 L573.84 269.55 L573.85 268.92 L573.86 268.29 L573.87 267.66 L573.89 267.03 L573.91 266.4 L573.93 265.77 L573.96 265.15 L573.99 264.52 L574.03 263.89 L574.07 263.26 L574.11 262.63 L574.16 262 L574.21 261.38 L574.26 260.75 L574.32 260.12 L574.38 259.49 L574.44 258.87 L574.51 258.24 L574.58 257.61 L574.66 256.99 L574.74 256.36 L574.82 255.74 L574.91 255.11 L574.99 254.48 L575.09 253.86 L575.18 253.23 L575.28 252.61 L575.39 251.98 L575.49 251.36 L575.61 250.73 L575.72 250.11 L575.84 249.48 L575.96 248.86 L576.08 248.24 L576.21 247.61 L576.34 246.99 L576.48 246.37 L576.62 245.74 L576.76 245.12 L576.9 244.5 L577.05 243.88 L577.2 243.26 L577.36 242.63 L577.52 242.01 L577.68 241.39 L577.85 240.77 L578.02 240.15 L578.19 239.53 L578.37 238.91 L578.54 238.29 L578.73 237.67 L578.91 237.05 L579.1 236.43 L579.3 235.81 L579.49 235.19 L579.69 234.58 L579.89 233.96 L580.1 233.34 L580.31 232.72 L580.52 232.1 L580.74 231.49 L580.96 230.87 L581.18 230.26 L581.4 229.64 L581.63 229.02 L581.86 228.41 L582.1 227.79 L582.34 227.18 L582.58 226.56 L582.82 225.95 L583.07 225.34 L583.32 224.72 L583.57 224.11 L583.83 223.5 L584.09 222.89 L584.35 222.27 L584.62 221.66 L584.89 221.05 L585.16 220.44 L585.44 219.83 L585.72 219.22 L586 218.61 L586.28 218 L586.57 217.39 L586.86 216.78 L587.15 216.17 L587.45 215.57 L587.75 214.96 L588.05 214.35 L588.35 213.74 L588.66 213.14 L588.97 212.53 L589.28 211.93 L589.6 211.32 L589.92 210.72 L590.24 210.11 L590.56 209.51 L590.89 208.91 L591.22 208.3 L591.55 207.7 L591.89 207.1 L592.23 206.5 L592.57 205.9 L592.91 205.3 L593.26 204.7 L593.6 204.1 L593.96 203.5 L594.31 202.9 L594.67 202.3 L595.02 201.71 L595.39 201.11 L595.75 200.51 L596.12 199.92 L596.48 199.32 L596.85 198.73 L597.23 198.13 L597.6 197.54 L597.98 196.95 L598.36 196.35 L598.75 195.76 L599.13 195.17 L599.52 194.58 L599.91 193.99 L600.3 193.4 L600.69 192.81 L601.09 192.22 L601.49 191.64 L601.89 191.05 L602.29 190.46 L602.7 189.88 L603.1 189.29 L603.51 188.71 L603.92 188.12 L604.34 187.54 L604.75 186.96 L605.17 186.38 L605.59 185.79 L606.01 185.21 L606.43 184.64 L606.85 184.06 L607.28 183.48 L607.71 182.9 L608.14 182.32 L608.57 181.75 L609 181.17 L609.43 180.6 L609.87 180.03 L610.31 179.45 L610.75 178.88 L611.19 178.31 L611.63 177.74 L612.07 177.17 L612.52 176.6 L612.96 176.03 L613.41 175.47 L613.86 174.9 L614.31 174.34 L614.76 173.77 L615.22 173.21 L615.67 172.65 L616.13 172.09 L616.58 171.53 L617.04 170.97 L617.5 170.41 L617.96 169.85 L618.42 169.29 L618.88 168.74 L619.34 168.18 L619.8 167.63 L620.27 167.08 L620.73 166.53 L621.2 165.98 L621.66 165.43 L622.13 164.88 L622.6 164.33 L623.06 163.79 L623.53 163.24 L624 162.7 L624.47 162.16 L624.94 161.62 L625.41 161.08 L625.88 160.54 L626.35 160 L626.82 159.46 L627.29 158.93 L627.76 158.39 L628.23 157.86 L628.7 157.33 L629.17 156.8 L629.64 156.27 L630.11 155.74 L630.58 155.22 L631.05 154.69 L631.52 154.17 L631.99 153.65 L632.45 153.13 L632.92 152.61 L633.39 152.09 L633.85 151.58 L634.32 151.06 L634.78 150.55 L635.25 150.04 L635.71 149.53 L636.17 149.02 L636.63 148.52 L637.09 148.01 L637.55 147.51 L638.01 147.01 L638.47 146.51 L638.92 146.01 L639.37 145.51 L639.82 145.02 L640.28 144.53 L640.72 144.04 L641.17 143.55 L641.61 143.06 L642.06 142.58 L642.5 142.09 L642.94 141.61 L643.37 141.13 L643.81 140.65 L644.24 140.18 L644.67 139.7 L645.1 139.23 L645.52 138.76 L645.94 138.3 L646.36 137.83 L646.78 137.37 L647.19 136.91 L647.6 136.45 L648.01 135.99 L648.42 135.54 L648.82 135.09 L649.22 134.64 L649.61 134.19 L650 133.75 L650.39 133.31 L650.77 132.87 L651.15 132.43 L651.52 132 L651.9 131.56 L652.26 131.13 L652.63 130.71 L652.98 130.28 L653.34 129.86 L653.69 129.44 L654.03 129.03 L654.37 128.61 L654.71 128.2 L655.03 127.8 L655.36 127.39 L655.68 126.99 L655.99 126.59 L656.3 126.2 L656.6 125.8 L656.9 125.41 L657.19 125.03 L657.47 124.64 L657.75 124.26 L658.02 123.89 L658.29 123.51 L658.55 123.14 L658.8 122.78 L659.04 122.41 L659.28 122.05 L659.51 121.7 L659.74 121.34 L659.95 120.99 L660.16 120.65 L660.36 120.3 L660.56 119.96 L660.74 119.63 L660.92 119.3 L661.09 118.97 L661.25 118.65 L661.4 118.33 L661.54 118.01 L661.68 117.7 L661.8 117.39 L661.92 117.09 L662.02 116.79 L662.12 116.49 L662.21 116.2 L662.29 115.91 L662.35 115.63 L662.41 115.35 L662.46 115.07 L662.5 114.8 L662.52 114.53 L662.54 114.27 L662.54 114.02 L662.54 113.76 L662.52 113.51 L662.49 113.27 L662.45 113.03 L662.4 112.8 L662.34 112.57 L662.26 112.34 L662.17 112.12 L662.07 111.91 L661.96 111.7 L661.84 111.49 L661.7 111.29 L661.55 111.09 L661.38 110.9 L661.21 110.72 L661.02 110.54 L660.81 110.36 L660.6 110.19 L660.36 110.02 L660.12 109.86 L659.86 109.71 L659.59 109.56 L659.3 109.42 L659 109.28 L658.68 109.14 L658.35 109.01 L658.01 108.89 L657.64 108.77 L657.27 108.66 L656.88 108.55 L656.47 108.45 L656.05 108.36 L655.61 108.27 L655.16 108.18"/>
<path d="M1148.98 108.1 L1148.08 108.03 L1147.19 107.96 L1146.31 107.9 L1145.46 107.84 L1144.62 107.79 L1143.79 107.74 L1142.98 107.7 L1142.19 107.67 L1141.41 107.64 L1140.65 107.62 L1139.9 107.6 L1139.17 107.59 L1138.45 107.58 L1137.75 107.58 L1137.07 107.59 L1136.4 107.6"/>
</g>
<path d="M579.6 305.6 L579.82 306.51 L580.05 307.42 L580.29 308.33 L580.53 309.24 L580.78 310.15 L581.04 311.06 L581.31 311.97 L581.58 312.88 L581.86 313.79 L582.15 314.7 L582.45 315.61 L582.75 316.53 L583.07 317.44 L583.39 318.35 L583.71 319.26 L584.05 320.17 L584.39 321.08 L584.74 321.99 L585.1 322.9" fill="none" stroke="#dd11ff" stroke-width="1.389"/>
<path d="M583.8 322.9h2.6M585.1 321.6v2.6" stroke="#ff6347" stroke-width="1.1" fill="none"/>
<path d="M1133.3 107.6h6.2M1136.4 104.5v6.2" stroke="#f00" stroke-width="1.2" fill="none"/>
<g fill="none" stroke="#a4ff28" stroke-width="1.389" stroke-dasharray="1.389 2.292">
<path d="M475.3 349.5 L475.35 349.39 L475.4 349.29 L475.45 349.18 L475.5 349.07 L475.55 348.97 L475.6 348.86 L475.65 348.75 L475.7 348.65 L475.75 348.54 L475.8 348.43 L475.85 348.33 L475.9 348.22 L475.95 348.11 L476 348.01 L476.05 347.9 L476.1 347.79 L476.16 347.69 L476.21 347.58 L476.26 347.47 L476.31 347.37 L476.36 347.26 L476.41 347.15 L476.47 347.05 L476.52 346.94 L476.57 346.83 L476.62 346.73 L476.68 346.62 L476.73 346.51 L476.78 346.41 L476.84 346.3 L476.89 346.19 L476.94 346.09 L477 345.98 L477.05 345.87 L477.1 345.76 L477.16 345.66 L477.21 345.55 L477.27 345.44 L477.32 345.34 L477.38 345.23 L477.43 345.12 L477.48 345.02 L477.54 344.91 L477.59 344.8 L477.65 344.7 L477.71 344.59 L477.76 344.48 L477.82 344.38 L477.87 344.27 L477.93 344.16 L477.98 344.05 L478.04 343.95 L478.1 343.84 L478.15 343.73 L478.21 343.63 L478.27 343.52 L478.32 343.41 L478.38 343.31 L478.44 343.2 L478.49 343.09 L478.55 342.99 L478.61 342.88 L478.67 342.77 L478.73 342.66 L478.78 342.56 L478.84 342.45 L478.9 342.34 L478.96 342.24 L479.02 342.13 L479.08 342.02 L479.13 341.92 L479.19 341.81 L479.25 341.7 L479.31 341.59 L479.37 341.49 L479.43 341.38 L479.49 341.27 L479.55 341.17 L479.61 341.06 L479.67 340.95 L479.73 340.85 L479.79 340.74 L479.85 340.63 L479.91 340.52 L479.97 340.42 L480.03 340.31 L480.09 340.2 L480.16 340.1 L480.22 339.99 L480.28 339.88 L480.34 339.77 L480.4 339.67 L480.46 339.56 L480.52 339.45 L480.59 339.35 L480.65 339.24 L480.71 339.13 L480.77 339.02 L480.84 338.92 L480.9 338.81 L480.96 338.7 L481.03 338.6 L481.09 338.49 L481.15 338.38 L481.22 338.27 L481.28 338.17 L481.34 338.06 L481.41 337.95 L481.47 337.85 L481.54 337.74 L481.6 337.63 L481.66 337.52 L481.73 337.42 L481.79 337.31 L481.86 337.2 L481.92 337.1 L481.99 336.99 L482.05 336.88 L482.12 336.77 L482.18 336.67 L482.25 336.56 L482.32 336.45 L482.38 336.34 L482.45 336.24 L482.51 336.13 L482.58 336.02 L482.65 335.92 L482.71 335.81 L482.78 335.7 L482.85 335.59 L482.91 335.49 L482.98 335.38 L483.05 335.27 L483.12 335.17 L483.18 335.06 L483.25 334.95 L483.32 334.84 L483.39 334.74 L483.46 334.63 L483.52 334.52 L483.59 334.41 L483.66 334.31 L483.73 334.2 L483.8 334.09 L483.87 333.99 L483.94 333.88 L484.01 333.77 L484.08 333.66 L484.15 333.56 L484.22 333.45 L484.29 333.34 L484.36 333.23 L484.43 333.13 L484.5 333.02 L484.57 332.91 L484.64 332.8 L484.71 332.7 L484.78 332.59 L484.85 332.48 L484.92 332.38 L484.99 332.27 L485.06 332.16 L485.13 332.05 L485.21 331.95 L485.28 331.84 L485.35 331.73 L485.42 331.62 L485.49 331.52 L485.57 331.41 L485.64 331.3 L485.71 331.19 L485.78 331.09 L485.86 330.98 L485.93 330.87 L486 330.77 L486.08 330.66 L486.15 330.55 L486.22 330.44 L486.3 330.34 L486.37 330.23 L486.44 330.12 L486.52 330.01 L486.59 329.91 L486.67 329.8 L486.74 329.69 L486.82 329.58 L486.89 329.48 L486.97 329.37 L487.04 329.26 L487.12 329.15 L487.19 329.05 L487.27 328.94 L487.34 328.83 L487.42 328.72 L487.49 328.62 L487.57 328.51 L487.65 328.4 L487.72 328.29 L487.8 328.19 L487.88 328.08 L487.95 327.97 L488.03 327.87 L488.11 327.76 L488.18 327.65 L488.26 327.54 L488.34 327.44 L488.41 327.33 L488.49 327.22 L488.57 327.11 L488.65 327.01 L488.73 326.9 L488.8 326.79 L488.88 326.68 L488.96 326.58 L489.04 326.47 L489.12 326.36 L489.2 326.25 L489.28 326.15 L489.36 326.04 L489.43 325.93 L489.51 325.82 L489.59 325.72 L489.67 325.61 L489.75 325.5 L489.83 325.39 L489.91 325.29 L489.99 325.18 L490.07 325.07 L490.15 324.96 L490.24 324.86 L490.32 324.75 L490.4 324.64 L490.48 324.53 L490.56 324.43 L490.64 324.32 L490.72 324.21 L490.8 324.1 L490.89 324 L490.97 323.89 L491.05 323.78 L491.13 323.67 L491.21 323.57 L491.3 323.46 L491.38 323.35 L491.46 323.24 L491.54 323.14 L491.63 323.03 L491.71 322.92 L491.79 322.81 L491.88 322.71 L491.96 322.6 L492.04 322.49 L492.13 322.38 L492.21 322.28 L492.3 322.17 L492.38 322.06 L492.46 321.95 L492.55 321.85 L492.63 321.74 L492.72 321.63 L492.8 321.52 L492.89 321.42 L492.97 321.31 L493.06 321.2 L493.14 321.1 L493.23 320.99 L493.31 320.88 L493.4 320.77 L493.49 320.67 L493.57 320.56 L493.66 320.45 L493.75 320.34 L493.83 320.24 L493.92 320.13 L494.01 320.02 L494.09 319.91 L494.18 319.81 L494.27 319.7 L494.35 319.59 L494.44 319.48 L494.53 319.38 L494.62 319.27 L494.7 319.16 L494.79 319.05 L494.88 318.95 L494.97 318.84 L495.06 318.73 L495.15 318.62 L495.23 318.52 L495.32 318.41 L495.41 318.3 L495.5 318.19 L495.59 318.09 L495.68 317.98 L495.77 317.87 L495.86 317.76 L495.95 317.66 L496.04 317.55 L496.13 317.44 L496.22 317.33 L496.31 317.23 L496.4 317.12 L496.49 317.01 L496.58 316.9 L496.67 316.8 L496.76 316.69 L496.85 316.58 L496.94 316.47 L497.04 316.37 L497.13 316.26 L497.22 316.15 L497.31 316.04 L497.4 315.94 L497.49 315.83 L497.59 315.72 L497.68 315.61 L497.77 315.51 L497.86 315.4 L497.96 315.29 L498.05 315.18 L498.14 315.08 L498.23 314.97 L498.33 314.86 L498.42 314.75 L498.51 314.65 L498.61 314.54 L498.7 314.43 L498.8 314.32 L498.89 314.22 L498.98 314.11 L499.08 314 L499.17 313.89 L499.27 313.79 L499.36 313.68 L499.46 313.57 L499.55 313.46 L499.65 313.36 L499.74 313.25 L499.84 313.14 L499.93 313.03 L500.03 312.93 L500.12 312.82 L500.22 312.71 L500.32 312.61 L500.41 312.5 L500.51 312.39 L500.6 312.28 L500.7 312.18 L500.8 312.07 L500.9 311.96 L500.99 311.85 L501.09 311.75 L501.19 311.64 L501.28 311.53 L501.38 311.42 L501.48 311.32 L501.58 311.21 L501.67 311.1 L501.77 310.99 L501.87 310.89 L501.97 310.78 L502.07 310.67 L502.17 310.56 L502.26 310.46 L502.36 310.35 L502.46 310.24 L502.56 310.13 L502.66 310.03 L502.76 309.92 L502.86 309.81 L502.96 309.71 L503.06 309.6 L503.16 309.49 L503.26 309.38 L503.36 309.28 L503.46 309.17 L503.56 309.06 L503.66 308.95 L503.76 308.85 L503.86 308.74 L503.96 308.63 L504.06 308.52 L504.16 308.42 L504.26 308.31 L504.37 308.2 L504.47 308.1 L504.57 307.99 L504.67 307.88 L504.77 307.77 L504.88 307.67 L504.98 307.56 L505.08 307.45 L505.18 307.34 L505.29 307.24 L505.39 307.13 L505.49 307.02 L505.59 306.91 L505.7 306.81 L505.8 306.7"/>
</g>
<path d="M475.3 349.5 L475.04 349.95 L474.79 350.4 L474.53 350.85 L474.28 351.29 L474.03 351.74 L473.79 352.19 L473.54 352.64 L473.3 353.09 L473.06 353.53 L472.82 353.98 L472.59 354.43 L472.36 354.88 L472.13 355.32 L471.9 355.77 L471.68 356.22 L471.45 356.66 L471.23 357.11 L471.02 357.55 L470.8 358" fill="none" stroke="#a4ff28" stroke-width="1.389"/>
<path d="M469.5 358h2.6M470.8 356.7v2.6" stroke="#ff6347" stroke-width="1.1" fill="none"/>
<path d="M502.7 306.7h6.2M505.8 303.6v6.2" stroke="#f00" stroke-width="1.2" fill="none"/>
<g fill="none" stroke="#a4ff28" stroke-width="1.389" stroke-dasharray="1.389 2.292">
<path d="M567.6 329.2 L567.45 329.14 L567.31 329.08 L567.16 329.02 L567.02 328.96 L566.87 328.9 L566.73 328.84 L566.58 328.78 L566.44 328.72 L566.29 328.65 L566.15 328.59 L566 328.53 L565.86 328.47 L565.71 328.41 L565.57 328.35 L565.42 328.29 L565.28 328.23 L565.13 328.17 L564.99 328.11 L564.84 328.05 L564.7 327.99 L564.55 327.93 L564.41 327.87 L564.26 327.81 L564.12 327.75 L563.97 327.68 L563.83 327.62 L563.68 327.56 L563.54 327.5 L563.39 327.44 L563.25 327.38 L563.11 327.32 L562.96 327.26 L562.82 327.2 L562.67 327.14 L562.53 327.08 L562.38 327.02 L562.24 326.96 L562.1 326.9 L561.95 326.83 L561.81 326.77 L561.66 326.71 L561.52 326.65 L561.38 326.59 L561.23 326.53 L561.09 326.47 L560.94 326.41 L560.8 326.35 L560.66 326.29 L560.51 326.23 L560.37 326.17 L560.22 326.11 L560.08 326.04 L559.94 325.98 L559.79 325.92 L559.65 325.86 L559.51 325.8 L559.36 325.74 L559.22 325.68 L559.08 325.62 L558.93 325.56 L558.79 325.5 L558.65 325.44 L558.5 325.38 L558.36 325.32 L558.22 325.25 L558.07 325.19 L557.93 325.13 L557.79 325.07 L557.64 325.01 L557.5 324.95 L557.36 324.89 L557.21 324.83 L557.07 324.77 L556.93 324.71 L556.79 324.65 L556.64 324.59 L556.5 324.52 L556.36 324.46 L556.21 324.4 L556.07 324.34 L555.93 324.28 L555.79 324.22 L555.64 324.16 L555.5 324.1 L555.36 324.04 L555.22 323.98 L555.07 323.92 L554.93 323.86 L554.79 323.79 L554.65 323.73 L554.5 323.67 L554.36 323.61 L554.22 323.55 L554.08 323.49 L553.94 323.43 L553.79 323.37 L553.65 323.31 L553.51 323.25 L553.37 323.19 L553.23 323.12 L553.08 323.06 L552.94 323 L552.8 322.94 L552.66 322.88 L552.52 322.82 L552.37 322.76 L552.23 322.7 L552.09 322.64 L551.95 322.58 L551.81 322.52 L551.67 322.45 L551.53 322.39 L551.38 322.33 L551.24 322.27 L551.1 322.21 L550.96 322.15 L550.82 322.09 L550.68 322.03 L550.54 321.97 L550.39 321.91 L550.25 321.85 L550.11 321.78 L549.97 321.72 L549.83 321.66 L549.69 321.6 L549.55 321.54 L549.41 321.48 L549.27 321.42 L549.13 321.36 L548.98 321.3 L548.84 321.24 L548.7 321.18 L548.56 321.11 L548.42 321.05 L548.28 320.99 L548.14 320.93 L548 320.87 L547.86 320.81 L547.72 320.75 L547.58 320.69 L547.44 320.63 L547.3 320.57 L547.16 320.51 L547.02 320.44 L546.88 320.38 L546.74 320.32 L546.6 320.26 L546.46 320.2 L546.32 320.14 L546.18 320.08 L546.04 320.02 L545.9 319.96 L545.76 319.9 L545.62 319.84 L545.48 319.77 L545.34 319.71 L545.2 319.65 L545.06 319.59 L544.92 319.53 L544.78 319.47 L544.64 319.41 L544.5 319.35 L544.36 319.29 L544.22 319.23 L544.08 319.16 L543.94 319.1 L543.8 319.04 L543.66 318.98 L543.52 318.92 L543.38 318.86 L543.24 318.8 L543.1 318.74 L542.96 318.68 L542.83 318.62 L542.69 318.56 L542.55 318.49 L542.41 318.43 L542.27 318.37 L542.13 318.31 L541.99 318.25 L541.85 318.19 L541.71 318.13 L541.58 318.07 L541.44 318.01 L541.3 317.95 L541.16 317.89 L541.02 317.82 L540.88 317.76 L540.74 317.7 L540.6 317.64 L540.47 317.58 L540.33 317.52 L540.19 317.46 L540.05 317.4 L539.91 317.34 L539.77 317.28 L539.64 317.22 L539.5 317.15 L539.36 317.09 L539.22 317.03 L539.08 316.97 L538.94 316.91 L538.81 316.85 L538.67 316.79 L538.53 316.73 L538.39 316.67 L538.26 316.61 L538.12 316.55 L537.98 316.49 L537.84 316.42 L537.7 316.36 L537.57 316.3 L537.43 316.24 L537.29 316.18 L537.15 316.12 L537.02 316.06 L536.88 316 L536.74 315.94 L536.6 315.88 L536.47 315.82 L536.33 315.76 L536.19 315.69 L536.05 315.63 L535.92 315.57 L535.78 315.51 L535.64 315.45 L535.51 315.39 L535.37 315.33 L535.23 315.27 L535.09 315.21 L534.96 315.15 L534.82 315.09 L534.68 315.03 L534.55 314.96 L534.41 314.9 L534.27 314.84 L534.14 314.78 L534 314.72 L533.86 314.66 L533.73 314.6 L533.59 314.54 L533.45 314.48 L533.32 314.42 L533.18 314.36 L533.04 314.3 L532.91 314.24 L532.77 314.17 L532.63 314.11 L532.5 314.05 L532.36 313.99 L532.23 313.93 L532.09 313.87 L531.95 313.81 L531.82 313.75 L531.68 313.69 L531.55 313.63 L531.41 313.57 L531.27 313.51 L531.14 313.45 L531 313.39 L530.87 313.32 L530.73 313.26 L530.6 313.2 L530.46 313.14 L530.32 313.08 L530.19 313.02 L530.05 312.96 L529.92 312.9 L529.78 312.84 L529.65 312.78 L529.51 312.72 L529.38 312.66 L529.24 312.6 L529.1 312.54 L528.97 312.47 L528.83 312.41 L528.7 312.35 L528.56 312.29 L528.43 312.23 L528.29 312.17 L528.16 312.11 L528.02 312.05 L527.89 311.99 L527.75 311.93 L527.62 311.87 L527.48 311.81 L527.35 311.75 L527.21 311.69 L527.08 311.63 L526.95 311.57 L526.81 311.51 L526.68 311.44 L526.54 311.38 L526.41 311.32 L526.27 311.26 L526.14 311.2 L526 311.14 L525.87 311.08 L525.74 311.02 L525.6 310.96 L525.47 310.9 L525.33 310.84 L525.2 310.78 L525.06 310.72 L524.93 310.66 L524.8 310.6 L524.66 310.54 L524.53 310.48 L524.39 310.42 L524.26 310.36 L524.13 310.29 L523.99 310.23 L523.86 310.17 L523.72 310.11 L523.59 310.05 L523.46 309.99 L523.32 309.93 L523.19 309.87 L523.06 309.81 L522.92 309.75 L522.79 309.69 L522.66 309.63 L522.52 309.57 L522.39 309.51 L522.26 309.45 L522.12 309.39 L521.99 309.33 L521.86 309.27 L521.72 309.21 L521.59 309.15 L521.46 309.09 L521.32 309.03 L521.19 308.97 L521.06 308.91 L520.93 308.85 L520.79 308.79 L520.66 308.72 L520.53 308.66 L520.39 308.6 L520.26 308.54 L520.13 308.48 L520 308.42 L519.86 308.36 L519.73 308.3 L519.6 308.24 L519.47 308.18 L519.33 308.12 L519.2 308.06 L519.07 308 L518.94 307.94 L518.8 307.88 L518.67 307.82 L518.54 307.76 L518.41 307.7 L518.28 307.64 L518.14 307.58 L518.01 307.52 L517.88 307.46 L517.75 307.4 L517.62 307.34 L517.48 307.28 L517.35 307.22 L517.22 307.16 L517.09 307.1 L516.96 307.04 L516.82 306.98 L516.69 306.92 L516.56 306.86 L516.43 306.8 L516.3 306.74 L516.17 306.68 L516.04 306.62 L515.9 306.56 L515.77 306.5 L515.64 306.44 L515.51 306.38 L515.38 306.32 L515.25 306.26 L515.12 306.2 L514.98 306.14 L514.85 306.08 L514.72 306.02 L514.59 305.96 L514.46 305.9 L514.33 305.84 L514.2 305.78 L514.07 305.72 L513.94 305.66 L513.81 305.6 L513.68 305.54 L513.54 305.48 L513.41 305.42 L513.28 305.36 L513.15 305.3 L513.02 305.24 L512.89 305.18 L512.76 305.12 L512.63 305.06 L512.5 305"/>
</g>
<path d="M567.6 329.2 L568.05 329.4 L568.5 329.6 L568.95 329.8 L569.4 330 L569.85 330.2 L570.3 330.4 L570.75 330.6 L571.2 330.8 L571.66 331 L572.11 331.2 L572.56 331.4 L573.02 331.6 L573.47 331.8 L573.92 332 L574.38 332.2 L574.83 332.4 L575.29 332.6 L575.74 332.8 L576.2 333" fill="none" stroke="#a4ff28" stroke-width="1.389"/>
<path d="M574.9 333h2.6M576.2 331.7v2.6" stroke="#ff6347" stroke-width="1.1" fill="none"/>
<path d="M509.4 305h6.2M512.5 301.9v6.2" stroke="#f00" stroke-width="1.2" fill="none"/>
<g fill="none" stroke="#ffb20d" stroke-width="1.389" stroke-dasharray="1.389 2.292">
<path d="M656.2 227.3 L656.67 226.91 L657.14 226.53 L657.61 226.14 L658.08 225.75 L658.55 225.37 L659.03 224.98 L659.5 224.59 L659.98 224.21 L660.46 223.82 L660.93 223.44 L661.41 223.05 L661.89 222.66 L662.37 222.28 L662.85 221.89 L663.34 221.51 L663.82 221.12 L664.3 220.74 L664.79 220.35 L665.27 219.97 L665.76 219.58 L666.25 219.2 L666.74 218.81 L667.23 218.43 L667.72 218.05 L668.21 217.66 L668.7 217.28 L669.2 216.89 L669.69 216.51 L670.19 216.13 L670.68 215.74 L671.18 215.36 L671.68 214.98 L672.17 214.59 L672.67 214.21 L673.17 213.83 L673.67 213.45 L674.18 213.06 L674.68 212.68 L675.18 212.3 L675.69 211.92 L676.19 211.53 L676.7 211.15 L677.21 210.77 L677.71 210.39 L678.22 210.01 L678.73 209.63 L679.24 209.25 L679.75 208.87 L680.26 208.48 L680.78 208.1 L681.29 207.72 L681.8 207.34 L682.32 206.96 L682.84 206.58 L683.35 206.2 L683.87 205.82 L684.39 205.44 L684.91 205.06 L685.43 204.69 L685.95 204.31 L686.47 203.93 L686.99 203.55 L687.51 203.17 L688.04 202.79 L688.56 202.41 L689.08 202.04 L689.61 201.66 L690.14 201.28 L690.66 200.9 L691.19 200.53 L691.72 200.15 L692.25 199.77 L692.78 199.39 L693.31 199.02 L693.84 198.64 L694.37 198.27 L694.91 197.89 L695.44 197.51 L695.97 197.14 L696.51 196.76 L697.04 196.39 L697.58 196.01 L698.12 195.64 L698.65 195.26 L699.19 194.89 L699.73 194.51 L700.27 194.14 L700.81 193.77 L701.35 193.39 L701.89 193.02 L702.43 192.64 L702.97 192.27 L703.52 191.9 L704.06 191.53 L704.61 191.15 L705.15 190.78 L705.7 190.41 L706.24 190.04 L706.79 189.67 L707.34 189.29 L707.88 188.92 L708.43 188.55 L708.98 188.18 L709.53 187.81 L710.08 187.44 L710.63 187.07 L711.18 186.7 L711.73 186.33 L712.29 185.96 L712.84 185.59 L713.39 185.22 L713.94 184.85 L714.5 184.49 L715.05 184.12 L715.61 183.75 L716.17 183.38 L716.72 183.01 L717.28 182.65 L717.84 182.28 L718.39 181.91 L718.95 181.55 L719.51 181.18 L720.07 180.81 L720.63 180.45 L721.19 180.08 L721.75 179.72 L722.31 179.35 L722.87 178.99 L723.43 178.62 L724 178.26 L724.56 177.9 L725.12 177.53 L725.69 177.17 L726.25 176.81 L726.82 176.44 L727.38 176.08 L727.95 175.72 L728.51 175.36 L729.08 175 L729.64 174.64 L730.21 174.27 L730.78 173.91 L731.34 173.55 L731.91 173.19 L732.48 172.83 L733.05 172.47 L733.62 172.11 L734.19 171.76 L734.76 171.4 L735.33 171.04 L735.9 170.68 L736.47 170.32 L737.04 169.97 L737.61 169.61 L738.18 169.25 L738.75 168.9 L739.32 168.54 L739.9 168.19 L740.47 167.83 L741.04 167.48 L741.62 167.12 L742.19 166.77 L742.76 166.41 L743.34 166.06 L743.91 165.71 L744.48 165.35 L745.06 165 L745.63 164.65 L746.21 164.3 L746.78 163.95 L747.36 163.6 L747.93 163.25 L748.51 162.89 L749.09 162.55 L749.66 162.2 L750.24 161.85 L750.82 161.5 L751.39 161.15 L751.97 160.8 L752.55 160.45 L753.12 160.11 L753.7 159.76 L754.28 159.42 L754.85 159.07 L755.43 158.72 L756.01 158.38 L756.59 158.03 L757.17 157.69 L757.74 157.35 L758.32 157 L758.9 156.66 L759.48 156.32 L760.06 155.98 L760.63 155.64 L761.21 155.29 L761.79 154.95 L762.37 154.61 L762.95 154.27 L763.53 153.94 L764.11 153.6 L764.68 153.26 L765.26 152.92 L765.84 152.58 L766.42 152.25 L767 151.91 L767.58 151.58 L768.16 151.24 L768.73 150.91 L769.31 150.57 L769.89 150.24 L770.47 149.91 L771.05 149.57 L771.63 149.24 L772.2 148.91 L772.78 148.58 L773.36 148.25 L773.94 147.92 L774.52 147.59 L775.09 147.26 L775.67 146.93 L776.25 146.6 L776.83 146.28 L777.4 145.95 L777.98 145.62 L778.56 145.3 L779.13 144.97 L779.71 144.65 L780.29 144.33 L780.86 144 L781.44 143.68 L782.02 143.36 L782.59 143.04 L783.17 142.72 L783.74 142.4 L784.32 142.08 L784.89 141.76 L785.47 141.44 L786.04 141.12 L786.62 140.81 L787.19 140.49 L787.76 140.18 L788.34 139.86 L788.91 139.55 L789.48 139.23 L790.05 138.92 L790.63 138.61 L791.2 138.3 L791.77 137.99 L792.34 137.68 L792.91 137.37 L793.48 137.06 L794.05 136.75 L794.62 136.45 L795.19 136.14 L795.76 135.83 L796.33 135.53 L796.9 135.23 L797.47 134.92 L798.04 134.62 L798.6 134.32 L799.17 134.02 L799.74 133.72 L800.3 133.42 L800.87 133.12 L801.43 132.82 L802 132.53 L802.56 132.23 L803.13 131.94 L803.69 131.64 L804.25 131.35 L804.81 131.06 L805.38 130.76 L805.94 130.47 L806.5 130.18 L807.06 129.89 L807.62 129.61 L808.18 129.32 L808.74 129.03 L809.29 128.75 L809.85 128.46 L810.41 128.18 L810.97 127.9 L811.52 127.62 L812.08 127.33 L812.63 127.06 L813.19 126.78 L813.74 126.5 L814.29 126.22 L814.85 125.95 L815.4 125.67 L815.95 125.4 L816.5 125.13 L817.05 124.85 L817.6 124.58 L818.15 124.31 L818.7 124.05 L819.24 123.78 L819.79 123.51 L820.34 123.25 L820.88 122.98 L821.43 122.72 L821.97 122.46 L822.51 122.2 L823.06 121.94 L823.6 121.68 L824.14 121.42 L824.68 121.17 L825.22 120.91 L825.76 120.66 L826.3 120.4 L826.83 120.15 L827.37 119.9 L827.91 119.65 L828.44 119.41 L828.97 119.16 L829.51 118.92 L830.04 118.67 L830.57 118.43 L831.1 118.19 L831.63 117.95 L832.16 117.71 L832.69 117.47 L833.22 117.23 L833.75 117 L834.27 116.77 L834.8 116.53 L835.32 116.3 L835.85 116.07 L836.37 115.85 L836.89 115.62 L837.41 115.39 L837.93 115.17 L838.45 114.95 L838.97 114.73 L839.49 114.51 L840.01 114.29 L840.52 114.07 L841.04 113.86 L841.55 113.65 L842.06 113.43 L842.58 113.22 L843.09 113.01 L843.6 112.81 L844.11 112.6 L844.62 112.4 L845.12 112.19 L845.63 111.99 L846.14 111.79 L846.64 111.59 L847.14 111.4 L847.65 111.2 L848.15 111.01 L848.65 110.82 L849.15 110.63 L849.65 110.44 L850.15 110.26 L850.65 110.07 L851.14 109.89 L851.64 109.71 L852.13 109.53 L852.63 109.35 L853.12 109.17 L853.61 109 L854.1 108.83 L854.59 108.66 L855.08 108.49 L855.57 108.32 L856.06 108.16 L856.54 107.99 L857.03 107.83 L857.51 107.67 L857.99 107.51 L858.48 107.36 L858.96 107.2 L859.44 107.05 L859.92 106.9 L860.4 106.75 L860.87 106.61 L861.35 106.46 L861.83 106.32 L862.3 106.18 L862.78 106.04 L863.25 105.9 L863.72 105.77 L864.19 105.64 L864.66 105.51 L865.13 105.38 L865.6 105.25 L866.07 105.13 L866.54 105.01 L867 104.89 L867.47 104.77 L867.93 104.65 L868.4 104.54 L868.86 104.43 L869.32 104.32 L869.78 104.21 L870.24 104.1 L870.7 104"/>
</g>
<path d="M656.2 227.3 L655.35 228 L654.51 228.71 L653.67 229.41 L652.84 230.11 L652 230.82 L651.17 231.52 L650.35 232.22 L649.52 232.93 L648.7 233.63 L647.89 234.34 L647.08 235.04 L646.27 235.75 L645.46 236.46 L644.66 237.16 L643.86 237.87 L643.06 238.58 L642.27 239.28 L641.48 239.99 L640.7 240.7" fill="none" stroke="#ffb20d" stroke-width="1.389"/>
<path d="M639.4 240.7h2.6M640.7 239.4v2.6" stroke="#ff6347" stroke-width="1.1" fill="none"/>
<path d="M867.6 104h6.2M870.7 100.9v6.2" stroke="#f00" stroke-width="1.2" fill="none"/>
</svg>
<g font-family="'DejaVu Sans','Liberation Sans',sans-serif">
<text transform="translate(903 623.89) scale(0.965 1)" text-anchor="middle" font-size="9.72" fill="#808080">−90<tspan font-size="7.78" dx="1.8" dy="-3.3">°</tspan></text>
<text transform="translate(903 526.09) scale(0.965 1)" text-anchor="middle" font-size="9.72" fill="#808080">−60<tspan font-size="7.78" dx="1.8" dy="-3.3">°</tspan></text>
<text transform="translate(903 428.29) scale(0.965 1)" text-anchor="middle" font-size="9.72" fill="#808080">−30<tspan font-size="7.78" dx="1.8" dy="-3.3">°</tspan></text>
<text transform="translate(903 220.6) scale(0.965 1)" text-anchor="middle" font-size="9.72" fill="#808080">+30<tspan font-size="7.78" dx="1.8" dy="-3.3">°</tspan></text>
<text transform="translate(903 122.5) scale(0.965 1)" text-anchor="middle" font-size="9.72" fill="#808080">+60<tspan font-size="7.78" dx="1.8" dy="-3.3">°</tspan></text>
<text transform="translate(903 25.1) scale(0.965 1)" text-anchor="middle" font-size="9.72" fill="#808080">+90<tspan font-size="7.78" dx="1.8" dy="-3.3">°</tspan></text>
<text transform="translate(903 330.49) scale(0.965 1)" text-anchor="middle" font-size="9.72" fill="#808080" stroke="#808080" stroke-width="0.45">+0<tspan font-size="7.78" dx="1.8" dy="-3.3">°</tspan></text>
<text transform="translate(805.2 330.49) scale(0.965 1)" text-anchor="middle" font-size="9.72" fill="#808080">+30<tspan font-size="7.78" dx="1.8" dy="-3.3">°</tspan></text>
<text transform="translate(707.4 330.49) scale(0.965 1)" text-anchor="middle" font-size="9.72" fill="#808080">+60<tspan font-size="7.78" dx="1.8" dy="-3.3">°</tspan></text>
<text transform="translate(609.6 330.49) scale(0.965 1)" text-anchor="middle" font-size="9.72" fill="#808080">+90<tspan font-size="7.78" dx="1.8" dy="-3.3">°</tspan></text>
<text transform="translate(511.8 330.49) scale(0.965 1)" text-anchor="middle" font-size="9.72" fill="#808080">+120<tspan font-size="7.78" dx="1.8" dy="-3.3">°</tspan></text>
<text transform="translate(414 330.49) scale(0.965 1)" text-anchor="middle" font-size="9.72" fill="#808080">+150<tspan font-size="7.78" dx="1.8" dy="-3.3">°</tspan></text>
<text transform="translate(316.2 330.49) scale(0.965 1)" text-anchor="middle" font-size="9.72" fill="#808080">+180<tspan font-size="7.78" dx="1.8" dy="-3.3">°</tspan></text>
<text transform="translate(1489.8 330.49) scale(0.965 1)" text-anchor="middle" font-size="9.72" fill="#808080">+180<tspan font-size="7.78" dx="1.8" dy="-3.3">°</tspan></text>
<text transform="translate(1392 330.49) scale(0.965 1)" text-anchor="middle" font-size="9.72" fill="#808080">+210<tspan font-size="7.78" dx="1.8" dy="-3.3">°</tspan></text>
<text transform="translate(1294.2 330.49) scale(0.965 1)" text-anchor="middle" font-size="9.72" fill="#808080">+240<tspan font-size="7.78" dx="1.8" dy="-3.3">°</tspan></text>
<text transform="translate(1196.4 330.49) scale(0.965 1)" text-anchor="middle" font-size="9.72" fill="#808080">+270<tspan font-size="7.78" dx="1.8" dy="-3.3">°</tspan></text>
<text transform="translate(1098.6 330.49) scale(0.965 1)" text-anchor="middle" font-size="9.72" fill="#808080">+300<tspan font-size="7.78" dx="1.8" dy="-3.3">°</tspan></text>
<text transform="translate(1000.8 330.49) scale(0.965 1)" text-anchor="middle" font-size="9.72" fill="#808080">+330<tspan font-size="7.78" dx="1.8" dy="-3.3">°</tspan></text>
<text transform="translate(1092.8 95.36) scale(0.92 1)" text-anchor="middle" font-size="11.11" fill="#fff">DKD</text>
<text transform="translate(507.6 310.36) scale(0.92 1)" text-anchor="middle" font-size="11.11" fill="#fff">HYD</text>
<text transform="translate(869.3 114.36) scale(0.92 1)" text-anchor="middle" font-size="11.11" fill="#fff">DPC</text>
</g>
<g font-family="'DejaVu Sans Mono','Liberation Mono',monospace" font-size="13.89" fill="#fff" xml:space="preserve">
<text x="315.2" y="30">UK008D</text>
<text x="315.2" y="43">Beg: 20251202 21:17:20 (sol = 250.59°)</text>
<text x="315.2" y="57">End: 20251203 06:43:15 (sol = 250.99°)</text>
<text x="315.2" y="69.3">--------------------------------------</text>
<text x="315.2" y="82">...: 12</text>
<text x="315.2" y="95">DKD: 4</text>
<text x="315.2" y="108">HYD: 2</text>
<text x="315.2" y="122">DPC: 1</text>
</g>
<g font-family="'DejaVu Sans','Liberation Sans',sans-serif" font-size="27.78" fill="#fff" fill-opacity="0.3" text-anchor="end">
<text transform="translate(149.1 642.5) rotate(-90) scale(0.972 1)">APR</text>
<text transform="translate(294.1 644.8) rotate(-90) scale(0.972 1)">MAY</text>
<text transform="translate(436 640.5) rotate(-90) scale(0.972 1)">JUN</text>
<text transform="translate(576 641.7) rotate(-90) scale(0.972 1)">JUL</text>
<text transform="translate(723 642.2) rotate(-90) scale(0.972 1)">AUG</text>
<text transform="translate(872.2 643.8) rotate(-90) scale(0.972 1)">SEP</text>
<text transform="translate(1016.2 644.1) rotate(-90) scale(0.972 1)">OCT</text>
<text transform="translate(1169.1 644.8) rotate(-90) scale(0.972 1)">NOV</text>
<text transform="translate(1318.3 644.8) rotate(-90) scale(0.972 1)">DEC</text>
<text transform="translate(1469.2 640.7) rotate(-90) scale(0.972 1)">JAN</text>
<text transform="translate(1628.1 644.6) rotate(-90) scale(0.972 1)">FEB</text>
<text transform="translate(1766 644.4) rotate(-90) scale(0.972 1)">MAR</text>
</g>
<path d="M1248.5 842.5V641.5" fill="none" stroke="#f00" stroke-width="1.389" stroke-dasharray="5.139 2.222"/>
<path d="M1250.5 842.5V641.5" fill="none" stroke="#f00" stroke-width="1.389" stroke-dasharray="5.139 2.222"/>
<path d="M105.92 834H129.08M164.92 834H345.08M365.92 834H625.08M634.92 834H787.08M806.92 834H899.08M919.92 834H973.08M983.92 834H1066.08M1081.92 834H1203.08M1243.92 834H1326.08M1336.92 834H1355.08M1380.92 834H1444.08M1458.92 834H1512.08M1522.92 834H1547.08M1723.92 834H1748.08M1757.92 834H1782.08" fill="none" stroke="#ec84ef" stroke-width="4.167"/>
<path d="M164.92 818H188.08M222.92 818H286.08M311.92 818H340.08M365.92 818H492.08M507.92 818H654.08M703.92 818H737.08M772.92 818H845.08M870.92 818H988.08M1002.92 818H1017.08M1061.92 818H1213.08M1243.92 818H1267.08M1292.92 818H1316.08M1341.92 818H1365.08M1385.92 818H1429.08M1458.92 818H1483.08M1547.92 818H1571.08" fill="none" stroke="#dd11ff" stroke-width="4.167"/>
<path d="M164.92 802H188.08M257.92 802H487.08M507.92 802H615.08M625.92 802H718.08M728.92 802H826.08M948.92 802H1149.08M1159.92 802H1248.08M1257.92 802H1444.08M1458.92 802H1483.08M1551.92 802H1576.08" fill="none" stroke="#ff1d00" stroke-width="4.167"/>
<path d="M193.92 785H218.08M321.92 785H507.08M517.92 785H541.08M556.92 785H684.08M806.92 785H831.08M953.92 785H973.08M988.92 785H1125.08M1154.92 785H1218.08M1243.92 785H1267.08M1316.92 785H1341.08M1395.92 785H1419.08M1463.92 785H1650.08" fill="none" stroke="#ffb20d" stroke-width="4.167"/>
<path d="M340.92 769H370.08M409.92 769H448.08M468.92 769H492.08M527.92 769H546.08M561.92 769H590.08M615.92 769H649.08M958.92 769H988.08M1061.92 769H1086.08M1100.92 769H1125.08M1159.92 769H1194.08M1247.92 769H1272.08M1424.92 769H1512.08" fill="none" stroke="#fff000" stroke-width="4.167"/>
<path d="M419.92 752H443.08M531.92 752H556.08M566.92 752H590.08M620.92 752H742.08M968.92 752H1135.08M1184.92 752H1346.08M1468.92 752H1493.08" fill="none" stroke="#a4ff28" stroke-width="4.167"/>
<path d="M428.92 736H453.08M576.92 736H733.08M992.92 736H1105.08M1115.92 736H1223.08M1262.92 736H1292.08M1488.92 736H1512.08" fill="none" stroke="#59d200" stroke-width="4.167"/>
<path d="M590.92 720H615.08M654.92 720H772.08M1071.92 720H1243.08M1262.92 720H1287.08" fill="none" stroke="#00fb73" stroke-width="4.167"/>
<path d="M595.92 703H733.08M1090.92 703H1120.08M1198.92 703H1223.08M1272.92 703H1326.08" fill="none" stroke="#00e0ff" stroke-width="4.167"/>
<path d="M1110.92 687H1135.08" fill="none" stroke="#000ecd" stroke-width="4.167"/>
<g fill="none" stroke="#fff" stroke-opacity="0.5" stroke-width="2.083" stroke-dasharray="2.083 3.438">
<path d="M74 842.5 V641.5"/>
<path d="M218 842.5 V641.5"/>
<path d="M365 842.5 V641.5"/>
<path d="M505 842.5 V641.5"/>
<path d="M650 842.5 V641.5"/>
<path d="M797 842.5 V641.5"/>
<path d="M940 842.5 V641.5"/>
<path d="M1091 842.5 V641.5"/>
<path d="M1239 842.5 V641.5"/>
<path d="M1394 842.5 V641.5"/>
<path d="M1548 842.5 V641.5"/>
<path d="M1687 842.5 V641.5"/>
</g>
<g font-family="'DejaVu Sans','Liberation Sans',sans-serif" font-size="11.11" fill="#fff" text-anchor="middle">
<text transform="translate(117.07 832) scale(0.92 1)">KSE</text>
<text transform="translate(254.39 832) scale(0.92 1)">ETA</text>
<text transform="translate(494.69 832) scale(0.92 1)">NZC</text>
<text transform="translate(710.47 832) scale(0.92 1)">NDA</text>
<text transform="translate(852.69 832) scale(0.92 1)">SPE</text>
<text transform="translate(945.87 832) scale(0.92 1)">ARD</text>
<text transform="translate(1024.33 832) scale(0.92 1)">EGE</text>
<text transform="translate(1142.03 832) scale(0.92 1)">NTA</text>
<text transform="translate(1284.25 832) scale(0.92 1)">MON</text>
<text transform="translate(1343.1 832) scale(0.92 1)">URS</text>
<text transform="translate(1411.76 832) scale(0.92 1)">AHY</text>
<text transform="translate(1485.32 832) scale(0.92 1)">GUM</text>
<text transform="translate(1534.36 832) scale(0.92 1)">OHY</text>
<text transform="translate(1735.43 832) scale(0.92 1)">XHE</text>
<text transform="translate(1769.76 832) scale(0.92 1)">EVI</text>
<text transform="translate(175.92 815) scale(0.92 1)">AVB</text>
<text transform="translate(254.39 815) scale(0.92 1)">ELY</text>
<text transform="translate(323.04 815) scale(0.92 1)">CAM</text>
<text transform="translate(430.94 815) scale(0.92 1)">SSG</text>
<text transform="translate(578.06 815) scale(0.92 1)">PCA</text>
<text transform="translate(720.28 815) scale(0.92 1)">AUD</text>
<text transform="translate(808.55 815) scale(0.92 1)">AUR</text>
<text transform="translate(931.15 815) scale(0.92 1)">DSX</text>
<text transform="translate(1009.62 815) scale(0.92 1)">OCU</text>
<text transform="translate(1137.13 815) scale(0.92 1)">OER</text>
<text transform="translate(1254.83 815) scale(0.92 1)">DKD</text>
<text transform="translate(1303.87 815) scale(0.92 1)">DSV</text>
<text transform="translate(1352.91 815) scale(0.92 1)">ALY</text>
<text transform="translate(1406.85 815) scale(0.92 1)">JLE</text>
<text transform="translate(1470.61 815) scale(0.92 1)">SCC</text>
<text transform="translate(1558.88 815) scale(0.92 1)">FEV</text>
<text transform="translate(175.92 799) scale(0.92 1)">LYR</text>
<text transform="translate(372.09 799) scale(0.92 1)">JMC</text>
<text transform="translate(558.44 799) scale(0.92 1)">JPE</text>
<text transform="translate(671.24 799) scale(0.92 1)">PAU</text>
<text transform="translate(774.22 799) scale(0.92 1)">NIA</text>
<text transform="translate(1048.85 799) scale(0.92 1)">STA</text>
<text transform="translate(1205.78 799) scale(0.92 1)">NOO</text>
<text transform="translate(1352.91 799) scale(0.92 1)">COM</text>
<text transform="translate(1470.61 799) scale(0.92 1)">NCC</text>
<text transform="translate(1563.78 799) scale(0.92 1)">FED</text>
<text transform="translate(205.35 782) scale(0.92 1)">HVI</text>
<text transform="translate(411.32 782) scale(0.92 1)">ARI</text>
<text transform="translate(529.02 782) scale(0.92 1)">SZC</text>
<text transform="translate(617.29 782) scale(0.92 1)">CAP</text>
<text transform="translate(818.36 782) scale(0.92 1)">NUE</text>
<text transform="translate(960.58 782) scale(0.92 1)">OCT</text>
<text transform="translate(1058.66 782) scale(0.92 1)">ORI</text>
<text transform="translate(1186.17 782) scale(0.92 1)">AMO</text>
<text transform="translate(1254.83 782) scale(0.92 1)">DPC</text>
<text transform="translate(1328.39 782) scale(0.92 1)">XVI</text>
<text transform="translate(1406.85 782) scale(0.92 1)">QUA</text>
<text transform="translate(1558.88 782) scale(0.92 1)">AAN</text>
<text transform="translate(352.47 766) scale(0.92 1)">TAH</text>
<text transform="translate(430.94 766) scale(0.92 1)">JEA</text>
<text transform="translate(479.98 766) scale(0.92 1)">JIP</text>
<text transform="translate(538.83 766) scale(0.92 1)">PPS</text>
<text transform="translate(578.06 766) scale(0.92 1)">ZCS</text>
<text transform="translate(632 766) scale(0.92 1)">GDR</text>
<text transform="translate(970.39 766) scale(0.92 1)">DRA</text>
<text transform="translate(1073.37 766) scale(0.92 1)">LUM</text>
<text transform="translate(1112.61 766) scale(0.92 1)">RPU</text>
<text transform="translate(1176.36 766) scale(0.92 1)">THA</text>
<text transform="translate(1259.73 766) scale(0.92 1)">PSU</text>
<text transform="translate(1470.61 766) scale(0.92 1)">XCB</text>
<text transform="translate(430.94 750) scale(0.92 1)">JRC</text>
<text transform="translate(543.73 750) scale(0.92 1)">CAN</text>
<text transform="translate(578.06 750) scale(0.92 1)">FAN</text>
<text transform="translate(681.04 750) scale(0.92 1)">PER</text>
<text transform="translate(1048.85 750) scale(0.92 1)">CTA</text>
<text transform="translate(1264.63 750) scale(0.92 1)">HYD</text>
<text transform="translate(1480.42 750) scale(0.92 1)">XUM</text>
<text transform="translate(440.74 733) scale(0.92 1)">COR</text>
<text transform="translate(656.52 733) scale(0.92 1)">SDA</text>
<text transform="translate(1048.85 733) scale(0.92 1)">LMI</text>
<text transform="translate(1166.55 733) scale(0.92 1)">LEO</text>
<text transform="translate(1274.44 733) scale(0.92 1)">EHY</text>
<text transform="translate(1500.03 733) scale(0.92 1)">ECV</text>
<text transform="translate(602.58 717) scale(0.92 1)">JXA</text>
<text transform="translate(715.37 717) scale(0.92 1)">KCG</text>
<text transform="translate(1156.74 717) scale(0.92 1)">AND</text>
<text transform="translate(1274.44 717) scale(0.92 1)">DAD</text>
<text transform="translate(666.33 701) scale(0.92 1)">ERI</text>
<text transform="translate(1107.7 701) scale(0.92 1)">SLD</text>
<text transform="translate(1210.69 701) scale(0.92 1)">ORS</text>
<text transform="translate(1298.96 701) scale(0.92 1)">GEM</text>
<text transform="translate(1122.41 684) scale(0.92 1)">KUM</text>
</g>
<path d="M112.83 834h8.33M117 829.83v8.33M240.83 834h8.33M245 829.83v8.33M510.83 834h8.33M515 829.83v8.33M706.83 834h8.33M711 829.83v8.33M832.83 834h8.33M837 829.83v8.33M961.83 834h8.33M966 829.83v8.33M986.83 834h8.33M991 829.83v8.33M1115.83 834h8.33M1120 829.83v8.33M1294.83 834h8.33M1299 829.83v8.33M1341.83 834h8.33M1346 829.83v8.33M1412.83 834h8.33M1417 829.83v8.33M1481.83 834h8.33M1486 829.83v8.33M1530.83 834h8.33M1535 829.83v8.33M1731.83 834h8.33M1736 829.83v8.33M1765.83 834h8.33M1770 829.83v8.33M171.83 818h8.33M176 813.83v8.33M255.83 818h8.33M260 813.83v8.33M321.83 818h8.33M326 813.83v8.33M436.83 818h8.33M441 813.83v8.33M598.83 818h8.33M603 813.83v8.33M716.83 818h8.33M721 813.83v8.33M792.83 818h8.33M797 813.83v8.33M938.83 818h8.33M943 813.83v8.33M1005.83 818h8.33M1010 813.83v8.33M1152.83 818h8.33M1157 813.83v8.33M1250.83 818h8.33M1255 813.83v8.33M1299.83 818h8.33M1304 813.83v8.33M1348.83 818h8.33M1353 813.83v8.33M1402.83 818h8.33M1407 813.83v8.33M1466.83 818h8.33M1471 813.83v8.33M1554.83 818h8.33M1559 813.83v8.33M172.83 802h8.33M177 797.83v8.33M377.83 802h8.33M382 797.83v8.33M544.83 802h8.33M549 797.83v8.33M681.83 802h8.33M686 797.83v8.33M740.83 802h8.33M745 797.83v8.33M1074.83 802h8.33M1079 797.83v8.33M1216.83 802h8.33M1221 797.83v8.33M1304.83 802h8.33M1309 797.83v8.33M1466.83 802h8.33M1471 797.83v8.33M1559.83 802h8.33M1564 797.83v8.33M200.83 785h8.33M205 780.83v8.33M398.83 785h8.33M403 780.83v8.33M525.83 785h8.33M530 780.83v8.33M637.83 785h8.33M642 780.83v8.33M814.83 785h8.33M819 780.83v8.33M959.83 785h8.33M964 780.83v8.33M1039.83 785h8.33M1044 780.83v8.33M1188.83 785h8.33M1193 780.83v8.33M1250.83 785h8.33M1255 780.83v8.33M1324.83 785h8.33M1329 780.83v8.33M1402.83 785h8.33M1407 780.83v8.33M1545.83 785h8.33M1550 780.83v8.33M355.83 769h8.33M360 764.83v8.33M425.83 769h8.33M430 764.83v8.33M475.83 769h8.33M480 764.83v8.33M534.83 769h8.33M539 764.83v8.33M569.83 769h8.33M574 764.83v8.33M630.83 769h8.33M635 764.83v8.33M973.83 769h8.33M978 764.83v8.33M1069.83 769h8.33M1074 764.83v8.33M1108.83 769h8.33M1113 764.83v8.33M1177.83 769h8.33M1182 764.83v8.33M1255.83 769h8.33M1260 764.83v8.33M1466.83 769h8.33M1471 764.83v8.33M426.83 752h8.33M431 747.83v8.33M539.83 752h8.33M544 747.83v8.33M574.83 752h8.33M579 747.83v8.33M701.83 752h8.33M706 747.83v8.33M1093.83 752h8.33M1098 747.83v8.33M1270.83 752h8.33M1275 747.83v8.33M1476.83 752h8.33M1481 747.83v8.33M436.83 736h8.33M441 731.83v8.33M630.83 736h8.33M635 731.83v8.33M1038.83 736h8.33M1043 731.83v8.33M1167.83 736h8.33M1172 731.83v8.33M1275.83 736h8.33M1280 731.83v8.33M1496.83 736h8.33M1501 731.83v8.33M598.83 720h8.33M603 715.83v8.33M726.83 720h8.33M731 715.83v8.33M1187.83 720h8.33M1192 715.83v8.33M1270.83 720h8.33M1275 715.83v8.33M686.83 703h8.33M691 698.83v8.33M1101.83 703h8.33M1106 698.83v8.33M1206.83 703h8.33M1211 698.83v8.33M1299.83 703h8.33M1304 698.83v8.33M1118.83 687h8.33M1123 682.83v8.33" fill="none" stroke="#fff" stroke-width="2.083"/>
<rect x="19.5" y="641.5" width="1766" height="201" fill="none" stroke="#fff" stroke-width="1.111"/>
<path d="M19.5 842.5v5.40M265.5 842.5v5.40M510.5 842.5v5.40M755.5 842.5v5.40M1000.5 842.5v5.40M1246.5 842.5v5.40M1491.5 842.5v5.40M1736.5 842.5v5.40" fill="none" stroke="#fff" stroke-width="1.111"/>
<g font-family="'DejaVu Sans','Liberation Sans',sans-serif" font-size="13.89" fill="#fff" text-anchor="middle">
<text transform="translate(20.49 862.4) scale(0.96 1)">0</text>
<text transform="translate(265.7 862.4) scale(0.96 1)">50</text>
<text transform="translate(510.9 862.4) scale(0.96 1)">100</text>
<text transform="translate(756.11 862.4) scale(0.96 1)">150</text>
<text transform="translate(1001.31 862.4) scale(0.96 1)">200</text>
<text transform="translate(1246.52 862.4) scale(0.96 1)">250</text>
<text transform="translate(1491.72 862.4) scale(0.96 1)">300</text>
<text transform="translate(1736.93 862.4) scale(0.96 1)">350</text>
<text x="902.23" y="882.3">Solar longitude (deg)</text>
</g>
</svg>
</body></html>
